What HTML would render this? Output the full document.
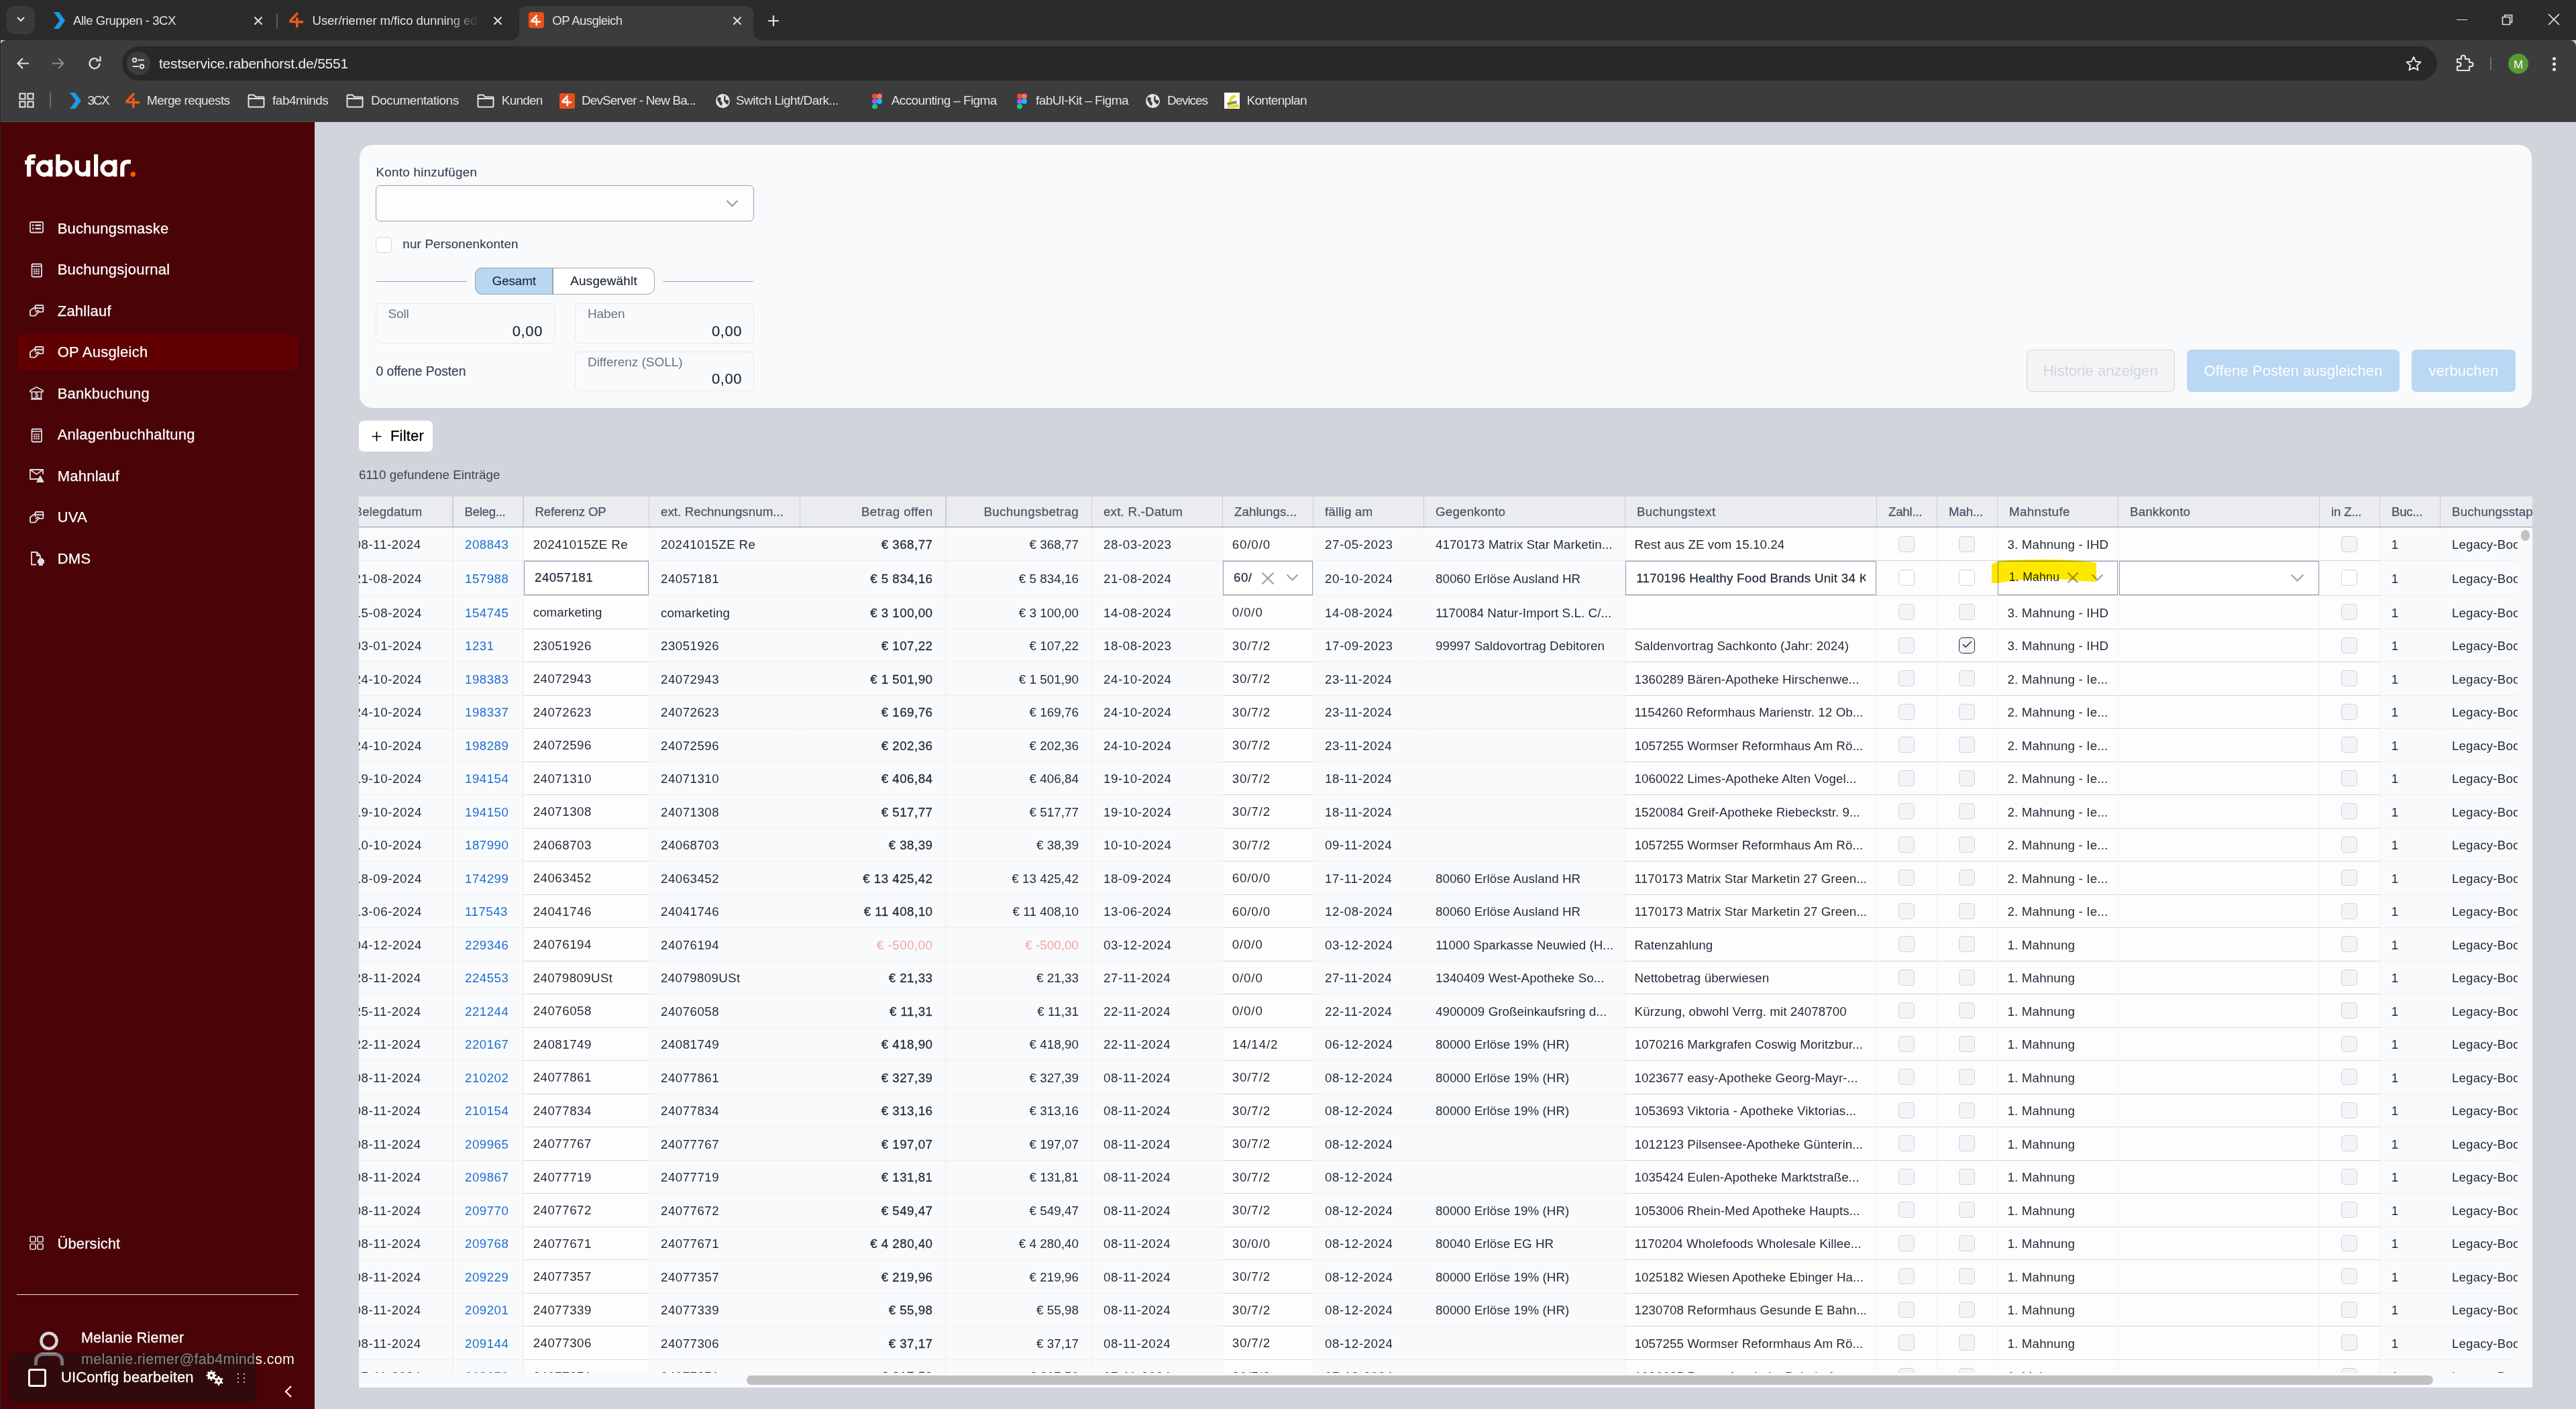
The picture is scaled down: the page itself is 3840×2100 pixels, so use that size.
<!DOCTYPE html><html><head><meta charset="utf-8"><style>
html,body{margin:0;padding:0;}
body{width:3840px;height:2100px;overflow:hidden;position:relative;font-family:"Liberation Sans", sans-serif;background:#d1d5db;}
.t{position:absolute;line-height:1;white-space:nowrap;}
.r{position:absolute;box-sizing:border-box;}
</style></head><body>
<div class="r" style="left:0.00px;top:0.00px;width:3840.00px;height:60.00px;background:#2b2b2b"></div><div class="r" style="left:0.00px;top:60.00px;width:3840.00px;height:121.00px;background:#3c3c3c;border-radius:9px 9px 0 0"></div><div class="r" style="left:0.00px;top:181.00px;width:3840.00px;height:1.00px;background:#4a4e50"></div><div class="r" style="left:10.00px;top:9.00px;width:42.00px;height:42.00px;background:#3a3a3a;border-radius:12px"></div><svg class="r" style="left:24.00px;top:24.00px;" width="14" height="10" viewBox="0 0 14 10"><path d="M2 2 L7 7 L12 2" stroke="#e3e3e3" stroke-width="2.2" fill="none"/></svg><svg class="r" style="left:78.00px;top:18.00px;" width="20" height="25" viewBox="0 0 20 25"><path d="M2 0 H10 L19 12.5 L10 25 H2 L11 12.5 Z" fill="#1a9be6"/></svg><div class="t" style="top:22.49px;font-size:18.6px;color:#e3e3e3;letter-spacing:-0.46px;left:109.00px;">Alle Gruppen - 3CX</div><svg class="r" style="left:378.00px;top:24.00px;" width="14" height="14" viewBox="0 0 14 14"><path d="M1.5 1.5 L12.5 12.5 M12.5 1.5 L1.5 12.5" stroke="#e3e3e3" stroke-width="2"/></svg><div class="r" style="left:412.00px;top:19.50px;width:2.00px;height:23.00px;background:#5b5b5b"></div><svg class="r" style="left:430.00px;top:18.00px;" width="24" height="24" viewBox="0 0 24 24"><path d="M12.8 2.5 L3.2 12.6 Q2.2 14.2 4.4 14.2 L20.5 14.6 M12.8 9.5 V21.8" stroke="#f0561e" stroke-width="3.6" fill="none" stroke-linecap="round" stroke-linejoin="round"/></svg><div class="t" style="top:22.49px;font-size:18.6px;color:#e3e3e3;letter-spacing:-0.109px;left:465.60px;width:250px;overflow:hidden;-webkit-mask-image:linear-gradient(90deg,#000 80%,transparent 100%);height:24px;">User/riemer m/fico dunning edi</div><svg class="r" style="left:735.00px;top:24.00px;" width="14" height="14" viewBox="0 0 14 14"><path d="M1.5 1.5 L12.5 12.5 M12.5 1.5 L1.5 12.5" stroke="#e3e3e3" stroke-width="2"/></svg><svg class="r" style="left:760.00px;top:8.00px;" width="380" height="52" viewBox="0 0 380 52"><path d="M0 52 Q14 52 14 38 V13 Q14 1 26 1 H351 Q363 1 363 13 V38 Q363 52 377 52 Z" fill="#3c3c3c"/></svg><div class="r" style="left:787.50px;top:18.00px;width:23.50px;height:23.50px;background:#e8501c;border-radius:4px"></div><svg class="r" style="left:790.00px;top:21.00px;" width="18" height="18" viewBox="0 0 18 18"><path d="M9.8 2.5 L2.8 10 Q2 11.2 3.6 11.2 L15 11.5 M9.8 7.2 V16" stroke="#fff" stroke-width="2.7" fill="none" stroke-linecap="round" stroke-linejoin="round"/></svg><div class="t" style="top:22.49px;font-size:18.6px;color:#e3e3e3;letter-spacing:-0.594px;left:823.30px;">OP Ausgleich</div><svg class="r" style="left:1092.00px;top:24.00px;" width="14" height="14" viewBox="0 0 14 14"><path d="M1.5 1.5 L12.5 12.5 M12.5 1.5 L1.5 12.5" stroke="#e3e3e3" stroke-width="2"/></svg><svg class="r" style="left:1144.00px;top:22.00px;" width="18" height="18" viewBox="0 0 18 18"><path d="M9 1 V17 M1 9 H17" stroke="#e3e3e3" stroke-width="2.2"/></svg><div class="r" style="left:3662.00px;top:28.50px;width:16.00px;height:1.50px;background:#e3e3e3"></div><svg class="r" style="left:3728.00px;top:20.00px;" width="20" height="18" viewBox="0 0 20 18"><path d="M2.5 5.5 H13.5 V16.5 H2.5 Z M5.5 5.5 V2.5 H16.5 V13.5 H13.5" stroke="#e3e3e3" stroke-width="1.6" fill="none"/></svg><svg class="r" style="left:3798.00px;top:20.00px;" width="18" height="18" viewBox="0 0 18 18"><path d="M1 1 L17 17 M17 1 L1 17" stroke="#e3e3e3" stroke-width="1.7"/></svg><svg class="r" style="left:24.00px;top:85.00px;" width="20" height="19" viewBox="0 0 20 19"><path d="M19 9.5 H3 M10 2 L2.5 9.5 L10 17" stroke="#e3e3e3" stroke-width="2.2" fill="none"/></svg><svg class="r" style="left:77.00px;top:85.00px;" width="20" height="19" viewBox="0 0 20 19"><path d="M1 9.5 H17 M10 2 L17.5 9.5 L10 17" stroke="#8a8a8a" stroke-width="2.2" fill="none"/></svg><svg class="r" style="left:131.00px;top:84.00px;" width="22" height="21" viewBox="0 0 22 21"><path d="M17.5 10.5 A7.5 7.5 0 1 1 15.3 5.2" stroke="#e3e3e3" stroke-width="2.2" fill="none"/><path d="M12 4.5 H18.5 V-2" transform="translate(0,2)" stroke="#e3e3e3" stroke-width="2.2" fill="none"/></svg><div class="r" style="left:182.00px;top:69.00px;width:3451.00px;height:51.00px;background:#282828;border-radius:26px"></div><div class="r" style="left:189.00px;top:77.00px;width:35.00px;height:35.00px;background:#3c3c3c;border-radius:50%"></div><svg class="r" style="left:196.00px;top:85.00px;" width="21" height="19" viewBox="0 0 21 19"><circle cx="4.5" cy="4.5" r="2.8" stroke="#e3e3e3" stroke-width="1.9" fill="none"/><path d="M9.5 4.5 H19" stroke="#e3e3e3" stroke-width="1.9"/><circle cx="15.5" cy="14" r="2.8" stroke="#e3e3e3" stroke-width="1.9" fill="none"/><path d="M1.5 14 H11" stroke="#e3e3e3" stroke-width="1.9"/></svg><div class="t" style="top:83.95px;font-size:21px;color:#f0f0f0;letter-spacing:-0.211px;left:237.00px;">testservice.rabenhorst.de/5551</div><svg class="r" style="left:3584.00px;top:83.00px;" width="28" height="23" viewBox="0 0 28 23"><path d="M14 2 L17.2 8.8 L24.5 9.6 L19 14.5 L20.6 21.5 L14 17.8 L7.4 21.5 L9 14.5 L3.5 9.6 L10.8 8.8 Z" stroke="#e3e3e3" stroke-width="2" fill="none" stroke-linejoin="round"/></svg><svg class="r" style="left:3660.00px;top:80.00px;" width="30" height="27" viewBox="0 0 30 27"><path d="M3 8 H9 V5.5 A3 3 0 0 1 15 5.5 V8 H21 V13 H23.5 A3 3 0 0 1 23.5 19 H21 V25 H3 V19 H5.5 A3 3 0 0 0 5.5 13 H3 Z" stroke="#e3e3e3" stroke-width="2.2" fill="none" stroke-linejoin="round"/></svg><div class="r" style="left:3712.00px;top:84.50px;width:2.00px;height:20.50px;background:#6a6a6a"></div><div class="r" style="left:3739.00px;top:80.00px;width:30.00px;height:30.00px;background:#5a9a33;border-radius:50%"></div><div class="t" style="top:87.75px;font-size:17px;color:#fff;left:2554.00px;width:2400px;text-align:center;">M</div><div class="r" style="left:3804.50px;top:84.50px;width:5.00px;height:5.00px;background:#e3e3e3;border-radius:50%"></div><div class="r" style="left:3804.50px;top:92.50px;width:5.00px;height:5.00px;background:#e3e3e3;border-radius:50%"></div><div class="r" style="left:3804.50px;top:100.50px;width:5.00px;height:5.00px;background:#e3e3e3;border-radius:50%"></div><svg class="r" style="left:28.00px;top:138.00px;" width="24" height="24" viewBox="0 0 24 24"><rect x="1.5" y="1.5" width="8" height="8" stroke="#e3e3e3" stroke-width="2" fill="none"/><rect x="13.5" y="1.5" width="8" height="8" stroke="#e3e3e3" stroke-width="2" fill="none"/><rect x="1.5" y="13.5" width="8" height="8" stroke="#e3e3e3" stroke-width="2" fill="none"/><rect x="13.5" y="13.5" width="8" height="8" stroke="#e3e3e3" stroke-width="2" fill="none"/></svg><div class="r" style="left:73.50px;top:138.00px;width:2.00px;height:24.00px;background:#6a6a6a"></div><svg class="r" style="left:102.00px;top:138.00px;" width="20" height="24" viewBox="0 0 20 24"><path d="M2 0 H10 L19 12 L10 24 H2 L11 12 Z" fill="#1a9be6"/></svg><div class="t" style="top:140.15px;font-size:19px;color:#e3e3e3;letter-spacing:-1.887px;left:130.40px;">3CX</div><svg class="r" style="left:186.00px;top:138.00px;" width="24" height="24" viewBox="0 0 24 24"><path d="M12.8 2.5 L3.2 12.6 Q2.2 14.2 4.4 14.2 L20.5 14.6 M12.8 9.5 V21.8" stroke="#f0561e" stroke-width="3.6" fill="none" stroke-linecap="round" stroke-linejoin="round"/></svg><div class="t" style="top:140.15px;font-size:19px;color:#e3e3e3;letter-spacing:-0.608px;left:219.00px;">Merge requests</div><svg class="r" style="left:369.00px;top:140.00px;" width="26" height="21" viewBox="0 0 26 21"><path d="M1.5 2.5 Q1.5 1.5 2.5 1.5 H9.5 L12 4.5 H23.5 Q24.5 4.5 24.5 5.5 V18.5 Q24.5 19.5 23.5 19.5 H2.5 Q1.5 19.5 1.5 18.5 Z M1.5 7 H24.5" stroke="#e3e3e3" stroke-width="2" fill="none"/></svg><div class="t" style="top:140.15px;font-size:19px;color:#e3e3e3;letter-spacing:-0.474px;left:406.00px;">fab4minds</div><svg class="r" style="left:516.00px;top:140.00px;" width="26" height="21" viewBox="0 0 26 21"><path d="M1.5 2.5 Q1.5 1.5 2.5 1.5 H9.5 L12 4.5 H23.5 Q24.5 4.5 24.5 5.5 V18.5 Q24.5 19.5 23.5 19.5 H2.5 Q1.5 19.5 1.5 18.5 Z M1.5 7 H24.5" stroke="#e3e3e3" stroke-width="2" fill="none"/></svg><div class="t" style="top:140.15px;font-size:19px;color:#e3e3e3;letter-spacing:-0.471px;left:553.00px;">Documentations</div><svg class="r" style="left:711.00px;top:140.00px;" width="26" height="21" viewBox="0 0 26 21"><path d="M1.5 2.5 Q1.5 1.5 2.5 1.5 H9.5 L12 4.5 H23.5 Q24.5 4.5 24.5 5.5 V18.5 Q24.5 19.5 23.5 19.5 H2.5 Q1.5 19.5 1.5 18.5 Z M1.5 7 H24.5" stroke="#e3e3e3" stroke-width="2" fill="none"/></svg><div class="t" style="top:140.15px;font-size:19px;color:#e3e3e3;letter-spacing:-0.818px;left:747.80px;">Kunden</div><div class="r" style="left:833.80px;top:138.50px;width:23.20px;height:23.00px;background:#e8501c;border-radius:3px"></div><svg class="r" style="left:836.00px;top:141.00px;" width="18" height="18" viewBox="0 0 18 18"><path d="M9.8 2.5 L2.8 10 Q2 11.2 3.6 11.2 L15 11.5 M9.8 7.2 V16" stroke="#fff" stroke-width="2.7" fill="none" stroke-linecap="round" stroke-linejoin="round"/></svg><div class="t" style="top:140.15px;font-size:19px;color:#e3e3e3;letter-spacing:-0.905px;left:867.00px;">DevServer - New Ba...</div><svg class="r" style="left:1066.00px;top:139.00px;" width="23" height="23" viewBox="0 0 23 23"><circle cx="11.5" cy="11.5" r="10.5" fill="#e3e3e3"/><path d="M4 6 Q8 5 9 8 Q7 11 10 13 Q12 15 9 19 Q6 16 5 13 Q2 11 4 6 Z M14 3 Q17 6 15 9 Q18 11 20 10 Q21 14 18 17 Q16 15 14 13 Q12 10 14 3Z" fill="#3c3c3c"/></svg><div class="t" style="top:140.15px;font-size:19px;color:#e3e3e3;letter-spacing:-0.549px;left:1097.00px;">Switch Light/Dark...</div><svg class="r" style="left:1299.00px;top:139.00px;" width="18" height="24" viewBox="0 0 18 24"><rect x="1" y="0.5" width="8" height="7.7" rx="3.8" fill="#f24e1e"/><rect x="8" y="0.5" width="8" height="7.7" rx="3.8" fill="#ff7262"/><rect x="1" y="8.2" width="8" height="7.7" rx="3.8" fill="#a259ff"/><circle cx="12" cy="12" r="3.9" fill="#1abcfe"/><rect x="1" y="15.9" width="8" height="7.7" rx="3.8" fill="#0acf83"/></svg><div class="t" style="top:140.15px;font-size:19px;color:#e3e3e3;letter-spacing:-0.607px;left:1328.70px;">Accounting – Figma</div><svg class="r" style="left:1515.00px;top:139.00px;" width="18" height="24" viewBox="0 0 18 24"><rect x="1" y="0.5" width="8" height="7.7" rx="3.8" fill="#f24e1e"/><rect x="8" y="0.5" width="8" height="7.7" rx="3.8" fill="#ff7262"/><rect x="1" y="8.2" width="8" height="7.7" rx="3.8" fill="#a259ff"/><circle cx="12" cy="12" r="3.9" fill="#1abcfe"/><rect x="1" y="15.9" width="8" height="7.7" rx="3.8" fill="#0acf83"/></svg><div class="t" style="top:140.15px;font-size:19px;color:#e3e3e3;letter-spacing:-0.578px;left:1544.00px;">fabUI-Kit – Figma</div><svg class="r" style="left:1707.00px;top:139.00px;" width="23" height="23" viewBox="0 0 23 23"><circle cx="11.5" cy="11.5" r="10.5" fill="#e3e3e3"/><path d="M4 6 Q8 5 9 8 Q7 11 10 13 Q12 15 9 19 Q6 16 5 13 Q2 11 4 6 Z M14 3 Q17 6 15 9 Q18 11 20 10 Q21 14 18 17 Q16 15 14 13 Q12 10 14 3Z" fill="#3c3c3c"/></svg><div class="t" style="top:140.15px;font-size:19px;color:#e3e3e3;letter-spacing:-1.111px;left:1740.00px;">Devices</div><div class="r" style="left:1824.60px;top:137.50px;width:23.80px;height:24.00px;background:#fff"></div><svg class="r" style="left:1824.60px;top:137.50px;" width="24" height="24" viewBox="0 0 24 24"><path d="M6 12 Q10 4 15 3 L18 6 Q12 9 10 14 Z" fill="#e2e21a"/><path d="M4 15 L18 12 L19 16 L5 19 Z" fill="#8a8a7a"/><path d="M4 20 L21 17 L22 22 L5 23Z" fill="#dede20"/></svg><div class="t" style="top:140.15px;font-size:19px;color:#e3e3e3;letter-spacing:-0.674px;left:1858.40px;">Kontenplan</div><div class="r" style="left:0.00px;top:182.00px;width:469.00px;height:1918.00px;background:#4a0306"></div><svg class="r" style="left:30.00px;top:222.00px;" width="180" height="50" viewBox="0 0 180 50"><g transform="translate(-30,-222)" fill="none" stroke="#fefefe" stroke-width="6.2">
<path d="M43.1 263.2 V238 Q43.1 233 48.5 233 H53.2"/>
<path d="M37.1 242 H51.8"/>
<circle cx="66.2" cy="251" r="9.4"/><path d="M75.3 238.1 V263.2"/>
<path d="M86.4 230 V263.2"/><circle cx="95.6" cy="251" r="9.4"/>
<path d="M114.7 239.1 V251.5 A8.35 8.35 0 0 0 131.4 251.5 V239.1 M131.4 250 V263.2"/>
<path d="M143.1 230 V263.2"/>
<circle cx="161.9" cy="251" r="9.4"/><path d="M171.4 238.1 V263.2"/>
<path d="M182.3 263.2 V250 Q182.3 241.2 191 241.2 H195"/>
</g><circle cx="168.3" cy="37.7" r="3.7" fill="#ff5a00"/></svg><div class="r" style="left:25.60px;top:497.70px;width:418.80px;height:54.50px;background:#610000;border-radius:9px"></div><div class="t" style="top:329.50px;font-size:22px;color:#ffffff;letter-spacing:0.25px;left:85.70px;-webkit-text-stroke:0.25px #fff;">Buchungsmaske</div><svg class="r" style="left:44.00px;top:330.20px;" width="23" height="22" viewBox="0 0 23 22"><rect x="1" y="1" width="19" height="15.5" rx="1.5" stroke="#dcdce4" stroke-width="1.8" fill="none"/><rect x="4" y="4.5" width="2.5" height="2.5" fill="#dcdce4"/><rect x="8.5" y="4.5" width="8.5" height="2.5" fill="#dcdce4"/><rect x="4" y="9.5" width="2.5" height="2.5" fill="#dcdce4"/><rect x="8.5" y="9.5" width="8.5" height="2.5" fill="#dcdce4"/></svg><div class="t" style="top:391.00px;font-size:22px;color:#ffffff;letter-spacing:0.25px;left:85.70px;-webkit-text-stroke:0.25px #fff;">Buchungsjournal</div><svg class="r" style="left:44.00px;top:391.70px;" width="23" height="22" viewBox="0 0 23 22"><rect x="3.5" y="1.5" width="14.5" height="19" rx="1.5" stroke="#dcdce4" stroke-width="1.8" fill="none"/><path d="M3.5 5 H18" stroke="#dcdce4" stroke-width="1.6"/><rect x="6.2" y="8.3" width="2.2" height="2.2" fill="#dcdce4"/><rect x="6.2" y="11.5" width="2.2" height="2.2" fill="#dcdce4"/><rect x="6.2" y="14.7" width="2.2" height="2.2" fill="#dcdce4"/><rect x="9.4" y="8.3" width="2.2" height="2.2" fill="#dcdce4"/><rect x="9.4" y="11.5" width="2.2" height="2.2" fill="#dcdce4"/><rect x="9.4" y="14.7" width="2.2" height="2.2" fill="#dcdce4"/><rect x="12.6" y="8.3" width="2.2" height="2.2" fill="#dcdce4"/><rect x="12.6" y="11.5" width="2.2" height="2.2" fill="#dcdce4"/><rect x="12.6" y="14.7" width="2.2" height="2.2" fill="#dcdce4"/></svg><div class="t" style="top:452.50px;font-size:22px;color:#ffffff;letter-spacing:0.25px;left:85.70px;-webkit-text-stroke:0.25px #fff;">Zahllauf</div><svg class="r" style="left:44.00px;top:453.20px;" width="23" height="22" viewBox="0 0 23 22"><path d="M8.6 9.5 V3.2 Q8.6 2 9.8 2 H19.3 Q20.4 2 20.4 3.2 V10.8 Q20.4 11.9 19.3 11.9 H14.2 M8.6 6.2 H20.4" stroke="#dcdce4" stroke-width="1.9" fill="none"/><path d="M8.6 4.6 L1.6 9.3 Q1 9.7 1 10.5 V16.6 Q1 17.6 2 17.6 H8.2 L14.2 11 Q13 9.3 11.3 10.2 L9.2 12.2" stroke="#dcdce4" stroke-width="1.9" fill="none" stroke-linejoin="round"/></svg><div class="t" style="top:514.00px;font-size:22px;color:#ffffff;letter-spacing:0.25px;left:85.70px;-webkit-text-stroke:0.25px #fff;">OP Ausgleich</div><svg class="r" style="left:44.00px;top:514.70px;" width="23" height="22" viewBox="0 0 23 22"><path d="M8.6 9.5 V3.2 Q8.6 2 9.8 2 H19.3 Q20.4 2 20.4 3.2 V10.8 Q20.4 11.9 19.3 11.9 H14.2 M8.6 6.2 H20.4" stroke="#dcdce4" stroke-width="1.9" fill="none"/><path d="M8.6 4.6 L1.6 9.3 Q1 9.7 1 10.5 V16.6 Q1 17.6 2 17.6 H8.2 L14.2 11 Q13 9.3 11.3 10.2 L9.2 12.2" stroke="#dcdce4" stroke-width="1.9" fill="none" stroke-linejoin="round"/></svg><div class="t" style="top:575.50px;font-size:22px;color:#ffffff;letter-spacing:0.25px;left:85.70px;-webkit-text-stroke:0.25px #fff;">Bankbuchung</div><svg class="r" style="left:44.00px;top:576.20px;" width="23" height="22" viewBox="0 0 23 22"><path d="M10.5 1 L20 6 V8 H1 V6 Z M2 19 H19 M3 17.5 H18 M3.5 8 V17 M17.5 8 V17" stroke="#dcdce4" stroke-width="1.7" fill="none"/><text x="10.5" y="16" font-size="10" text-anchor="middle" fill="#dcdce4" font-family="Liberation Sans" font-weight="700">$</text></svg><div class="t" style="top:637.00px;font-size:22px;color:#ffffff;letter-spacing:0.25px;left:85.70px;-webkit-text-stroke:0.25px #fff;">Anlagenbuchhaltung</div><svg class="r" style="left:44.00px;top:637.70px;" width="23" height="22" viewBox="0 0 23 22"><rect x="3.5" y="1.5" width="14.5" height="19" rx="1.5" stroke="#dcdce4" stroke-width="1.8" fill="none"/><path d="M3.5 5 H18" stroke="#dcdce4" stroke-width="1.6"/><rect x="6.2" y="8.3" width="2.2" height="2.2" fill="#dcdce4"/><rect x="6.2" y="11.5" width="2.2" height="2.2" fill="#dcdce4"/><rect x="6.2" y="14.7" width="2.2" height="2.2" fill="#dcdce4"/><rect x="9.4" y="8.3" width="2.2" height="2.2" fill="#dcdce4"/><rect x="9.4" y="11.5" width="2.2" height="2.2" fill="#dcdce4"/><rect x="9.4" y="14.7" width="2.2" height="2.2" fill="#dcdce4"/><rect x="12.6" y="8.3" width="2.2" height="2.2" fill="#dcdce4"/><rect x="12.6" y="11.5" width="2.2" height="2.2" fill="#dcdce4"/><rect x="12.6" y="14.7" width="2.2" height="2.2" fill="#dcdce4"/></svg><div class="t" style="top:698.50px;font-size:22px;color:#ffffff;letter-spacing:0.25px;left:85.70px;-webkit-text-stroke:0.25px #fff;">Mahnlauf</div><svg class="r" style="left:44.00px;top:699.20px;" width="23" height="22" viewBox="0 0 23 22"><path d="M13 15 H1 V1 H20 V8 M1 1 L10.5 8 L20 1" stroke="#dcdce4" stroke-width="1.8" fill="none"/><path d="M16 9 L22 20 H10 Z" fill="#dcdce4"/><path d="M16 12.5 V16 M16 17.5 V18.5" stroke="#dcdce4" stroke-width="1.5"/></svg><div class="t" style="top:760.00px;font-size:22px;color:#ffffff;letter-spacing:0.25px;left:85.70px;-webkit-text-stroke:0.25px #fff;">UVA</div><svg class="r" style="left:44.00px;top:760.70px;" width="23" height="22" viewBox="0 0 23 22"><path d="M8.6 9.5 V3.2 Q8.6 2 9.8 2 H19.3 Q20.4 2 20.4 3.2 V10.8 Q20.4 11.9 19.3 11.9 H14.2 M8.6 6.2 H20.4" stroke="#dcdce4" stroke-width="1.9" fill="none"/><path d="M8.6 4.6 L1.6 9.3 Q1 9.7 1 10.5 V16.6 Q1 17.6 2 17.6 H8.2 L14.2 11 Q13 9.3 11.3 10.2 L9.2 12.2" stroke="#dcdce4" stroke-width="1.9" fill="none" stroke-linejoin="round"/></svg><div class="t" style="top:821.50px;font-size:22px;color:#ffffff;letter-spacing:0.25px;left:85.70px;-webkit-text-stroke:0.25px #fff;">DMS</div><svg class="r" style="left:44.00px;top:822.20px;" width="23" height="22" viewBox="0 0 23 22"><path d="M10 19.5 H3 V1 H11 L16 6 V11 M11 1 V6 H16" stroke="#dcdce4" stroke-width="1.8" fill="none"/><rect x="12" y="12" width="10" height="6" rx="1" fill="#dcdce4"/><rect x="14" y="10" width="6" height="3" fill="#dcdce4"/><rect x="14" y="16" width="6" height="5" fill="#dcdce4"/></svg><div class="t" style="top:1843.10px;font-size:22px;color:#fff;letter-spacing:0.1px;left:85.50px;-webkit-text-stroke:0.25px #fff;">Übersicht</div><svg class="r" style="left:44.00px;top:1842.00px;" width="21" height="21" viewBox="0 0 21 21"><rect x="1" y="1" width="8" height="8" rx="1.5" stroke="#dcdce4" stroke-width="1.7" fill="none"/><rect x="12" y="1" width="8" height="8" rx="1.5" stroke="#dcdce4" stroke-width="1.7" fill="none"/><rect x="1" y="12" width="8" height="8" rx="1.5" stroke="#dcdce4" stroke-width="1.7" fill="none"/><rect x="12" y="12" width="8" height="8" rx="1.5" stroke="#dcdce4" stroke-width="1.7" fill="none"/></svg><div class="r" style="left:25.00px;top:1928.50px;width:420.00px;height:1.50px;background:#e8e0e0"></div><svg class="r" style="left:48.00px;top:1984.00px;" width="50" height="52" viewBox="0 0 50 52"><circle cx="25" cy="14.5" r="11.5" stroke="#d1d5db" stroke-width="4.5" fill="none"/><path d="M5.4 51 V46 Q5.4 34.5 17 34.5 H33 Q44.6 34.5 44.6 46 V51" stroke="#d1d5db" stroke-width="5" fill="none"/></svg><div class="t" style="top:1984.22px;font-size:21.5px;color:#fff;letter-spacing:0.2px;left:121.00px;-webkit-text-stroke:0.3px #fff;">Melanie Riemer</div><div class="t" style="top:2015.82px;font-size:21.5px;color:#f3f4f6;letter-spacing:0.3px;left:121.00px;">melanie.riemer@fab4minds.com</div><div class="r" style="left:13.00px;top:2017.00px;width:369.00px;height:71.50px;background:rgba(22,18,17,0.5);border-radius:6px"></div><div class="r" style="left:42.00px;top:2040.00px;width:27.00px;height:27.00px;border:3px solid #fff;border-radius:3.5px"></div><div class="t" style="top:2041.80px;font-size:22px;color:#fff;letter-spacing:0.1px;left:91.00px;-webkit-text-stroke:0.3px #fff;">UIConfig bearbeiten</div><svg class="r" style="left:306.00px;top:2042.00px;" width="30" height="24" viewBox="0 0 30 24"><circle cx="9" cy="8" r="5.5" fill="#fff"/><circle cx="20" cy="16" r="5" fill="#fff"/><circle cx="9" cy="8" r="2" fill="#2c1414"/><circle cx="20" cy="16" r="1.8" fill="#2c1414"/><rect x="7.7" y="0.5" width="2.6" height="3.5" fill="#fff" transform="rotate(0 9 8)"/><rect x="7.7" y="0.5" width="2.6" height="3.5" fill="#fff" transform="rotate(45 9 8)"/><rect x="7.7" y="0.5" width="2.6" height="3.5" fill="#fff" transform="rotate(90 9 8)"/><rect x="7.7" y="0.5" width="2.6" height="3.5" fill="#fff" transform="rotate(135 9 8)"/><rect x="7.7" y="0.5" width="2.6" height="3.5" fill="#fff" transform="rotate(180 9 8)"/><rect x="7.7" y="0.5" width="2.6" height="3.5" fill="#fff" transform="rotate(225 9 8)"/><rect x="7.7" y="0.5" width="2.6" height="3.5" fill="#fff" transform="rotate(270 9 8)"/><rect x="7.7" y="0.5" width="2.6" height="3.5" fill="#fff" transform="rotate(315 9 8)"/><rect x="18.8" y="9" width="2.4" height="3.2" fill="#fff" transform="rotate(0 20 16)"/><rect x="18.8" y="9" width="2.4" height="3.2" fill="#fff" transform="rotate(60 20 16)"/><rect x="18.8" y="9" width="2.4" height="3.2" fill="#fff" transform="rotate(120 20 16)"/><rect x="18.8" y="9" width="2.4" height="3.2" fill="#fff" transform="rotate(180 20 16)"/><rect x="18.8" y="9" width="2.4" height="3.2" fill="#fff" transform="rotate(240 20 16)"/><rect x="18.8" y="9" width="2.4" height="3.2" fill="#fff" transform="rotate(300 20 16)"/></svg><div class="r" style="left:353.60px;top:2046.60px;width:2.80px;height:2.80px;background:#fff;border-radius:50%"></div><div class="r" style="left:353.60px;top:2052.60px;width:2.80px;height:2.80px;background:#fff;border-radius:50%"></div><div class="r" style="left:353.60px;top:2058.60px;width:2.80px;height:2.80px;background:#fff;border-radius:50%"></div><div class="r" style="left:362.60px;top:2046.60px;width:2.80px;height:2.80px;background:#fff;border-radius:50%"></div><div class="r" style="left:362.60px;top:2052.60px;width:2.80px;height:2.80px;background:#fff;border-radius:50%"></div><div class="r" style="left:362.60px;top:2058.60px;width:2.80px;height:2.80px;background:#fff;border-radius:50%"></div><svg class="r" style="left:423.00px;top:2064.00px;" width="14" height="20" viewBox="0 0 14 20"><path d="M11 2 L3 10 L11 18" stroke="#fff" stroke-width="2.2" fill="none"/></svg><div class="r" style="left:536.00px;top:216.00px;width:3238.00px;height:391.70px;background:#f9fafb;border-radius:19px"></div><div class="t" style="top:247.52px;font-size:18.8px;color:#374151;letter-spacing:0.279px;left:560.50px;-webkit-text-stroke:0.15px #374151;">Konto hinzufügen</div><div class="r" style="left:559.60px;top:276.00px;width:564.60px;height:54.00px;background:#fdfdfe;border:1.5px solid #97a1b3;border-radius:7px"></div><svg class="r" style="left:1081.00px;top:295.50px;" width="21" height="14" viewBox="0 0 21 14"><path d="M2.5 3 L10.5 11 L18.5 3" stroke="#94a0b4" stroke-width="2.4" fill="none"/></svg><div class="r" style="left:559.80px;top:352.80px;width:24.00px;height:24.00px;background:#fff;border:1.5px solid #d1d5db;border-radius:5px"></div><div class="t" style="top:355.32px;font-size:18.8px;color:#374151;letter-spacing:0.182px;left:600.30px;-webkit-text-stroke:0.15px #374151;">nur Personenkonten</div><div class="r" style="left:560.50px;top:419.00px;width:135.50px;height:1.00px;background:#9ca3af"></div><div class="r" style="left:987.50px;top:419.00px;width:135.90px;height:1.00px;background:#9ca3af"></div><div class="r" style="left:708.20px;top:398.80px;width:267.60px;height:40.60px;background:#fff;border:1.5px solid #9ca3af;border-radius:11px;overflow:hidden"></div><div class="r" style="left:708.20px;top:398.80px;width:115.80px;height:40.60px;background:#b9d7f3;border:1.5px solid #9ca3af;border-right:none;border-radius:11px 0 0 11px"></div><div class="r" style="left:823.00px;top:399.50px;width:1.60px;height:39.50px;background:#9ca3af"></div><div class="t" style="top:410.42px;font-size:18.8px;color:#1f2937;letter-spacing:-0.136px;left:733.80px;-webkit-text-stroke:0.2px #1f2937;">Gesamt</div><div class="t" style="top:410.42px;font-size:18.8px;color:#1f2937;letter-spacing:0.251px;left:850.30px;-webkit-text-stroke:0.2px #1f2937;">Ausgewählt</div><div class="r" style="left:559.80px;top:451.90px;width:267.10px;height:59.80px;border:1.5px solid #e5e7eb;border-radius:7px"></div><div class="t" style="top:457.95px;font-size:19px;color:#6b7280;letter-spacing:-0.171px;left:578.60px;">Soll</div><div class="t" style="top:482.60px;font-size:22px;color:#1f2937;letter-spacing:0.6px;left:-391.00px;width:1200px;text-align:right;-webkit-text-stroke:0.2px #1f2937;">0,00</div><div class="r" style="left:856.70px;top:451.90px;width:267.40px;height:59.80px;border:1.5px solid #e5e7eb;border-radius:7px"></div><div class="t" style="top:457.95px;font-size:19px;color:#6b7280;letter-spacing:-0.098px;left:876.00px;">Haben</div><div class="t" style="top:482.60px;font-size:22px;color:#1f2937;letter-spacing:0.6px;left:-93.80px;width:1200px;text-align:right;-webkit-text-stroke:0.2px #1f2937;">0,00</div><div class="r" style="left:856.70px;top:523.70px;width:267.40px;height:59.70px;border:1.5px solid #e5e7eb;border-radius:7px"></div><div class="t" style="top:529.75px;font-size:19px;color:#6b7280;letter-spacing:-0.044px;left:876.00px;">Differenz (SOLL)</div><div class="t" style="top:554.40px;font-size:22px;color:#1f2937;letter-spacing:0.6px;left:-93.80px;width:1200px;text-align:right;-webkit-text-stroke:0.2px #1f2937;">0,00</div><div class="t" style="top:543.71px;font-size:19.4px;color:#374151;letter-spacing:-0.103px;left:560.50px;-webkit-text-stroke:0.15px #374151;">0 offene Posten</div><div class="r" style="left:3020.50px;top:521.00px;width:221.50px;height:63.00px;background:#f3f4f6;border:1.5px solid #d1d5db;border-radius:7px"></div><div class="t" style="top:541.80px;font-size:22px;color:#d1d5db;letter-spacing:0.06px;left:1931.20px;width:2400px;text-align:center;">Historie anzeigen</div><div class="r" style="left:3260.00px;top:521.00px;width:317.00px;height:63.00px;background:#bad7f3;border-radius:7px"></div><div class="t" style="top:541.80px;font-size:22px;color:#fff;letter-spacing:0.089px;left:2218.50px;width:2400px;text-align:center;">Offene Posten ausgleichen</div><div class="r" style="left:3595.00px;top:521.00px;width:155.00px;height:63.00px;background:#bad7f3;border-radius:7px"></div><div class="t" style="top:541.80px;font-size:22px;color:#fff;letter-spacing:0.14px;left:2472.50px;width:2400px;text-align:center;">verbuchen</div><div class="r" style="left:535.20px;top:627.40px;width:109.50px;height:45.40px;background:#fff;border-radius:7px"></div><svg class="r" style="left:554.00px;top:642.50px;" width="15" height="15" viewBox="0 0 15 15"><path d="M7.5 0.5 V14.5 M0.5 7.5 H14.5" stroke="#000" stroke-width="1.7"/></svg><div class="t" style="top:638.80px;font-size:22px;color:#000;letter-spacing:0.185px;left:582.00px;-webkit-text-stroke:0.3px #000;">Filter</div><div class="t" style="top:698.62px;font-size:18.8px;color:#3f4a5a;letter-spacing:0.045px;left:535.00px;-webkit-text-stroke:0.1px #3f4a5a;">6110 gefundene Einträge</div><div class="r" style="left:535.00px;top:740.00px;width:3240.00px;height:1327.50px;overflow:hidden;background:#f9fafb"><div class="r" style="left:0.00px;top:0.00px;width:3240.00px;height:45.00px;background:#ebecf0"></div><div class="r" style="left:139.40px;top:0.00px;width:1.20px;height:45.00px;background:#c9ced8"></div><div class="r" style="left:244.40px;top:0.00px;width:1.20px;height:45.00px;background:#c9ced8"></div><div class="r" style="left:431.90px;top:0.00px;width:1.20px;height:45.00px;background:#c9ced8"></div><div class="r" style="left:656.90px;top:0.00px;width:1.20px;height:45.00px;background:#c9ced8"></div><div class="r" style="left:874.40px;top:0.00px;width:1.20px;height:45.00px;background:#c9ced8"></div><div class="r" style="left:1091.90px;top:0.00px;width:1.20px;height:45.00px;background:#c9ced8"></div><div class="r" style="left:1286.90px;top:0.00px;width:1.20px;height:45.00px;background:#c9ced8"></div><div class="r" style="left:1421.90px;top:0.00px;width:1.20px;height:45.00px;background:#c9ced8"></div><div class="r" style="left:1586.90px;top:0.00px;width:1.20px;height:45.00px;background:#c9ced8"></div><div class="r" style="left:1886.90px;top:0.00px;width:1.20px;height:45.00px;background:#c9ced8"></div><div class="r" style="left:2261.90px;top:0.00px;width:1.20px;height:45.00px;background:#c9ced8"></div><div class="r" style="left:2351.90px;top:0.00px;width:1.20px;height:45.00px;background:#c9ced8"></div><div class="r" style="left:2441.90px;top:0.00px;width:1.20px;height:45.00px;background:#c9ced8"></div><div class="r" style="left:2621.90px;top:0.00px;width:1.20px;height:45.00px;background:#c9ced8"></div><div class="r" style="left:2921.90px;top:0.00px;width:1.20px;height:45.00px;background:#c9ced8"></div><div class="r" style="left:3011.90px;top:0.00px;width:1.20px;height:45.00px;background:#c9ced8"></div><div class="r" style="left:3101.90px;top:0.00px;width:1.20px;height:45.00px;background:#c9ced8"></div><div class="t" style="top:14.11px;font-size:18.7px;color:#475569;letter-spacing:0.2px;left:-7.50px;-webkit-text-stroke:0.25px #475569;">Belegdatum</div><div class="t" style="top:14.11px;font-size:18.7px;color:#475569;letter-spacing:-0.302px;left:157.50px;-webkit-text-stroke:0.25px #475569;">Beleg...</div><div class="t" style="top:14.11px;font-size:18.7px;color:#475569;letter-spacing:-0.172px;left:262.50px;-webkit-text-stroke:0.25px #475569;">Referenz OP</div><div class="t" style="top:14.11px;font-size:18.7px;color:#475569;letter-spacing:0.065px;left:450.00px;-webkit-text-stroke:0.25px #475569;">ext. Rechnungsnum...</div><div class="t" style="top:14.11px;font-size:18.7px;color:#475569;letter-spacing:0.421px;left:-344.50px;width:1200px;text-align:right;-webkit-text-stroke:0.25px #475569;">Betrag offen</div><div class="t" style="top:14.11px;font-size:18.7px;color:#475569;letter-spacing:0.393px;left:-127.00px;width:1200px;text-align:right;-webkit-text-stroke:0.25px #475569;">Buchungsbetrag</div><div class="t" style="top:14.11px;font-size:18.7px;color:#475569;letter-spacing:0.22px;left:1110.00px;-webkit-text-stroke:0.25px #475569;">ext. R.-Datum</div><div class="t" style="top:14.11px;font-size:18.7px;color:#475569;letter-spacing:0.062px;left:1305.00px;-webkit-text-stroke:0.25px #475569;">Zahlungs...</div><div class="t" style="top:14.11px;font-size:18.7px;color:#475569;letter-spacing:0.174px;left:1440.00px;-webkit-text-stroke:0.25px #475569;">fällig am</div><div class="t" style="top:14.11px;font-size:18.7px;color:#475569;letter-spacing:0.241px;left:1605.00px;-webkit-text-stroke:0.25px #475569;">Gegenkonto</div><div class="t" style="top:14.11px;font-size:18.7px;color:#475569;letter-spacing:0.366px;left:1905.00px;-webkit-text-stroke:0.25px #475569;">Buchungstext</div><div class="t" style="top:14.11px;font-size:18.7px;color:#475569;letter-spacing:-0.238px;left:2280.00px;-webkit-text-stroke:0.25px #475569;">Zahl...</div><div class="t" style="top:14.11px;font-size:18.7px;color:#475569;letter-spacing:-0.144px;left:2370.00px;-webkit-text-stroke:0.25px #475569;">Mah...</div><div class="t" style="top:14.11px;font-size:18.7px;color:#475569;letter-spacing:0.387px;left:2460.00px;-webkit-text-stroke:0.25px #475569;">Mahnstufe</div><div class="t" style="top:14.11px;font-size:18.7px;color:#475569;letter-spacing:0.204px;left:2640.00px;-webkit-text-stroke:0.25px #475569;">Bankkonto</div><div class="t" style="top:14.11px;font-size:18.7px;color:#475569;letter-spacing:-0.194px;left:2940.00px;-webkit-text-stroke:0.25px #475569;">in Z...</div><div class="t" style="top:14.11px;font-size:18.7px;color:#475569;letter-spacing:-0.268px;left:3030.00px;-webkit-text-stroke:0.25px #475569;">Buc...</div><div class="t" style="top:14.11px;font-size:18.7px;color:#475569;letter-spacing:0.2px;left:3120.00px;-webkit-text-stroke:0.25px #475569;">Buchungsstap</div><div class="r" style="left:0.00px;top:45.00px;width:3240.00px;height:1.00px;background:#8d97a8"></div><div class="r" style="left:0.00px;top:46.50px;width:3218.00px;height:1259.00px;overflow:hidden;"><div class="r" style="left:245.00px;top:-0.50px;width:187.50px;height:49.00px;background:#fdfdfd"></div><div class="r" style="left:1287.50px;top:-0.50px;width:135.00px;height:49.00px;background:#fdfdfd"></div><div class="r" style="left:1887.50px;top:-0.50px;width:375.00px;height:49.00px;background:#fdfdfd"></div><div class="r" style="left:2262.50px;top:-0.50px;width:90.00px;height:49.00px;background:#fdfdfd"></div><div class="r" style="left:2352.50px;top:-0.50px;width:90.00px;height:49.00px;background:#fdfdfd"></div><div class="r" style="left:2442.50px;top:-0.50px;width:180.00px;height:49.00px;background:#fdfdfd"></div><div class="r" style="left:2622.50px;top:-0.50px;width:300.00px;height:49.00px;background:#fdfdfd"></div><div class="r" style="left:2922.50px;top:-0.50px;width:90.00px;height:49.00px;background:#fdfdfd"></div><div class="r" style="left:0.00px;top:48.50px;width:3218.00px;height:1.00px;background:#eceef2"></div><div class="r" style="left:245.00px;top:48.50px;width:187.50px;height:1.00px;background:#d0d4de"></div><div class="r" style="left:245.00px;top:47.50px;width:187.50px;height:1.00px;background:#fff"></div><div class="r" style="left:1287.50px;top:48.50px;width:135.00px;height:1.00px;background:#d0d4de"></div><div class="r" style="left:1287.50px;top:47.50px;width:135.00px;height:1.00px;background:#fff"></div><div class="r" style="left:1887.50px;top:48.50px;width:375.00px;height:1.00px;background:#d0d4de"></div><div class="r" style="left:1887.50px;top:47.50px;width:375.00px;height:1.00px;background:#fff"></div><div class="r" style="left:2262.50px;top:48.50px;width:90.00px;height:1.00px;background:#d0d4de"></div><div class="r" style="left:2262.50px;top:47.50px;width:90.00px;height:1.00px;background:#fff"></div><div class="r" style="left:2352.50px;top:48.50px;width:90.00px;height:1.00px;background:#d0d4de"></div><div class="r" style="left:2352.50px;top:47.50px;width:90.00px;height:1.00px;background:#fff"></div><div class="r" style="left:2442.50px;top:48.50px;width:180.00px;height:1.00px;background:#d0d4de"></div><div class="r" style="left:2442.50px;top:47.50px;width:180.00px;height:1.00px;background:#fff"></div><div class="r" style="left:2622.50px;top:48.50px;width:300.00px;height:1.00px;background:#d0d4de"></div><div class="r" style="left:2622.50px;top:47.50px;width:300.00px;height:1.00px;background:#fff"></div><div class="r" style="left:2922.50px;top:48.50px;width:90.00px;height:1.00px;background:#d0d4de"></div><div class="r" style="left:2922.50px;top:47.50px;width:90.00px;height:1.00px;background:#fff"></div><div class="r" style="left:139.25px;top:-0.50px;width:1.50px;height:50.00px;background:#f1f2f5"></div><div class="r" style="left:244.25px;top:-0.50px;width:1.50px;height:50.00px;background:#f1f2f5"></div><div class="r" style="left:431.75px;top:-0.50px;width:1.50px;height:50.00px;background:#f1f2f5"></div><div class="r" style="left:656.75px;top:-0.50px;width:1.50px;height:50.00px;background:#f1f2f5"></div><div class="r" style="left:874.25px;top:-0.50px;width:1.50px;height:50.00px;background:#f1f2f5"></div><div class="r" style="left:1091.75px;top:-0.50px;width:1.50px;height:50.00px;background:#f1f2f5"></div><div class="r" style="left:1286.75px;top:-0.50px;width:1.50px;height:50.00px;background:#f1f2f5"></div><div class="r" style="left:1421.75px;top:-0.50px;width:1.50px;height:50.00px;background:#f1f2f5"></div><div class="r" style="left:1586.75px;top:-0.50px;width:1.50px;height:50.00px;background:#f1f2f5"></div><div class="r" style="left:1886.75px;top:-0.50px;width:1.50px;height:50.00px;background:#f1f2f5"></div><div class="r" style="left:2261.75px;top:-0.50px;width:1.50px;height:50.00px;background:#f1f2f5"></div><div class="r" style="left:2351.75px;top:-0.50px;width:1.50px;height:50.00px;background:#f1f2f5"></div><div class="r" style="left:2441.75px;top:-0.50px;width:1.50px;height:50.00px;background:#f1f2f5"></div><div class="r" style="left:2621.75px;top:-0.50px;width:1.50px;height:50.00px;background:#f1f2f5"></div><div class="r" style="left:2921.75px;top:-0.50px;width:1.50px;height:50.00px;background:#f1f2f5"></div><div class="r" style="left:3011.75px;top:-0.50px;width:1.50px;height:50.00px;background:#f1f2f5"></div><div class="r" style="left:3101.75px;top:-0.50px;width:1.50px;height:50.00px;background:#f1f2f5"></div><div class="t" style="top:16.90px;font-size:18.7px;color:#1f2937;letter-spacing:0.6px;left:-7.50px;">08-11-2024</div><div class="t" style="top:16.90px;font-size:18.7px;color:#1b6dd4;letter-spacing:0.5px;left:158.00px;">208843</div><div class="t" style="top:16.20px;font-size:18.7px;color:#1f2937;letter-spacing:0.4px;left:259.70px;">20241015ZE Re</div><div class="t" style="top:16.90px;font-size:18.7px;color:#1f2937;letter-spacing:0.4px;left:450.00px;">20241015ZE Re</div><div class="t" style="top:16.90px;font-size:18.7px;color:#1f2937;letter-spacing:0.5px;left:-344.50px;width:1200px;text-align:right;-webkit-text-stroke:0.3px #1f2937;">€ 368,77</div><div class="t" style="top:16.90px;font-size:18.7px;color:#1f2937;letter-spacing:0.1px;left:-127.00px;width:1200px;text-align:right;">€ 368,77</div><div class="t" style="top:16.90px;font-size:18.7px;color:#1f2937;letter-spacing:0.6px;left:1110.00px;">28-03-2023</div><div class="t" style="top:16.20px;font-size:18.7px;color:#1f2937;letter-spacing:0.9px;left:1301.70px;">60/0/0</div><div class="t" style="top:16.90px;font-size:18.7px;color:#1f2937;letter-spacing:0.6px;left:1440.00px;">27-05-2023</div><div class="t" style="top:16.90px;font-size:18.7px;color:#1f2937;letter-spacing:0.1px;left:1604.90px;">4170173 Matrix Star Marketin...</div><div class="t" style="top:16.90px;font-size:18.7px;color:#1f2937;letter-spacing:0.1px;left:1901.60px;">Rest aus ZE vom 15.10.24</div><div class="r" style="left:2294.70px;top:12.40px;width:24.00px;height:24.00px;background:#f3f4f7;border:1.5px solid #cdd3de;border-radius:5px"></div><div class="r" style="left:2384.70px;top:12.40px;width:24.00px;height:24.00px;background:#f3f4f7;border:1.5px solid #cdd3de;border-radius:5px"></div><div class="t" style="top:16.90px;font-size:18.7px;color:#1f2937;letter-spacing:0.2px;left:2457.40px;">3. Mahnung - IHD</div><div class="r" style="left:2954.70px;top:12.40px;width:24.00px;height:24.00px;background:#f3f4f7;border:1.5px solid #cdd3de;border-radius:5px"></div><div class="t" style="top:16.90px;font-size:18.7px;color:#1f2937;left:3029.70px;">1</div><div class="t" style="top:16.90px;font-size:18.7px;color:#1f2937;letter-spacing:0.2px;left:3119.90px;">Legacy-Booking</div><div class="r" style="left:245.00px;top:49.50px;width:187.50px;height:51.00px;background:#fdfdfd"></div><div class="r" style="left:1287.50px;top:49.50px;width:135.00px;height:51.00px;background:#fdfdfd"></div><div class="r" style="left:1887.50px;top:49.50px;width:375.00px;height:51.00px;background:#fdfdfd"></div><div class="r" style="left:2262.50px;top:49.50px;width:90.00px;height:51.00px;background:#fdfdfd"></div><div class="r" style="left:2352.50px;top:49.50px;width:90.00px;height:51.00px;background:#fdfdfd"></div><div class="r" style="left:2442.50px;top:49.50px;width:180.00px;height:51.00px;background:#fdfdfd"></div><div class="r" style="left:2622.50px;top:49.50px;width:300.00px;height:51.00px;background:#fdfdfd"></div><div class="r" style="left:2922.50px;top:49.50px;width:90.00px;height:51.00px;background:#fdfdfd"></div><div class="r" style="left:0.00px;top:100.50px;width:3218.00px;height:1.00px;background:#eceef2"></div><div class="r" style="left:245.00px;top:100.50px;width:187.50px;height:1.00px;background:#d0d4de"></div><div class="r" style="left:245.00px;top:99.50px;width:187.50px;height:1.00px;background:#fff"></div><div class="r" style="left:1287.50px;top:100.50px;width:135.00px;height:1.00px;background:#d0d4de"></div><div class="r" style="left:1287.50px;top:99.50px;width:135.00px;height:1.00px;background:#fff"></div><div class="r" style="left:1887.50px;top:100.50px;width:375.00px;height:1.00px;background:#d0d4de"></div><div class="r" style="left:1887.50px;top:99.50px;width:375.00px;height:1.00px;background:#fff"></div><div class="r" style="left:2262.50px;top:100.50px;width:90.00px;height:1.00px;background:#d0d4de"></div><div class="r" style="left:2262.50px;top:99.50px;width:90.00px;height:1.00px;background:#fff"></div><div class="r" style="left:2352.50px;top:100.50px;width:90.00px;height:1.00px;background:#d0d4de"></div><div class="r" style="left:2352.50px;top:99.50px;width:90.00px;height:1.00px;background:#fff"></div><div class="r" style="left:2442.50px;top:100.50px;width:180.00px;height:1.00px;background:#d0d4de"></div><div class="r" style="left:2442.50px;top:99.50px;width:180.00px;height:1.00px;background:#fff"></div><div class="r" style="left:2622.50px;top:100.50px;width:300.00px;height:1.00px;background:#d0d4de"></div><div class="r" style="left:2622.50px;top:99.50px;width:300.00px;height:1.00px;background:#fff"></div><div class="r" style="left:2922.50px;top:100.50px;width:90.00px;height:1.00px;background:#d0d4de"></div><div class="r" style="left:2922.50px;top:99.50px;width:90.00px;height:1.00px;background:#fff"></div><div class="r" style="left:139.25px;top:49.50px;width:1.50px;height:52.00px;background:#f1f2f5"></div><div class="r" style="left:244.25px;top:49.50px;width:1.50px;height:52.00px;background:#f1f2f5"></div><div class="r" style="left:431.75px;top:49.50px;width:1.50px;height:52.00px;background:#f1f2f5"></div><div class="r" style="left:656.75px;top:49.50px;width:1.50px;height:52.00px;background:#f1f2f5"></div><div class="r" style="left:874.25px;top:49.50px;width:1.50px;height:52.00px;background:#f1f2f5"></div><div class="r" style="left:1091.75px;top:49.50px;width:1.50px;height:52.00px;background:#f1f2f5"></div><div class="r" style="left:1286.75px;top:49.50px;width:1.50px;height:52.00px;background:#f1f2f5"></div><div class="r" style="left:1421.75px;top:49.50px;width:1.50px;height:52.00px;background:#f1f2f5"></div><div class="r" style="left:1586.75px;top:49.50px;width:1.50px;height:52.00px;background:#f1f2f5"></div><div class="r" style="left:1886.75px;top:49.50px;width:1.50px;height:52.00px;background:#f1f2f5"></div><div class="r" style="left:2261.75px;top:49.50px;width:1.50px;height:52.00px;background:#f1f2f5"></div><div class="r" style="left:2351.75px;top:49.50px;width:1.50px;height:52.00px;background:#f1f2f5"></div><div class="r" style="left:2441.75px;top:49.50px;width:1.50px;height:52.00px;background:#f1f2f5"></div><div class="r" style="left:2621.75px;top:49.50px;width:1.50px;height:52.00px;background:#f1f2f5"></div><div class="r" style="left:2921.75px;top:49.50px;width:1.50px;height:52.00px;background:#f1f2f5"></div><div class="r" style="left:3011.75px;top:49.50px;width:1.50px;height:52.00px;background:#f1f2f5"></div><div class="r" style="left:3101.75px;top:49.50px;width:1.50px;height:52.00px;background:#f1f2f5"></div><div class="t" style="top:67.45px;font-size:18.7px;color:#1f2937;letter-spacing:0.6px;left:-7.50px;">21-08-2024</div><div class="t" style="top:67.45px;font-size:18.7px;color:#1b6dd4;letter-spacing:0.5px;left:158.00px;">157988</div><div class="t" style="top:67.45px;font-size:18.7px;color:#1f2937;letter-spacing:0.5px;left:450.00px;">24057181</div><div class="t" style="top:67.45px;font-size:18.7px;color:#1f2937;letter-spacing:0.5px;left:-344.50px;width:1200px;text-align:right;-webkit-text-stroke:0.3px #1f2937;">€ 5 834,16</div><div class="t" style="top:67.45px;font-size:18.7px;color:#1f2937;letter-spacing:0.1px;left:-127.00px;width:1200px;text-align:right;">€ 5 834,16</div><div class="t" style="top:67.45px;font-size:18.7px;color:#1f2937;letter-spacing:0.6px;left:1110.00px;">21-08-2024</div><div class="t" style="top:67.45px;font-size:18.7px;color:#1f2937;letter-spacing:0.6px;left:1440.00px;">20-10-2024</div><div class="t" style="top:67.45px;font-size:18.7px;color:#1f2937;letter-spacing:0.1px;left:1604.90px;">80060 Erlöse Ausland HR</div><div class="r" style="left:2294.70px;top:62.95px;width:24.00px;height:24.00px;background:#fff;border:1.5px solid #cdd3de;border-radius:5px"></div><div class="r" style="left:2384.70px;top:62.95px;width:24.00px;height:24.00px;background:#fff;border:1.5px solid #cdd3de;border-radius:5px"></div><div class="r" style="left:2954.70px;top:62.95px;width:24.00px;height:24.00px;background:#fff;border:1.5px solid #cdd3de;border-radius:5px"></div><div class="t" style="top:67.45px;font-size:18.7px;color:#1f2937;left:3029.70px;">1</div><div class="t" style="top:67.45px;font-size:18.7px;color:#1f2937;letter-spacing:0.2px;left:3119.90px;">Legacy-Booking</div><div class="r" style="left:245.00px;top:101.50px;width:187.50px;height:49.00px;background:#fdfdfd"></div><div class="r" style="left:1287.50px;top:101.50px;width:135.00px;height:49.00px;background:#fdfdfd"></div><div class="r" style="left:1887.50px;top:101.50px;width:375.00px;height:49.00px;background:#fdfdfd"></div><div class="r" style="left:2262.50px;top:101.50px;width:90.00px;height:49.00px;background:#fdfdfd"></div><div class="r" style="left:2352.50px;top:101.50px;width:90.00px;height:49.00px;background:#fdfdfd"></div><div class="r" style="left:2442.50px;top:101.50px;width:180.00px;height:49.00px;background:#fdfdfd"></div><div class="r" style="left:2622.50px;top:101.50px;width:300.00px;height:49.00px;background:#fdfdfd"></div><div class="r" style="left:2922.50px;top:101.50px;width:90.00px;height:49.00px;background:#fdfdfd"></div><div class="r" style="left:0.00px;top:150.50px;width:3218.00px;height:1.00px;background:#eceef2"></div><div class="r" style="left:245.00px;top:150.50px;width:187.50px;height:1.00px;background:#d0d4de"></div><div class="r" style="left:245.00px;top:149.50px;width:187.50px;height:1.00px;background:#fff"></div><div class="r" style="left:1287.50px;top:150.50px;width:135.00px;height:1.00px;background:#d0d4de"></div><div class="r" style="left:1287.50px;top:149.50px;width:135.00px;height:1.00px;background:#fff"></div><div class="r" style="left:1887.50px;top:150.50px;width:375.00px;height:1.00px;background:#d0d4de"></div><div class="r" style="left:1887.50px;top:149.50px;width:375.00px;height:1.00px;background:#fff"></div><div class="r" style="left:2262.50px;top:150.50px;width:90.00px;height:1.00px;background:#d0d4de"></div><div class="r" style="left:2262.50px;top:149.50px;width:90.00px;height:1.00px;background:#fff"></div><div class="r" style="left:2352.50px;top:150.50px;width:90.00px;height:1.00px;background:#d0d4de"></div><div class="r" style="left:2352.50px;top:149.50px;width:90.00px;height:1.00px;background:#fff"></div><div class="r" style="left:2442.50px;top:150.50px;width:180.00px;height:1.00px;background:#d0d4de"></div><div class="r" style="left:2442.50px;top:149.50px;width:180.00px;height:1.00px;background:#fff"></div><div class="r" style="left:2622.50px;top:150.50px;width:300.00px;height:1.00px;background:#d0d4de"></div><div class="r" style="left:2622.50px;top:149.50px;width:300.00px;height:1.00px;background:#fff"></div><div class="r" style="left:2922.50px;top:150.50px;width:90.00px;height:1.00px;background:#d0d4de"></div><div class="r" style="left:2922.50px;top:149.50px;width:90.00px;height:1.00px;background:#fff"></div><div class="r" style="left:139.25px;top:101.50px;width:1.50px;height:50.00px;background:#f1f2f5"></div><div class="r" style="left:244.25px;top:101.50px;width:1.50px;height:50.00px;background:#f1f2f5"></div><div class="r" style="left:431.75px;top:101.50px;width:1.50px;height:50.00px;background:#f1f2f5"></div><div class="r" style="left:656.75px;top:101.50px;width:1.50px;height:50.00px;background:#f1f2f5"></div><div class="r" style="left:874.25px;top:101.50px;width:1.50px;height:50.00px;background:#f1f2f5"></div><div class="r" style="left:1091.75px;top:101.50px;width:1.50px;height:50.00px;background:#f1f2f5"></div><div class="r" style="left:1286.75px;top:101.50px;width:1.50px;height:50.00px;background:#f1f2f5"></div><div class="r" style="left:1421.75px;top:101.50px;width:1.50px;height:50.00px;background:#f1f2f5"></div><div class="r" style="left:1586.75px;top:101.50px;width:1.50px;height:50.00px;background:#f1f2f5"></div><div class="r" style="left:1886.75px;top:101.50px;width:1.50px;height:50.00px;background:#f1f2f5"></div><div class="r" style="left:2261.75px;top:101.50px;width:1.50px;height:50.00px;background:#f1f2f5"></div><div class="r" style="left:2351.75px;top:101.50px;width:1.50px;height:50.00px;background:#f1f2f5"></div><div class="r" style="left:2441.75px;top:101.50px;width:1.50px;height:50.00px;background:#f1f2f5"></div><div class="r" style="left:2621.75px;top:101.50px;width:1.50px;height:50.00px;background:#f1f2f5"></div><div class="r" style="left:2921.75px;top:101.50px;width:1.50px;height:50.00px;background:#f1f2f5"></div><div class="r" style="left:3011.75px;top:101.50px;width:1.50px;height:50.00px;background:#f1f2f5"></div><div class="r" style="left:3101.75px;top:101.50px;width:1.50px;height:50.00px;background:#f1f2f5"></div><div class="t" style="top:118.25px;font-size:18.7px;color:#1f2937;letter-spacing:0.6px;left:-7.50px;">15-08-2024</div><div class="t" style="top:118.25px;font-size:18.7px;color:#1b6dd4;letter-spacing:0.5px;left:158.00px;">154745</div><div class="t" style="top:117.55px;font-size:18.7px;color:#1f2937;letter-spacing:0.1px;left:259.70px;">comarketing</div><div class="t" style="top:118.25px;font-size:18.7px;color:#1f2937;letter-spacing:0.1px;left:450.00px;">comarketing</div><div class="t" style="top:118.25px;font-size:18.7px;color:#1f2937;letter-spacing:0.5px;left:-344.50px;width:1200px;text-align:right;-webkit-text-stroke:0.3px #1f2937;">€ 3 100,00</div><div class="t" style="top:118.25px;font-size:18.7px;color:#1f2937;letter-spacing:0.1px;left:-127.00px;width:1200px;text-align:right;">€ 3 100,00</div><div class="t" style="top:118.25px;font-size:18.7px;color:#1f2937;letter-spacing:0.6px;left:1110.00px;">14-08-2024</div><div class="t" style="top:117.55px;font-size:18.7px;color:#1f2937;letter-spacing:0.9px;left:1301.70px;">0/0/0</div><div class="t" style="top:118.25px;font-size:18.7px;color:#1f2937;letter-spacing:0.6px;left:1440.00px;">14-08-2024</div><div class="t" style="top:118.25px;font-size:18.7px;color:#1f2937;letter-spacing:0.1px;left:1604.90px;">1170084 Natur-Import S.L. C/...</div><div class="r" style="left:2294.70px;top:113.75px;width:24.00px;height:24.00px;background:#f3f4f7;border:1.5px solid #cdd3de;border-radius:5px"></div><div class="r" style="left:2384.70px;top:113.75px;width:24.00px;height:24.00px;background:#f3f4f7;border:1.5px solid #cdd3de;border-radius:5px"></div><div class="t" style="top:118.25px;font-size:18.7px;color:#1f2937;letter-spacing:0.2px;left:2457.40px;">3. Mahnung - IHD</div><div class="r" style="left:2954.70px;top:113.75px;width:24.00px;height:24.00px;background:#f3f4f7;border:1.5px solid #cdd3de;border-radius:5px"></div><div class="t" style="top:118.25px;font-size:18.7px;color:#1f2937;left:3029.70px;">1</div><div class="t" style="top:118.25px;font-size:18.7px;color:#1f2937;letter-spacing:0.2px;left:3119.90px;">Legacy-Booking</div><div class="r" style="left:245.00px;top:151.50px;width:187.50px;height:48.00px;background:#fdfdfd"></div><div class="r" style="left:1287.50px;top:151.50px;width:135.00px;height:48.00px;background:#fdfdfd"></div><div class="r" style="left:1887.50px;top:151.50px;width:375.00px;height:48.00px;background:#fdfdfd"></div><div class="r" style="left:2262.50px;top:151.50px;width:90.00px;height:48.00px;background:#fdfdfd"></div><div class="r" style="left:2352.50px;top:151.50px;width:90.00px;height:48.00px;background:#fdfdfd"></div><div class="r" style="left:2442.50px;top:151.50px;width:180.00px;height:48.00px;background:#fdfdfd"></div><div class="r" style="left:2622.50px;top:151.50px;width:300.00px;height:48.00px;background:#fdfdfd"></div><div class="r" style="left:2922.50px;top:151.50px;width:90.00px;height:48.00px;background:#fdfdfd"></div><div class="r" style="left:0.00px;top:199.50px;width:3218.00px;height:1.00px;background:#eceef2"></div><div class="r" style="left:245.00px;top:199.50px;width:187.50px;height:1.00px;background:#d0d4de"></div><div class="r" style="left:245.00px;top:198.50px;width:187.50px;height:1.00px;background:#fff"></div><div class="r" style="left:1287.50px;top:199.50px;width:135.00px;height:1.00px;background:#d0d4de"></div><div class="r" style="left:1287.50px;top:198.50px;width:135.00px;height:1.00px;background:#fff"></div><div class="r" style="left:1887.50px;top:199.50px;width:375.00px;height:1.00px;background:#d0d4de"></div><div class="r" style="left:1887.50px;top:198.50px;width:375.00px;height:1.00px;background:#fff"></div><div class="r" style="left:2262.50px;top:199.50px;width:90.00px;height:1.00px;background:#d0d4de"></div><div class="r" style="left:2262.50px;top:198.50px;width:90.00px;height:1.00px;background:#fff"></div><div class="r" style="left:2352.50px;top:199.50px;width:90.00px;height:1.00px;background:#d0d4de"></div><div class="r" style="left:2352.50px;top:198.50px;width:90.00px;height:1.00px;background:#fff"></div><div class="r" style="left:2442.50px;top:199.50px;width:180.00px;height:1.00px;background:#d0d4de"></div><div class="r" style="left:2442.50px;top:198.50px;width:180.00px;height:1.00px;background:#fff"></div><div class="r" style="left:2622.50px;top:199.50px;width:300.00px;height:1.00px;background:#d0d4de"></div><div class="r" style="left:2622.50px;top:198.50px;width:300.00px;height:1.00px;background:#fff"></div><div class="r" style="left:2922.50px;top:199.50px;width:90.00px;height:1.00px;background:#d0d4de"></div><div class="r" style="left:2922.50px;top:198.50px;width:90.00px;height:1.00px;background:#fff"></div><div class="r" style="left:139.25px;top:151.50px;width:1.50px;height:49.00px;background:#f1f2f5"></div><div class="r" style="left:244.25px;top:151.50px;width:1.50px;height:49.00px;background:#f1f2f5"></div><div class="r" style="left:431.75px;top:151.50px;width:1.50px;height:49.00px;background:#f1f2f5"></div><div class="r" style="left:656.75px;top:151.50px;width:1.50px;height:49.00px;background:#f1f2f5"></div><div class="r" style="left:874.25px;top:151.50px;width:1.50px;height:49.00px;background:#f1f2f5"></div><div class="r" style="left:1091.75px;top:151.50px;width:1.50px;height:49.00px;background:#f1f2f5"></div><div class="r" style="left:1286.75px;top:151.50px;width:1.50px;height:49.00px;background:#f1f2f5"></div><div class="r" style="left:1421.75px;top:151.50px;width:1.50px;height:49.00px;background:#f1f2f5"></div><div class="r" style="left:1586.75px;top:151.50px;width:1.50px;height:49.00px;background:#f1f2f5"></div><div class="r" style="left:1886.75px;top:151.50px;width:1.50px;height:49.00px;background:#f1f2f5"></div><div class="r" style="left:2261.75px;top:151.50px;width:1.50px;height:49.00px;background:#f1f2f5"></div><div class="r" style="left:2351.75px;top:151.50px;width:1.50px;height:49.00px;background:#f1f2f5"></div><div class="r" style="left:2441.75px;top:151.50px;width:1.50px;height:49.00px;background:#f1f2f5"></div><div class="r" style="left:2621.75px;top:151.50px;width:1.50px;height:49.00px;background:#f1f2f5"></div><div class="r" style="left:2921.75px;top:151.50px;width:1.50px;height:49.00px;background:#f1f2f5"></div><div class="r" style="left:3011.75px;top:151.50px;width:1.50px;height:49.00px;background:#f1f2f5"></div><div class="r" style="left:3101.75px;top:151.50px;width:1.50px;height:49.00px;background:#f1f2f5"></div><div class="t" style="top:167.75px;font-size:18.7px;color:#1f2937;letter-spacing:0.6px;left:-7.50px;">03-01-2024</div><div class="t" style="top:167.75px;font-size:18.7px;color:#1b6dd4;letter-spacing:0.5px;left:158.00px;">1231</div><div class="t" style="top:167.05px;font-size:18.7px;color:#1f2937;letter-spacing:0.5px;left:259.70px;">23051926</div><div class="t" style="top:167.75px;font-size:18.7px;color:#1f2937;letter-spacing:0.5px;left:450.00px;">23051926</div><div class="t" style="top:167.75px;font-size:18.7px;color:#1f2937;letter-spacing:0.5px;left:-344.50px;width:1200px;text-align:right;-webkit-text-stroke:0.3px #1f2937;">€ 107,22</div><div class="t" style="top:167.75px;font-size:18.7px;color:#1f2937;letter-spacing:0.1px;left:-127.00px;width:1200px;text-align:right;">€ 107,22</div><div class="t" style="top:167.75px;font-size:18.7px;color:#1f2937;letter-spacing:0.6px;left:1110.00px;">18-08-2023</div><div class="t" style="top:167.05px;font-size:18.7px;color:#1f2937;letter-spacing:0.9px;left:1301.70px;">30/7/2</div><div class="t" style="top:167.75px;font-size:18.7px;color:#1f2937;letter-spacing:0.6px;left:1440.00px;">17-09-2023</div><div class="t" style="top:167.75px;font-size:18.7px;color:#1f2937;letter-spacing:0.1px;left:1604.90px;">99997 Saldovortrag Debitoren</div><div class="t" style="top:167.75px;font-size:18.7px;color:#1f2937;letter-spacing:0.1px;left:1901.60px;">Saldenvortrag Sachkonto (Jahr: 2024)</div><div class="r" style="left:2294.70px;top:163.25px;width:24.00px;height:24.00px;background:#f3f4f7;border:1.5px solid #cdd3de;border-radius:5px"></div><div class="r" style="left:2384.90px;top:163.05px;width:24.00px;height:24.00px;background:#f3f4f7;border:1.6px solid #1e293b;border-radius:5.5px"></div><svg class="r" style="left:2389.50px;top:168.35px;" width="16" height="14" viewBox="0 0 16 14"><path d="M0.8 4.8 L5.1 9 L14 0.2" transform="translate(0,0.5)" stroke="#1e293b" stroke-width="1.6" fill="none"/></svg><div class="t" style="top:167.75px;font-size:18.7px;color:#1f2937;letter-spacing:0.2px;left:2457.40px;">3. Mahnung - IHD</div><div class="r" style="left:2954.70px;top:163.25px;width:24.00px;height:24.00px;background:#f3f4f7;border:1.5px solid #cdd3de;border-radius:5px"></div><div class="t" style="top:167.75px;font-size:18.7px;color:#1f2937;left:3029.70px;">1</div><div class="t" style="top:167.75px;font-size:18.7px;color:#1f2937;letter-spacing:0.2px;left:3119.90px;">Legacy-Booking</div><div class="r" style="left:245.00px;top:200.50px;width:187.50px;height:49.00px;background:#fdfdfd"></div><div class="r" style="left:1287.50px;top:200.50px;width:135.00px;height:49.00px;background:#fdfdfd"></div><div class="r" style="left:1887.50px;top:200.50px;width:375.00px;height:49.00px;background:#fdfdfd"></div><div class="r" style="left:2262.50px;top:200.50px;width:90.00px;height:49.00px;background:#fdfdfd"></div><div class="r" style="left:2352.50px;top:200.50px;width:90.00px;height:49.00px;background:#fdfdfd"></div><div class="r" style="left:2442.50px;top:200.50px;width:180.00px;height:49.00px;background:#fdfdfd"></div><div class="r" style="left:2622.50px;top:200.50px;width:300.00px;height:49.00px;background:#fdfdfd"></div><div class="r" style="left:2922.50px;top:200.50px;width:90.00px;height:49.00px;background:#fdfdfd"></div><div class="r" style="left:0.00px;top:249.50px;width:3218.00px;height:1.00px;background:#eceef2"></div><div class="r" style="left:245.00px;top:249.50px;width:187.50px;height:1.00px;background:#d0d4de"></div><div class="r" style="left:245.00px;top:248.50px;width:187.50px;height:1.00px;background:#fff"></div><div class="r" style="left:1287.50px;top:249.50px;width:135.00px;height:1.00px;background:#d0d4de"></div><div class="r" style="left:1287.50px;top:248.50px;width:135.00px;height:1.00px;background:#fff"></div><div class="r" style="left:1887.50px;top:249.50px;width:375.00px;height:1.00px;background:#d0d4de"></div><div class="r" style="left:1887.50px;top:248.50px;width:375.00px;height:1.00px;background:#fff"></div><div class="r" style="left:2262.50px;top:249.50px;width:90.00px;height:1.00px;background:#d0d4de"></div><div class="r" style="left:2262.50px;top:248.50px;width:90.00px;height:1.00px;background:#fff"></div><div class="r" style="left:2352.50px;top:249.50px;width:90.00px;height:1.00px;background:#d0d4de"></div><div class="r" style="left:2352.50px;top:248.50px;width:90.00px;height:1.00px;background:#fff"></div><div class="r" style="left:2442.50px;top:249.50px;width:180.00px;height:1.00px;background:#d0d4de"></div><div class="r" style="left:2442.50px;top:248.50px;width:180.00px;height:1.00px;background:#fff"></div><div class="r" style="left:2622.50px;top:249.50px;width:300.00px;height:1.00px;background:#d0d4de"></div><div class="r" style="left:2622.50px;top:248.50px;width:300.00px;height:1.00px;background:#fff"></div><div class="r" style="left:2922.50px;top:249.50px;width:90.00px;height:1.00px;background:#d0d4de"></div><div class="r" style="left:2922.50px;top:248.50px;width:90.00px;height:1.00px;background:#fff"></div><div class="r" style="left:139.25px;top:200.50px;width:1.50px;height:50.00px;background:#f1f2f5"></div><div class="r" style="left:244.25px;top:200.50px;width:1.50px;height:50.00px;background:#f1f2f5"></div><div class="r" style="left:431.75px;top:200.50px;width:1.50px;height:50.00px;background:#f1f2f5"></div><div class="r" style="left:656.75px;top:200.50px;width:1.50px;height:50.00px;background:#f1f2f5"></div><div class="r" style="left:874.25px;top:200.50px;width:1.50px;height:50.00px;background:#f1f2f5"></div><div class="r" style="left:1091.75px;top:200.50px;width:1.50px;height:50.00px;background:#f1f2f5"></div><div class="r" style="left:1286.75px;top:200.50px;width:1.50px;height:50.00px;background:#f1f2f5"></div><div class="r" style="left:1421.75px;top:200.50px;width:1.50px;height:50.00px;background:#f1f2f5"></div><div class="r" style="left:1586.75px;top:200.50px;width:1.50px;height:50.00px;background:#f1f2f5"></div><div class="r" style="left:1886.75px;top:200.50px;width:1.50px;height:50.00px;background:#f1f2f5"></div><div class="r" style="left:2261.75px;top:200.50px;width:1.50px;height:50.00px;background:#f1f2f5"></div><div class="r" style="left:2351.75px;top:200.50px;width:1.50px;height:50.00px;background:#f1f2f5"></div><div class="r" style="left:2441.75px;top:200.50px;width:1.50px;height:50.00px;background:#f1f2f5"></div><div class="r" style="left:2621.75px;top:200.50px;width:1.50px;height:50.00px;background:#f1f2f5"></div><div class="r" style="left:2921.75px;top:200.50px;width:1.50px;height:50.00px;background:#f1f2f5"></div><div class="r" style="left:3011.75px;top:200.50px;width:1.50px;height:50.00px;background:#f1f2f5"></div><div class="r" style="left:3101.75px;top:200.50px;width:1.50px;height:50.00px;background:#f1f2f5"></div><div class="t" style="top:217.25px;font-size:18.7px;color:#1f2937;letter-spacing:0.6px;left:-7.50px;">24-10-2024</div><div class="t" style="top:217.25px;font-size:18.7px;color:#1b6dd4;letter-spacing:0.5px;left:158.00px;">198383</div><div class="t" style="top:216.55px;font-size:18.7px;color:#1f2937;letter-spacing:0.5px;left:259.70px;">24072943</div><div class="t" style="top:217.25px;font-size:18.7px;color:#1f2937;letter-spacing:0.5px;left:450.00px;">24072943</div><div class="t" style="top:217.25px;font-size:18.7px;color:#1f2937;letter-spacing:0.5px;left:-344.50px;width:1200px;text-align:right;-webkit-text-stroke:0.3px #1f2937;">€ 1 501,90</div><div class="t" style="top:217.25px;font-size:18.7px;color:#1f2937;letter-spacing:0.1px;left:-127.00px;width:1200px;text-align:right;">€ 1 501,90</div><div class="t" style="top:217.25px;font-size:18.7px;color:#1f2937;letter-spacing:0.6px;left:1110.00px;">24-10-2024</div><div class="t" style="top:216.55px;font-size:18.7px;color:#1f2937;letter-spacing:0.9px;left:1301.70px;">30/7/2</div><div class="t" style="top:217.25px;font-size:18.7px;color:#1f2937;letter-spacing:0.6px;left:1440.00px;">23-11-2024</div><div class="t" style="top:217.25px;font-size:18.7px;color:#1f2937;letter-spacing:0.1px;left:1901.60px;">1360289 Bären-Apotheke Hirschenwe...</div><div class="r" style="left:2294.70px;top:212.75px;width:24.00px;height:24.00px;background:#f3f4f7;border:1.5px solid #cdd3de;border-radius:5px"></div><div class="r" style="left:2384.70px;top:212.75px;width:24.00px;height:24.00px;background:#f3f4f7;border:1.5px solid #cdd3de;border-radius:5px"></div><div class="t" style="top:217.25px;font-size:18.7px;color:#1f2937;letter-spacing:0.2px;left:2457.40px;">2. Mahnung - Ie...</div><div class="r" style="left:2954.70px;top:212.75px;width:24.00px;height:24.00px;background:#f3f4f7;border:1.5px solid #cdd3de;border-radius:5px"></div><div class="t" style="top:217.25px;font-size:18.7px;color:#1f2937;left:3029.70px;">1</div><div class="t" style="top:217.25px;font-size:18.7px;color:#1f2937;letter-spacing:0.2px;left:3119.90px;">Legacy-Booking</div><div class="r" style="left:245.00px;top:250.50px;width:187.50px;height:48.00px;background:#fdfdfd"></div><div class="r" style="left:1287.50px;top:250.50px;width:135.00px;height:48.00px;background:#fdfdfd"></div><div class="r" style="left:1887.50px;top:250.50px;width:375.00px;height:48.00px;background:#fdfdfd"></div><div class="r" style="left:2262.50px;top:250.50px;width:90.00px;height:48.00px;background:#fdfdfd"></div><div class="r" style="left:2352.50px;top:250.50px;width:90.00px;height:48.00px;background:#fdfdfd"></div><div class="r" style="left:2442.50px;top:250.50px;width:180.00px;height:48.00px;background:#fdfdfd"></div><div class="r" style="left:2622.50px;top:250.50px;width:300.00px;height:48.00px;background:#fdfdfd"></div><div class="r" style="left:2922.50px;top:250.50px;width:90.00px;height:48.00px;background:#fdfdfd"></div><div class="r" style="left:0.00px;top:298.50px;width:3218.00px;height:1.00px;background:#eceef2"></div><div class="r" style="left:245.00px;top:298.50px;width:187.50px;height:1.00px;background:#d0d4de"></div><div class="r" style="left:245.00px;top:297.50px;width:187.50px;height:1.00px;background:#fff"></div><div class="r" style="left:1287.50px;top:298.50px;width:135.00px;height:1.00px;background:#d0d4de"></div><div class="r" style="left:1287.50px;top:297.50px;width:135.00px;height:1.00px;background:#fff"></div><div class="r" style="left:1887.50px;top:298.50px;width:375.00px;height:1.00px;background:#d0d4de"></div><div class="r" style="left:1887.50px;top:297.50px;width:375.00px;height:1.00px;background:#fff"></div><div class="r" style="left:2262.50px;top:298.50px;width:90.00px;height:1.00px;background:#d0d4de"></div><div class="r" style="left:2262.50px;top:297.50px;width:90.00px;height:1.00px;background:#fff"></div><div class="r" style="left:2352.50px;top:298.50px;width:90.00px;height:1.00px;background:#d0d4de"></div><div class="r" style="left:2352.50px;top:297.50px;width:90.00px;height:1.00px;background:#fff"></div><div class="r" style="left:2442.50px;top:298.50px;width:180.00px;height:1.00px;background:#d0d4de"></div><div class="r" style="left:2442.50px;top:297.50px;width:180.00px;height:1.00px;background:#fff"></div><div class="r" style="left:2622.50px;top:298.50px;width:300.00px;height:1.00px;background:#d0d4de"></div><div class="r" style="left:2622.50px;top:297.50px;width:300.00px;height:1.00px;background:#fff"></div><div class="r" style="left:2922.50px;top:298.50px;width:90.00px;height:1.00px;background:#d0d4de"></div><div class="r" style="left:2922.50px;top:297.50px;width:90.00px;height:1.00px;background:#fff"></div><div class="r" style="left:139.25px;top:250.50px;width:1.50px;height:49.00px;background:#f1f2f5"></div><div class="r" style="left:244.25px;top:250.50px;width:1.50px;height:49.00px;background:#f1f2f5"></div><div class="r" style="left:431.75px;top:250.50px;width:1.50px;height:49.00px;background:#f1f2f5"></div><div class="r" style="left:656.75px;top:250.50px;width:1.50px;height:49.00px;background:#f1f2f5"></div><div class="r" style="left:874.25px;top:250.50px;width:1.50px;height:49.00px;background:#f1f2f5"></div><div class="r" style="left:1091.75px;top:250.50px;width:1.50px;height:49.00px;background:#f1f2f5"></div><div class="r" style="left:1286.75px;top:250.50px;width:1.50px;height:49.00px;background:#f1f2f5"></div><div class="r" style="left:1421.75px;top:250.50px;width:1.50px;height:49.00px;background:#f1f2f5"></div><div class="r" style="left:1586.75px;top:250.50px;width:1.50px;height:49.00px;background:#f1f2f5"></div><div class="r" style="left:1886.75px;top:250.50px;width:1.50px;height:49.00px;background:#f1f2f5"></div><div class="r" style="left:2261.75px;top:250.50px;width:1.50px;height:49.00px;background:#f1f2f5"></div><div class="r" style="left:2351.75px;top:250.50px;width:1.50px;height:49.00px;background:#f1f2f5"></div><div class="r" style="left:2441.75px;top:250.50px;width:1.50px;height:49.00px;background:#f1f2f5"></div><div class="r" style="left:2621.75px;top:250.50px;width:1.50px;height:49.00px;background:#f1f2f5"></div><div class="r" style="left:2921.75px;top:250.50px;width:1.50px;height:49.00px;background:#f1f2f5"></div><div class="r" style="left:3011.75px;top:250.50px;width:1.50px;height:49.00px;background:#f1f2f5"></div><div class="r" style="left:3101.75px;top:250.50px;width:1.50px;height:49.00px;background:#f1f2f5"></div><div class="t" style="top:266.75px;font-size:18.7px;color:#1f2937;letter-spacing:0.6px;left:-7.50px;">24-10-2024</div><div class="t" style="top:266.75px;font-size:18.7px;color:#1b6dd4;letter-spacing:0.5px;left:158.00px;">198337</div><div class="t" style="top:266.05px;font-size:18.7px;color:#1f2937;letter-spacing:0.5px;left:259.70px;">24072623</div><div class="t" style="top:266.75px;font-size:18.7px;color:#1f2937;letter-spacing:0.5px;left:450.00px;">24072623</div><div class="t" style="top:266.75px;font-size:18.7px;color:#1f2937;letter-spacing:0.5px;left:-344.50px;width:1200px;text-align:right;-webkit-text-stroke:0.3px #1f2937;">€ 169,76</div><div class="t" style="top:266.75px;font-size:18.7px;color:#1f2937;letter-spacing:0.1px;left:-127.00px;width:1200px;text-align:right;">€ 169,76</div><div class="t" style="top:266.75px;font-size:18.7px;color:#1f2937;letter-spacing:0.6px;left:1110.00px;">24-10-2024</div><div class="t" style="top:266.05px;font-size:18.7px;color:#1f2937;letter-spacing:0.9px;left:1301.70px;">30/7/2</div><div class="t" style="top:266.75px;font-size:18.7px;color:#1f2937;letter-spacing:0.6px;left:1440.00px;">23-11-2024</div><div class="t" style="top:266.75px;font-size:18.7px;color:#1f2937;letter-spacing:0.1px;left:1901.60px;">1154260 Reformhaus Marienstr. 12 Ob...</div><div class="r" style="left:2294.70px;top:262.25px;width:24.00px;height:24.00px;background:#f3f4f7;border:1.5px solid #cdd3de;border-radius:5px"></div><div class="r" style="left:2384.70px;top:262.25px;width:24.00px;height:24.00px;background:#f3f4f7;border:1.5px solid #cdd3de;border-radius:5px"></div><div class="t" style="top:266.75px;font-size:18.7px;color:#1f2937;letter-spacing:0.2px;left:2457.40px;">2. Mahnung - Ie...</div><div class="r" style="left:2954.70px;top:262.25px;width:24.00px;height:24.00px;background:#f3f4f7;border:1.5px solid #cdd3de;border-radius:5px"></div><div class="t" style="top:266.75px;font-size:18.7px;color:#1f2937;left:3029.70px;">1</div><div class="t" style="top:266.75px;font-size:18.7px;color:#1f2937;letter-spacing:0.2px;left:3119.90px;">Legacy-Booking</div><div class="r" style="left:245.00px;top:299.50px;width:187.50px;height:49.00px;background:#fdfdfd"></div><div class="r" style="left:1287.50px;top:299.50px;width:135.00px;height:49.00px;background:#fdfdfd"></div><div class="r" style="left:1887.50px;top:299.50px;width:375.00px;height:49.00px;background:#fdfdfd"></div><div class="r" style="left:2262.50px;top:299.50px;width:90.00px;height:49.00px;background:#fdfdfd"></div><div class="r" style="left:2352.50px;top:299.50px;width:90.00px;height:49.00px;background:#fdfdfd"></div><div class="r" style="left:2442.50px;top:299.50px;width:180.00px;height:49.00px;background:#fdfdfd"></div><div class="r" style="left:2622.50px;top:299.50px;width:300.00px;height:49.00px;background:#fdfdfd"></div><div class="r" style="left:2922.50px;top:299.50px;width:90.00px;height:49.00px;background:#fdfdfd"></div><div class="r" style="left:0.00px;top:348.50px;width:3218.00px;height:1.00px;background:#eceef2"></div><div class="r" style="left:245.00px;top:348.50px;width:187.50px;height:1.00px;background:#d0d4de"></div><div class="r" style="left:245.00px;top:347.50px;width:187.50px;height:1.00px;background:#fff"></div><div class="r" style="left:1287.50px;top:348.50px;width:135.00px;height:1.00px;background:#d0d4de"></div><div class="r" style="left:1287.50px;top:347.50px;width:135.00px;height:1.00px;background:#fff"></div><div class="r" style="left:1887.50px;top:348.50px;width:375.00px;height:1.00px;background:#d0d4de"></div><div class="r" style="left:1887.50px;top:347.50px;width:375.00px;height:1.00px;background:#fff"></div><div class="r" style="left:2262.50px;top:348.50px;width:90.00px;height:1.00px;background:#d0d4de"></div><div class="r" style="left:2262.50px;top:347.50px;width:90.00px;height:1.00px;background:#fff"></div><div class="r" style="left:2352.50px;top:348.50px;width:90.00px;height:1.00px;background:#d0d4de"></div><div class="r" style="left:2352.50px;top:347.50px;width:90.00px;height:1.00px;background:#fff"></div><div class="r" style="left:2442.50px;top:348.50px;width:180.00px;height:1.00px;background:#d0d4de"></div><div class="r" style="left:2442.50px;top:347.50px;width:180.00px;height:1.00px;background:#fff"></div><div class="r" style="left:2622.50px;top:348.50px;width:300.00px;height:1.00px;background:#d0d4de"></div><div class="r" style="left:2622.50px;top:347.50px;width:300.00px;height:1.00px;background:#fff"></div><div class="r" style="left:2922.50px;top:348.50px;width:90.00px;height:1.00px;background:#d0d4de"></div><div class="r" style="left:2922.50px;top:347.50px;width:90.00px;height:1.00px;background:#fff"></div><div class="r" style="left:139.25px;top:299.50px;width:1.50px;height:50.00px;background:#f1f2f5"></div><div class="r" style="left:244.25px;top:299.50px;width:1.50px;height:50.00px;background:#f1f2f5"></div><div class="r" style="left:431.75px;top:299.50px;width:1.50px;height:50.00px;background:#f1f2f5"></div><div class="r" style="left:656.75px;top:299.50px;width:1.50px;height:50.00px;background:#f1f2f5"></div><div class="r" style="left:874.25px;top:299.50px;width:1.50px;height:50.00px;background:#f1f2f5"></div><div class="r" style="left:1091.75px;top:299.50px;width:1.50px;height:50.00px;background:#f1f2f5"></div><div class="r" style="left:1286.75px;top:299.50px;width:1.50px;height:50.00px;background:#f1f2f5"></div><div class="r" style="left:1421.75px;top:299.50px;width:1.50px;height:50.00px;background:#f1f2f5"></div><div class="r" style="left:1586.75px;top:299.50px;width:1.50px;height:50.00px;background:#f1f2f5"></div><div class="r" style="left:1886.75px;top:299.50px;width:1.50px;height:50.00px;background:#f1f2f5"></div><div class="r" style="left:2261.75px;top:299.50px;width:1.50px;height:50.00px;background:#f1f2f5"></div><div class="r" style="left:2351.75px;top:299.50px;width:1.50px;height:50.00px;background:#f1f2f5"></div><div class="r" style="left:2441.75px;top:299.50px;width:1.50px;height:50.00px;background:#f1f2f5"></div><div class="r" style="left:2621.75px;top:299.50px;width:1.50px;height:50.00px;background:#f1f2f5"></div><div class="r" style="left:2921.75px;top:299.50px;width:1.50px;height:50.00px;background:#f1f2f5"></div><div class="r" style="left:3011.75px;top:299.50px;width:1.50px;height:50.00px;background:#f1f2f5"></div><div class="r" style="left:3101.75px;top:299.50px;width:1.50px;height:50.00px;background:#f1f2f5"></div><div class="t" style="top:316.25px;font-size:18.7px;color:#1f2937;letter-spacing:0.6px;left:-7.50px;">24-10-2024</div><div class="t" style="top:316.25px;font-size:18.7px;color:#1b6dd4;letter-spacing:0.5px;left:158.00px;">198289</div><div class="t" style="top:315.55px;font-size:18.7px;color:#1f2937;letter-spacing:0.5px;left:259.70px;">24072596</div><div class="t" style="top:316.25px;font-size:18.7px;color:#1f2937;letter-spacing:0.5px;left:450.00px;">24072596</div><div class="t" style="top:316.25px;font-size:18.7px;color:#1f2937;letter-spacing:0.5px;left:-344.50px;width:1200px;text-align:right;-webkit-text-stroke:0.3px #1f2937;">€ 202,36</div><div class="t" style="top:316.25px;font-size:18.7px;color:#1f2937;letter-spacing:0.1px;left:-127.00px;width:1200px;text-align:right;">€ 202,36</div><div class="t" style="top:316.25px;font-size:18.7px;color:#1f2937;letter-spacing:0.6px;left:1110.00px;">24-10-2024</div><div class="t" style="top:315.55px;font-size:18.7px;color:#1f2937;letter-spacing:0.9px;left:1301.70px;">30/7/2</div><div class="t" style="top:316.25px;font-size:18.7px;color:#1f2937;letter-spacing:0.6px;left:1440.00px;">23-11-2024</div><div class="t" style="top:316.25px;font-size:18.7px;color:#1f2937;letter-spacing:0.1px;left:1901.60px;">1057255 Wormser Reformhaus Am Rö...</div><div class="r" style="left:2294.70px;top:311.75px;width:24.00px;height:24.00px;background:#f3f4f7;border:1.5px solid #cdd3de;border-radius:5px"></div><div class="r" style="left:2384.70px;top:311.75px;width:24.00px;height:24.00px;background:#f3f4f7;border:1.5px solid #cdd3de;border-radius:5px"></div><div class="t" style="top:316.25px;font-size:18.7px;color:#1f2937;letter-spacing:0.2px;left:2457.40px;">2. Mahnung - Ie...</div><div class="r" style="left:2954.70px;top:311.75px;width:24.00px;height:24.00px;background:#f3f4f7;border:1.5px solid #cdd3de;border-radius:5px"></div><div class="t" style="top:316.25px;font-size:18.7px;color:#1f2937;left:3029.70px;">1</div><div class="t" style="top:316.25px;font-size:18.7px;color:#1f2937;letter-spacing:0.2px;left:3119.90px;">Legacy-Booking</div><div class="r" style="left:245.00px;top:349.50px;width:187.50px;height:48.00px;background:#fdfdfd"></div><div class="r" style="left:1287.50px;top:349.50px;width:135.00px;height:48.00px;background:#fdfdfd"></div><div class="r" style="left:1887.50px;top:349.50px;width:375.00px;height:48.00px;background:#fdfdfd"></div><div class="r" style="left:2262.50px;top:349.50px;width:90.00px;height:48.00px;background:#fdfdfd"></div><div class="r" style="left:2352.50px;top:349.50px;width:90.00px;height:48.00px;background:#fdfdfd"></div><div class="r" style="left:2442.50px;top:349.50px;width:180.00px;height:48.00px;background:#fdfdfd"></div><div class="r" style="left:2622.50px;top:349.50px;width:300.00px;height:48.00px;background:#fdfdfd"></div><div class="r" style="left:2922.50px;top:349.50px;width:90.00px;height:48.00px;background:#fdfdfd"></div><div class="r" style="left:0.00px;top:397.50px;width:3218.00px;height:1.00px;background:#eceef2"></div><div class="r" style="left:245.00px;top:397.50px;width:187.50px;height:1.00px;background:#d0d4de"></div><div class="r" style="left:245.00px;top:396.50px;width:187.50px;height:1.00px;background:#fff"></div><div class="r" style="left:1287.50px;top:397.50px;width:135.00px;height:1.00px;background:#d0d4de"></div><div class="r" style="left:1287.50px;top:396.50px;width:135.00px;height:1.00px;background:#fff"></div><div class="r" style="left:1887.50px;top:397.50px;width:375.00px;height:1.00px;background:#d0d4de"></div><div class="r" style="left:1887.50px;top:396.50px;width:375.00px;height:1.00px;background:#fff"></div><div class="r" style="left:2262.50px;top:397.50px;width:90.00px;height:1.00px;background:#d0d4de"></div><div class="r" style="left:2262.50px;top:396.50px;width:90.00px;height:1.00px;background:#fff"></div><div class="r" style="left:2352.50px;top:397.50px;width:90.00px;height:1.00px;background:#d0d4de"></div><div class="r" style="left:2352.50px;top:396.50px;width:90.00px;height:1.00px;background:#fff"></div><div class="r" style="left:2442.50px;top:397.50px;width:180.00px;height:1.00px;background:#d0d4de"></div><div class="r" style="left:2442.50px;top:396.50px;width:180.00px;height:1.00px;background:#fff"></div><div class="r" style="left:2622.50px;top:397.50px;width:300.00px;height:1.00px;background:#d0d4de"></div><div class="r" style="left:2622.50px;top:396.50px;width:300.00px;height:1.00px;background:#fff"></div><div class="r" style="left:2922.50px;top:397.50px;width:90.00px;height:1.00px;background:#d0d4de"></div><div class="r" style="left:2922.50px;top:396.50px;width:90.00px;height:1.00px;background:#fff"></div><div class="r" style="left:139.25px;top:349.50px;width:1.50px;height:49.00px;background:#f1f2f5"></div><div class="r" style="left:244.25px;top:349.50px;width:1.50px;height:49.00px;background:#f1f2f5"></div><div class="r" style="left:431.75px;top:349.50px;width:1.50px;height:49.00px;background:#f1f2f5"></div><div class="r" style="left:656.75px;top:349.50px;width:1.50px;height:49.00px;background:#f1f2f5"></div><div class="r" style="left:874.25px;top:349.50px;width:1.50px;height:49.00px;background:#f1f2f5"></div><div class="r" style="left:1091.75px;top:349.50px;width:1.50px;height:49.00px;background:#f1f2f5"></div><div class="r" style="left:1286.75px;top:349.50px;width:1.50px;height:49.00px;background:#f1f2f5"></div><div class="r" style="left:1421.75px;top:349.50px;width:1.50px;height:49.00px;background:#f1f2f5"></div><div class="r" style="left:1586.75px;top:349.50px;width:1.50px;height:49.00px;background:#f1f2f5"></div><div class="r" style="left:1886.75px;top:349.50px;width:1.50px;height:49.00px;background:#f1f2f5"></div><div class="r" style="left:2261.75px;top:349.50px;width:1.50px;height:49.00px;background:#f1f2f5"></div><div class="r" style="left:2351.75px;top:349.50px;width:1.50px;height:49.00px;background:#f1f2f5"></div><div class="r" style="left:2441.75px;top:349.50px;width:1.50px;height:49.00px;background:#f1f2f5"></div><div class="r" style="left:2621.75px;top:349.50px;width:1.50px;height:49.00px;background:#f1f2f5"></div><div class="r" style="left:2921.75px;top:349.50px;width:1.50px;height:49.00px;background:#f1f2f5"></div><div class="r" style="left:3011.75px;top:349.50px;width:1.50px;height:49.00px;background:#f1f2f5"></div><div class="r" style="left:3101.75px;top:349.50px;width:1.50px;height:49.00px;background:#f1f2f5"></div><div class="t" style="top:365.75px;font-size:18.7px;color:#1f2937;letter-spacing:0.6px;left:-7.50px;">19-10-2024</div><div class="t" style="top:365.75px;font-size:18.7px;color:#1b6dd4;letter-spacing:0.5px;left:158.00px;">194154</div><div class="t" style="top:365.05px;font-size:18.7px;color:#1f2937;letter-spacing:0.5px;left:259.70px;">24071310</div><div class="t" style="top:365.75px;font-size:18.7px;color:#1f2937;letter-spacing:0.5px;left:450.00px;">24071310</div><div class="t" style="top:365.75px;font-size:18.7px;color:#1f2937;letter-spacing:0.5px;left:-344.50px;width:1200px;text-align:right;-webkit-text-stroke:0.3px #1f2937;">€ 406,84</div><div class="t" style="top:365.75px;font-size:18.7px;color:#1f2937;letter-spacing:0.1px;left:-127.00px;width:1200px;text-align:right;">€ 406,84</div><div class="t" style="top:365.75px;font-size:18.7px;color:#1f2937;letter-spacing:0.6px;left:1110.00px;">19-10-2024</div><div class="t" style="top:365.05px;font-size:18.7px;color:#1f2937;letter-spacing:0.9px;left:1301.70px;">30/7/2</div><div class="t" style="top:365.75px;font-size:18.7px;color:#1f2937;letter-spacing:0.6px;left:1440.00px;">18-11-2024</div><div class="t" style="top:365.75px;font-size:18.7px;color:#1f2937;letter-spacing:0.1px;left:1901.60px;">1060022 Limes-Apotheke Alten Vogel...</div><div class="r" style="left:2294.70px;top:361.25px;width:24.00px;height:24.00px;background:#f3f4f7;border:1.5px solid #cdd3de;border-radius:5px"></div><div class="r" style="left:2384.70px;top:361.25px;width:24.00px;height:24.00px;background:#f3f4f7;border:1.5px solid #cdd3de;border-radius:5px"></div><div class="t" style="top:365.75px;font-size:18.7px;color:#1f2937;letter-spacing:0.2px;left:2457.40px;">2. Mahnung - Ie...</div><div class="r" style="left:2954.70px;top:361.25px;width:24.00px;height:24.00px;background:#f3f4f7;border:1.5px solid #cdd3de;border-radius:5px"></div><div class="t" style="top:365.75px;font-size:18.7px;color:#1f2937;left:3029.70px;">1</div><div class="t" style="top:365.75px;font-size:18.7px;color:#1f2937;letter-spacing:0.2px;left:3119.90px;">Legacy-Booking</div><div class="r" style="left:245.00px;top:398.50px;width:187.50px;height:49.00px;background:#fdfdfd"></div><div class="r" style="left:1287.50px;top:398.50px;width:135.00px;height:49.00px;background:#fdfdfd"></div><div class="r" style="left:1887.50px;top:398.50px;width:375.00px;height:49.00px;background:#fdfdfd"></div><div class="r" style="left:2262.50px;top:398.50px;width:90.00px;height:49.00px;background:#fdfdfd"></div><div class="r" style="left:2352.50px;top:398.50px;width:90.00px;height:49.00px;background:#fdfdfd"></div><div class="r" style="left:2442.50px;top:398.50px;width:180.00px;height:49.00px;background:#fdfdfd"></div><div class="r" style="left:2622.50px;top:398.50px;width:300.00px;height:49.00px;background:#fdfdfd"></div><div class="r" style="left:2922.50px;top:398.50px;width:90.00px;height:49.00px;background:#fdfdfd"></div><div class="r" style="left:0.00px;top:447.50px;width:3218.00px;height:1.00px;background:#eceef2"></div><div class="r" style="left:245.00px;top:447.50px;width:187.50px;height:1.00px;background:#d0d4de"></div><div class="r" style="left:245.00px;top:446.50px;width:187.50px;height:1.00px;background:#fff"></div><div class="r" style="left:1287.50px;top:447.50px;width:135.00px;height:1.00px;background:#d0d4de"></div><div class="r" style="left:1287.50px;top:446.50px;width:135.00px;height:1.00px;background:#fff"></div><div class="r" style="left:1887.50px;top:447.50px;width:375.00px;height:1.00px;background:#d0d4de"></div><div class="r" style="left:1887.50px;top:446.50px;width:375.00px;height:1.00px;background:#fff"></div><div class="r" style="left:2262.50px;top:447.50px;width:90.00px;height:1.00px;background:#d0d4de"></div><div class="r" style="left:2262.50px;top:446.50px;width:90.00px;height:1.00px;background:#fff"></div><div class="r" style="left:2352.50px;top:447.50px;width:90.00px;height:1.00px;background:#d0d4de"></div><div class="r" style="left:2352.50px;top:446.50px;width:90.00px;height:1.00px;background:#fff"></div><div class="r" style="left:2442.50px;top:447.50px;width:180.00px;height:1.00px;background:#d0d4de"></div><div class="r" style="left:2442.50px;top:446.50px;width:180.00px;height:1.00px;background:#fff"></div><div class="r" style="left:2622.50px;top:447.50px;width:300.00px;height:1.00px;background:#d0d4de"></div><div class="r" style="left:2622.50px;top:446.50px;width:300.00px;height:1.00px;background:#fff"></div><div class="r" style="left:2922.50px;top:447.50px;width:90.00px;height:1.00px;background:#d0d4de"></div><div class="r" style="left:2922.50px;top:446.50px;width:90.00px;height:1.00px;background:#fff"></div><div class="r" style="left:139.25px;top:398.50px;width:1.50px;height:50.00px;background:#f1f2f5"></div><div class="r" style="left:244.25px;top:398.50px;width:1.50px;height:50.00px;background:#f1f2f5"></div><div class="r" style="left:431.75px;top:398.50px;width:1.50px;height:50.00px;background:#f1f2f5"></div><div class="r" style="left:656.75px;top:398.50px;width:1.50px;height:50.00px;background:#f1f2f5"></div><div class="r" style="left:874.25px;top:398.50px;width:1.50px;height:50.00px;background:#f1f2f5"></div><div class="r" style="left:1091.75px;top:398.50px;width:1.50px;height:50.00px;background:#f1f2f5"></div><div class="r" style="left:1286.75px;top:398.50px;width:1.50px;height:50.00px;background:#f1f2f5"></div><div class="r" style="left:1421.75px;top:398.50px;width:1.50px;height:50.00px;background:#f1f2f5"></div><div class="r" style="left:1586.75px;top:398.50px;width:1.50px;height:50.00px;background:#f1f2f5"></div><div class="r" style="left:1886.75px;top:398.50px;width:1.50px;height:50.00px;background:#f1f2f5"></div><div class="r" style="left:2261.75px;top:398.50px;width:1.50px;height:50.00px;background:#f1f2f5"></div><div class="r" style="left:2351.75px;top:398.50px;width:1.50px;height:50.00px;background:#f1f2f5"></div><div class="r" style="left:2441.75px;top:398.50px;width:1.50px;height:50.00px;background:#f1f2f5"></div><div class="r" style="left:2621.75px;top:398.50px;width:1.50px;height:50.00px;background:#f1f2f5"></div><div class="r" style="left:2921.75px;top:398.50px;width:1.50px;height:50.00px;background:#f1f2f5"></div><div class="r" style="left:3011.75px;top:398.50px;width:1.50px;height:50.00px;background:#f1f2f5"></div><div class="r" style="left:3101.75px;top:398.50px;width:1.50px;height:50.00px;background:#f1f2f5"></div><div class="t" style="top:415.25px;font-size:18.7px;color:#1f2937;letter-spacing:0.6px;left:-7.50px;">19-10-2024</div><div class="t" style="top:415.25px;font-size:18.7px;color:#1b6dd4;letter-spacing:0.5px;left:158.00px;">194150</div><div class="t" style="top:414.55px;font-size:18.7px;color:#1f2937;letter-spacing:0.5px;left:259.70px;">24071308</div><div class="t" style="top:415.25px;font-size:18.7px;color:#1f2937;letter-spacing:0.5px;left:450.00px;">24071308</div><div class="t" style="top:415.25px;font-size:18.7px;color:#1f2937;letter-spacing:0.5px;left:-344.50px;width:1200px;text-align:right;-webkit-text-stroke:0.3px #1f2937;">€ 517,77</div><div class="t" style="top:415.25px;font-size:18.7px;color:#1f2937;letter-spacing:0.1px;left:-127.00px;width:1200px;text-align:right;">€ 517,77</div><div class="t" style="top:415.25px;font-size:18.7px;color:#1f2937;letter-spacing:0.6px;left:1110.00px;">19-10-2024</div><div class="t" style="top:414.55px;font-size:18.7px;color:#1f2937;letter-spacing:0.9px;left:1301.70px;">30/7/2</div><div class="t" style="top:415.25px;font-size:18.7px;color:#1f2937;letter-spacing:0.6px;left:1440.00px;">18-11-2024</div><div class="t" style="top:415.25px;font-size:18.7px;color:#1f2937;letter-spacing:0.1px;left:1901.60px;">1520084 Greif-Apotheke Riebeckstr. 9...</div><div class="r" style="left:2294.70px;top:410.75px;width:24.00px;height:24.00px;background:#f3f4f7;border:1.5px solid #cdd3de;border-radius:5px"></div><div class="r" style="left:2384.70px;top:410.75px;width:24.00px;height:24.00px;background:#f3f4f7;border:1.5px solid #cdd3de;border-radius:5px"></div><div class="t" style="top:415.25px;font-size:18.7px;color:#1f2937;letter-spacing:0.2px;left:2457.40px;">2. Mahnung - Ie...</div><div class="r" style="left:2954.70px;top:410.75px;width:24.00px;height:24.00px;background:#f3f4f7;border:1.5px solid #cdd3de;border-radius:5px"></div><div class="t" style="top:415.25px;font-size:18.7px;color:#1f2937;left:3029.70px;">1</div><div class="t" style="top:415.25px;font-size:18.7px;color:#1f2937;letter-spacing:0.2px;left:3119.90px;">Legacy-Booking</div><div class="r" style="left:245.00px;top:448.50px;width:187.50px;height:48.00px;background:#fdfdfd"></div><div class="r" style="left:1287.50px;top:448.50px;width:135.00px;height:48.00px;background:#fdfdfd"></div><div class="r" style="left:1887.50px;top:448.50px;width:375.00px;height:48.00px;background:#fdfdfd"></div><div class="r" style="left:2262.50px;top:448.50px;width:90.00px;height:48.00px;background:#fdfdfd"></div><div class="r" style="left:2352.50px;top:448.50px;width:90.00px;height:48.00px;background:#fdfdfd"></div><div class="r" style="left:2442.50px;top:448.50px;width:180.00px;height:48.00px;background:#fdfdfd"></div><div class="r" style="left:2622.50px;top:448.50px;width:300.00px;height:48.00px;background:#fdfdfd"></div><div class="r" style="left:2922.50px;top:448.50px;width:90.00px;height:48.00px;background:#fdfdfd"></div><div class="r" style="left:0.00px;top:496.50px;width:3218.00px;height:1.00px;background:#eceef2"></div><div class="r" style="left:245.00px;top:496.50px;width:187.50px;height:1.00px;background:#d0d4de"></div><div class="r" style="left:245.00px;top:495.50px;width:187.50px;height:1.00px;background:#fff"></div><div class="r" style="left:1287.50px;top:496.50px;width:135.00px;height:1.00px;background:#d0d4de"></div><div class="r" style="left:1287.50px;top:495.50px;width:135.00px;height:1.00px;background:#fff"></div><div class="r" style="left:1887.50px;top:496.50px;width:375.00px;height:1.00px;background:#d0d4de"></div><div class="r" style="left:1887.50px;top:495.50px;width:375.00px;height:1.00px;background:#fff"></div><div class="r" style="left:2262.50px;top:496.50px;width:90.00px;height:1.00px;background:#d0d4de"></div><div class="r" style="left:2262.50px;top:495.50px;width:90.00px;height:1.00px;background:#fff"></div><div class="r" style="left:2352.50px;top:496.50px;width:90.00px;height:1.00px;background:#d0d4de"></div><div class="r" style="left:2352.50px;top:495.50px;width:90.00px;height:1.00px;background:#fff"></div><div class="r" style="left:2442.50px;top:496.50px;width:180.00px;height:1.00px;background:#d0d4de"></div><div class="r" style="left:2442.50px;top:495.50px;width:180.00px;height:1.00px;background:#fff"></div><div class="r" style="left:2622.50px;top:496.50px;width:300.00px;height:1.00px;background:#d0d4de"></div><div class="r" style="left:2622.50px;top:495.50px;width:300.00px;height:1.00px;background:#fff"></div><div class="r" style="left:2922.50px;top:496.50px;width:90.00px;height:1.00px;background:#d0d4de"></div><div class="r" style="left:2922.50px;top:495.50px;width:90.00px;height:1.00px;background:#fff"></div><div class="r" style="left:139.25px;top:448.50px;width:1.50px;height:49.00px;background:#f1f2f5"></div><div class="r" style="left:244.25px;top:448.50px;width:1.50px;height:49.00px;background:#f1f2f5"></div><div class="r" style="left:431.75px;top:448.50px;width:1.50px;height:49.00px;background:#f1f2f5"></div><div class="r" style="left:656.75px;top:448.50px;width:1.50px;height:49.00px;background:#f1f2f5"></div><div class="r" style="left:874.25px;top:448.50px;width:1.50px;height:49.00px;background:#f1f2f5"></div><div class="r" style="left:1091.75px;top:448.50px;width:1.50px;height:49.00px;background:#f1f2f5"></div><div class="r" style="left:1286.75px;top:448.50px;width:1.50px;height:49.00px;background:#f1f2f5"></div><div class="r" style="left:1421.75px;top:448.50px;width:1.50px;height:49.00px;background:#f1f2f5"></div><div class="r" style="left:1586.75px;top:448.50px;width:1.50px;height:49.00px;background:#f1f2f5"></div><div class="r" style="left:1886.75px;top:448.50px;width:1.50px;height:49.00px;background:#f1f2f5"></div><div class="r" style="left:2261.75px;top:448.50px;width:1.50px;height:49.00px;background:#f1f2f5"></div><div class="r" style="left:2351.75px;top:448.50px;width:1.50px;height:49.00px;background:#f1f2f5"></div><div class="r" style="left:2441.75px;top:448.50px;width:1.50px;height:49.00px;background:#f1f2f5"></div><div class="r" style="left:2621.75px;top:448.50px;width:1.50px;height:49.00px;background:#f1f2f5"></div><div class="r" style="left:2921.75px;top:448.50px;width:1.50px;height:49.00px;background:#f1f2f5"></div><div class="r" style="left:3011.75px;top:448.50px;width:1.50px;height:49.00px;background:#f1f2f5"></div><div class="r" style="left:3101.75px;top:448.50px;width:1.50px;height:49.00px;background:#f1f2f5"></div><div class="t" style="top:464.75px;font-size:18.7px;color:#1f2937;letter-spacing:0.6px;left:-7.50px;">10-10-2024</div><div class="t" style="top:464.75px;font-size:18.7px;color:#1b6dd4;letter-spacing:0.5px;left:158.00px;">187990</div><div class="t" style="top:464.05px;font-size:18.7px;color:#1f2937;letter-spacing:0.5px;left:259.70px;">24068703</div><div class="t" style="top:464.75px;font-size:18.7px;color:#1f2937;letter-spacing:0.5px;left:450.00px;">24068703</div><div class="t" style="top:464.75px;font-size:18.7px;color:#1f2937;letter-spacing:0.5px;left:-344.50px;width:1200px;text-align:right;-webkit-text-stroke:0.3px #1f2937;">€ 38,39</div><div class="t" style="top:464.75px;font-size:18.7px;color:#1f2937;letter-spacing:0.1px;left:-127.00px;width:1200px;text-align:right;">€ 38,39</div><div class="t" style="top:464.75px;font-size:18.7px;color:#1f2937;letter-spacing:0.6px;left:1110.00px;">10-10-2024</div><div class="t" style="top:464.05px;font-size:18.7px;color:#1f2937;letter-spacing:0.9px;left:1301.70px;">30/7/2</div><div class="t" style="top:464.75px;font-size:18.7px;color:#1f2937;letter-spacing:0.6px;left:1440.00px;">09-11-2024</div><div class="t" style="top:464.75px;font-size:18.7px;color:#1f2937;letter-spacing:0.1px;left:1901.60px;">1057255 Wormser Reformhaus Am Rö...</div><div class="r" style="left:2294.70px;top:460.25px;width:24.00px;height:24.00px;background:#f3f4f7;border:1.5px solid #cdd3de;border-radius:5px"></div><div class="r" style="left:2384.70px;top:460.25px;width:24.00px;height:24.00px;background:#f3f4f7;border:1.5px solid #cdd3de;border-radius:5px"></div><div class="t" style="top:464.75px;font-size:18.7px;color:#1f2937;letter-spacing:0.2px;left:2457.40px;">2. Mahnung - Ie...</div><div class="r" style="left:2954.70px;top:460.25px;width:24.00px;height:24.00px;background:#f3f4f7;border:1.5px solid #cdd3de;border-radius:5px"></div><div class="t" style="top:464.75px;font-size:18.7px;color:#1f2937;left:3029.70px;">1</div><div class="t" style="top:464.75px;font-size:18.7px;color:#1f2937;letter-spacing:0.2px;left:3119.90px;">Legacy-Booking</div><div class="r" style="left:245.00px;top:497.50px;width:187.50px;height:49.00px;background:#fdfdfd"></div><div class="r" style="left:1287.50px;top:497.50px;width:135.00px;height:49.00px;background:#fdfdfd"></div><div class="r" style="left:1887.50px;top:497.50px;width:375.00px;height:49.00px;background:#fdfdfd"></div><div class="r" style="left:2262.50px;top:497.50px;width:90.00px;height:49.00px;background:#fdfdfd"></div><div class="r" style="left:2352.50px;top:497.50px;width:90.00px;height:49.00px;background:#fdfdfd"></div><div class="r" style="left:2442.50px;top:497.50px;width:180.00px;height:49.00px;background:#fdfdfd"></div><div class="r" style="left:2622.50px;top:497.50px;width:300.00px;height:49.00px;background:#fdfdfd"></div><div class="r" style="left:2922.50px;top:497.50px;width:90.00px;height:49.00px;background:#fdfdfd"></div><div class="r" style="left:0.00px;top:546.50px;width:3218.00px;height:1.00px;background:#eceef2"></div><div class="r" style="left:245.00px;top:546.50px;width:187.50px;height:1.00px;background:#d0d4de"></div><div class="r" style="left:245.00px;top:545.50px;width:187.50px;height:1.00px;background:#fff"></div><div class="r" style="left:1287.50px;top:546.50px;width:135.00px;height:1.00px;background:#d0d4de"></div><div class="r" style="left:1287.50px;top:545.50px;width:135.00px;height:1.00px;background:#fff"></div><div class="r" style="left:1887.50px;top:546.50px;width:375.00px;height:1.00px;background:#d0d4de"></div><div class="r" style="left:1887.50px;top:545.50px;width:375.00px;height:1.00px;background:#fff"></div><div class="r" style="left:2262.50px;top:546.50px;width:90.00px;height:1.00px;background:#d0d4de"></div><div class="r" style="left:2262.50px;top:545.50px;width:90.00px;height:1.00px;background:#fff"></div><div class="r" style="left:2352.50px;top:546.50px;width:90.00px;height:1.00px;background:#d0d4de"></div><div class="r" style="left:2352.50px;top:545.50px;width:90.00px;height:1.00px;background:#fff"></div><div class="r" style="left:2442.50px;top:546.50px;width:180.00px;height:1.00px;background:#d0d4de"></div><div class="r" style="left:2442.50px;top:545.50px;width:180.00px;height:1.00px;background:#fff"></div><div class="r" style="left:2622.50px;top:546.50px;width:300.00px;height:1.00px;background:#d0d4de"></div><div class="r" style="left:2622.50px;top:545.50px;width:300.00px;height:1.00px;background:#fff"></div><div class="r" style="left:2922.50px;top:546.50px;width:90.00px;height:1.00px;background:#d0d4de"></div><div class="r" style="left:2922.50px;top:545.50px;width:90.00px;height:1.00px;background:#fff"></div><div class="r" style="left:139.25px;top:497.50px;width:1.50px;height:50.00px;background:#f1f2f5"></div><div class="r" style="left:244.25px;top:497.50px;width:1.50px;height:50.00px;background:#f1f2f5"></div><div class="r" style="left:431.75px;top:497.50px;width:1.50px;height:50.00px;background:#f1f2f5"></div><div class="r" style="left:656.75px;top:497.50px;width:1.50px;height:50.00px;background:#f1f2f5"></div><div class="r" style="left:874.25px;top:497.50px;width:1.50px;height:50.00px;background:#f1f2f5"></div><div class="r" style="left:1091.75px;top:497.50px;width:1.50px;height:50.00px;background:#f1f2f5"></div><div class="r" style="left:1286.75px;top:497.50px;width:1.50px;height:50.00px;background:#f1f2f5"></div><div class="r" style="left:1421.75px;top:497.50px;width:1.50px;height:50.00px;background:#f1f2f5"></div><div class="r" style="left:1586.75px;top:497.50px;width:1.50px;height:50.00px;background:#f1f2f5"></div><div class="r" style="left:1886.75px;top:497.50px;width:1.50px;height:50.00px;background:#f1f2f5"></div><div class="r" style="left:2261.75px;top:497.50px;width:1.50px;height:50.00px;background:#f1f2f5"></div><div class="r" style="left:2351.75px;top:497.50px;width:1.50px;height:50.00px;background:#f1f2f5"></div><div class="r" style="left:2441.75px;top:497.50px;width:1.50px;height:50.00px;background:#f1f2f5"></div><div class="r" style="left:2621.75px;top:497.50px;width:1.50px;height:50.00px;background:#f1f2f5"></div><div class="r" style="left:2921.75px;top:497.50px;width:1.50px;height:50.00px;background:#f1f2f5"></div><div class="r" style="left:3011.75px;top:497.50px;width:1.50px;height:50.00px;background:#f1f2f5"></div><div class="r" style="left:3101.75px;top:497.50px;width:1.50px;height:50.00px;background:#f1f2f5"></div><div class="t" style="top:514.25px;font-size:18.7px;color:#1f2937;letter-spacing:0.6px;left:-7.50px;">18-09-2024</div><div class="t" style="top:514.25px;font-size:18.7px;color:#1b6dd4;letter-spacing:0.5px;left:158.00px;">174299</div><div class="t" style="top:513.55px;font-size:18.7px;color:#1f2937;letter-spacing:0.5px;left:259.70px;">24063452</div><div class="t" style="top:514.25px;font-size:18.7px;color:#1f2937;letter-spacing:0.5px;left:450.00px;">24063452</div><div class="t" style="top:514.25px;font-size:18.7px;color:#1f2937;letter-spacing:0.5px;left:-344.50px;width:1200px;text-align:right;-webkit-text-stroke:0.3px #1f2937;">€ 13 425,42</div><div class="t" style="top:514.25px;font-size:18.7px;color:#1f2937;letter-spacing:0.1px;left:-127.00px;width:1200px;text-align:right;">€ 13 425,42</div><div class="t" style="top:514.25px;font-size:18.7px;color:#1f2937;letter-spacing:0.6px;left:1110.00px;">18-09-2024</div><div class="t" style="top:513.55px;font-size:18.7px;color:#1f2937;letter-spacing:0.9px;left:1301.70px;">60/0/0</div><div class="t" style="top:514.25px;font-size:18.7px;color:#1f2937;letter-spacing:0.6px;left:1440.00px;">17-11-2024</div><div class="t" style="top:514.25px;font-size:18.7px;color:#1f2937;letter-spacing:0.1px;left:1604.90px;">80060 Erlöse Ausland HR</div><div class="t" style="top:514.25px;font-size:18.7px;color:#1f2937;letter-spacing:0.1px;left:1901.60px;">1170173 Matrix Star Marketin 27 Green...</div><div class="r" style="left:2294.70px;top:509.75px;width:24.00px;height:24.00px;background:#f3f4f7;border:1.5px solid #cdd3de;border-radius:5px"></div><div class="r" style="left:2384.70px;top:509.75px;width:24.00px;height:24.00px;background:#f3f4f7;border:1.5px solid #cdd3de;border-radius:5px"></div><div class="t" style="top:514.25px;font-size:18.7px;color:#1f2937;letter-spacing:0.2px;left:2457.40px;">2. Mahnung - Ie...</div><div class="r" style="left:2954.70px;top:509.75px;width:24.00px;height:24.00px;background:#f3f4f7;border:1.5px solid #cdd3de;border-radius:5px"></div><div class="t" style="top:514.25px;font-size:18.7px;color:#1f2937;left:3029.70px;">1</div><div class="t" style="top:514.25px;font-size:18.7px;color:#1f2937;letter-spacing:0.2px;left:3119.90px;">Legacy-Booking</div><div class="r" style="left:245.00px;top:547.50px;width:187.50px;height:48.00px;background:#fdfdfd"></div><div class="r" style="left:1287.50px;top:547.50px;width:135.00px;height:48.00px;background:#fdfdfd"></div><div class="r" style="left:1887.50px;top:547.50px;width:375.00px;height:48.00px;background:#fdfdfd"></div><div class="r" style="left:2262.50px;top:547.50px;width:90.00px;height:48.00px;background:#fdfdfd"></div><div class="r" style="left:2352.50px;top:547.50px;width:90.00px;height:48.00px;background:#fdfdfd"></div><div class="r" style="left:2442.50px;top:547.50px;width:180.00px;height:48.00px;background:#fdfdfd"></div><div class="r" style="left:2622.50px;top:547.50px;width:300.00px;height:48.00px;background:#fdfdfd"></div><div class="r" style="left:2922.50px;top:547.50px;width:90.00px;height:48.00px;background:#fdfdfd"></div><div class="r" style="left:0.00px;top:595.50px;width:3218.00px;height:1.00px;background:#eceef2"></div><div class="r" style="left:245.00px;top:595.50px;width:187.50px;height:1.00px;background:#d0d4de"></div><div class="r" style="left:245.00px;top:594.50px;width:187.50px;height:1.00px;background:#fff"></div><div class="r" style="left:1287.50px;top:595.50px;width:135.00px;height:1.00px;background:#d0d4de"></div><div class="r" style="left:1287.50px;top:594.50px;width:135.00px;height:1.00px;background:#fff"></div><div class="r" style="left:1887.50px;top:595.50px;width:375.00px;height:1.00px;background:#d0d4de"></div><div class="r" style="left:1887.50px;top:594.50px;width:375.00px;height:1.00px;background:#fff"></div><div class="r" style="left:2262.50px;top:595.50px;width:90.00px;height:1.00px;background:#d0d4de"></div><div class="r" style="left:2262.50px;top:594.50px;width:90.00px;height:1.00px;background:#fff"></div><div class="r" style="left:2352.50px;top:595.50px;width:90.00px;height:1.00px;background:#d0d4de"></div><div class="r" style="left:2352.50px;top:594.50px;width:90.00px;height:1.00px;background:#fff"></div><div class="r" style="left:2442.50px;top:595.50px;width:180.00px;height:1.00px;background:#d0d4de"></div><div class="r" style="left:2442.50px;top:594.50px;width:180.00px;height:1.00px;background:#fff"></div><div class="r" style="left:2622.50px;top:595.50px;width:300.00px;height:1.00px;background:#d0d4de"></div><div class="r" style="left:2622.50px;top:594.50px;width:300.00px;height:1.00px;background:#fff"></div><div class="r" style="left:2922.50px;top:595.50px;width:90.00px;height:1.00px;background:#d0d4de"></div><div class="r" style="left:2922.50px;top:594.50px;width:90.00px;height:1.00px;background:#fff"></div><div class="r" style="left:139.25px;top:547.50px;width:1.50px;height:49.00px;background:#f1f2f5"></div><div class="r" style="left:244.25px;top:547.50px;width:1.50px;height:49.00px;background:#f1f2f5"></div><div class="r" style="left:431.75px;top:547.50px;width:1.50px;height:49.00px;background:#f1f2f5"></div><div class="r" style="left:656.75px;top:547.50px;width:1.50px;height:49.00px;background:#f1f2f5"></div><div class="r" style="left:874.25px;top:547.50px;width:1.50px;height:49.00px;background:#f1f2f5"></div><div class="r" style="left:1091.75px;top:547.50px;width:1.50px;height:49.00px;background:#f1f2f5"></div><div class="r" style="left:1286.75px;top:547.50px;width:1.50px;height:49.00px;background:#f1f2f5"></div><div class="r" style="left:1421.75px;top:547.50px;width:1.50px;height:49.00px;background:#f1f2f5"></div><div class="r" style="left:1586.75px;top:547.50px;width:1.50px;height:49.00px;background:#f1f2f5"></div><div class="r" style="left:1886.75px;top:547.50px;width:1.50px;height:49.00px;background:#f1f2f5"></div><div class="r" style="left:2261.75px;top:547.50px;width:1.50px;height:49.00px;background:#f1f2f5"></div><div class="r" style="left:2351.75px;top:547.50px;width:1.50px;height:49.00px;background:#f1f2f5"></div><div class="r" style="left:2441.75px;top:547.50px;width:1.50px;height:49.00px;background:#f1f2f5"></div><div class="r" style="left:2621.75px;top:547.50px;width:1.50px;height:49.00px;background:#f1f2f5"></div><div class="r" style="left:2921.75px;top:547.50px;width:1.50px;height:49.00px;background:#f1f2f5"></div><div class="r" style="left:3011.75px;top:547.50px;width:1.50px;height:49.00px;background:#f1f2f5"></div><div class="r" style="left:3101.75px;top:547.50px;width:1.50px;height:49.00px;background:#f1f2f5"></div><div class="t" style="top:563.75px;font-size:18.7px;color:#1f2937;letter-spacing:0.6px;left:-7.50px;">13-06-2024</div><div class="t" style="top:563.75px;font-size:18.7px;color:#1b6dd4;letter-spacing:0.5px;left:158.00px;">117543</div><div class="t" style="top:563.05px;font-size:18.7px;color:#1f2937;letter-spacing:0.5px;left:259.70px;">24041746</div><div class="t" style="top:563.75px;font-size:18.7px;color:#1f2937;letter-spacing:0.5px;left:450.00px;">24041746</div><div class="t" style="top:563.75px;font-size:18.7px;color:#1f2937;letter-spacing:0.5px;left:-344.50px;width:1200px;text-align:right;-webkit-text-stroke:0.3px #1f2937;">€ 11 408,10</div><div class="t" style="top:563.75px;font-size:18.7px;color:#1f2937;letter-spacing:0.1px;left:-127.00px;width:1200px;text-align:right;">€ 11 408,10</div><div class="t" style="top:563.75px;font-size:18.7px;color:#1f2937;letter-spacing:0.6px;left:1110.00px;">13-06-2024</div><div class="t" style="top:563.05px;font-size:18.7px;color:#1f2937;letter-spacing:0.9px;left:1301.70px;">60/0/0</div><div class="t" style="top:563.75px;font-size:18.7px;color:#1f2937;letter-spacing:0.6px;left:1440.00px;">12-08-2024</div><div class="t" style="top:563.75px;font-size:18.7px;color:#1f2937;letter-spacing:0.1px;left:1604.90px;">80060 Erlöse Ausland HR</div><div class="t" style="top:563.75px;font-size:18.7px;color:#1f2937;letter-spacing:0.1px;left:1901.60px;">1170173 Matrix Star Marketin 27 Green...</div><div class="r" style="left:2294.70px;top:559.25px;width:24.00px;height:24.00px;background:#f3f4f7;border:1.5px solid #cdd3de;border-radius:5px"></div><div class="r" style="left:2384.70px;top:559.25px;width:24.00px;height:24.00px;background:#f3f4f7;border:1.5px solid #cdd3de;border-radius:5px"></div><div class="t" style="top:563.75px;font-size:18.7px;color:#1f2937;letter-spacing:0.2px;left:2457.40px;">2. Mahnung - Ie...</div><div class="r" style="left:2954.70px;top:559.25px;width:24.00px;height:24.00px;background:#f3f4f7;border:1.5px solid #cdd3de;border-radius:5px"></div><div class="t" style="top:563.75px;font-size:18.7px;color:#1f2937;left:3029.70px;">1</div><div class="t" style="top:563.75px;font-size:18.7px;color:#1f2937;letter-spacing:0.2px;left:3119.90px;">Legacy-Booking</div><div class="r" style="left:245.00px;top:596.50px;width:187.50px;height:49.00px;background:#fdfdfd"></div><div class="r" style="left:1287.50px;top:596.50px;width:135.00px;height:49.00px;background:#fdfdfd"></div><div class="r" style="left:1887.50px;top:596.50px;width:375.00px;height:49.00px;background:#fdfdfd"></div><div class="r" style="left:2262.50px;top:596.50px;width:90.00px;height:49.00px;background:#fdfdfd"></div><div class="r" style="left:2352.50px;top:596.50px;width:90.00px;height:49.00px;background:#fdfdfd"></div><div class="r" style="left:2442.50px;top:596.50px;width:180.00px;height:49.00px;background:#fdfdfd"></div><div class="r" style="left:2622.50px;top:596.50px;width:300.00px;height:49.00px;background:#fdfdfd"></div><div class="r" style="left:2922.50px;top:596.50px;width:90.00px;height:49.00px;background:#fdfdfd"></div><div class="r" style="left:0.00px;top:645.50px;width:3218.00px;height:1.00px;background:#eceef2"></div><div class="r" style="left:245.00px;top:645.50px;width:187.50px;height:1.00px;background:#d0d4de"></div><div class="r" style="left:245.00px;top:644.50px;width:187.50px;height:1.00px;background:#fff"></div><div class="r" style="left:1287.50px;top:645.50px;width:135.00px;height:1.00px;background:#d0d4de"></div><div class="r" style="left:1287.50px;top:644.50px;width:135.00px;height:1.00px;background:#fff"></div><div class="r" style="left:1887.50px;top:645.50px;width:375.00px;height:1.00px;background:#d0d4de"></div><div class="r" style="left:1887.50px;top:644.50px;width:375.00px;height:1.00px;background:#fff"></div><div class="r" style="left:2262.50px;top:645.50px;width:90.00px;height:1.00px;background:#d0d4de"></div><div class="r" style="left:2262.50px;top:644.50px;width:90.00px;height:1.00px;background:#fff"></div><div class="r" style="left:2352.50px;top:645.50px;width:90.00px;height:1.00px;background:#d0d4de"></div><div class="r" style="left:2352.50px;top:644.50px;width:90.00px;height:1.00px;background:#fff"></div><div class="r" style="left:2442.50px;top:645.50px;width:180.00px;height:1.00px;background:#d0d4de"></div><div class="r" style="left:2442.50px;top:644.50px;width:180.00px;height:1.00px;background:#fff"></div><div class="r" style="left:2622.50px;top:645.50px;width:300.00px;height:1.00px;background:#d0d4de"></div><div class="r" style="left:2622.50px;top:644.50px;width:300.00px;height:1.00px;background:#fff"></div><div class="r" style="left:2922.50px;top:645.50px;width:90.00px;height:1.00px;background:#d0d4de"></div><div class="r" style="left:2922.50px;top:644.50px;width:90.00px;height:1.00px;background:#fff"></div><div class="r" style="left:139.25px;top:596.50px;width:1.50px;height:50.00px;background:#f1f2f5"></div><div class="r" style="left:244.25px;top:596.50px;width:1.50px;height:50.00px;background:#f1f2f5"></div><div class="r" style="left:431.75px;top:596.50px;width:1.50px;height:50.00px;background:#f1f2f5"></div><div class="r" style="left:656.75px;top:596.50px;width:1.50px;height:50.00px;background:#f1f2f5"></div><div class="r" style="left:874.25px;top:596.50px;width:1.50px;height:50.00px;background:#f1f2f5"></div><div class="r" style="left:1091.75px;top:596.50px;width:1.50px;height:50.00px;background:#f1f2f5"></div><div class="r" style="left:1286.75px;top:596.50px;width:1.50px;height:50.00px;background:#f1f2f5"></div><div class="r" style="left:1421.75px;top:596.50px;width:1.50px;height:50.00px;background:#f1f2f5"></div><div class="r" style="left:1586.75px;top:596.50px;width:1.50px;height:50.00px;background:#f1f2f5"></div><div class="r" style="left:1886.75px;top:596.50px;width:1.50px;height:50.00px;background:#f1f2f5"></div><div class="r" style="left:2261.75px;top:596.50px;width:1.50px;height:50.00px;background:#f1f2f5"></div><div class="r" style="left:2351.75px;top:596.50px;width:1.50px;height:50.00px;background:#f1f2f5"></div><div class="r" style="left:2441.75px;top:596.50px;width:1.50px;height:50.00px;background:#f1f2f5"></div><div class="r" style="left:2621.75px;top:596.50px;width:1.50px;height:50.00px;background:#f1f2f5"></div><div class="r" style="left:2921.75px;top:596.50px;width:1.50px;height:50.00px;background:#f1f2f5"></div><div class="r" style="left:3011.75px;top:596.50px;width:1.50px;height:50.00px;background:#f1f2f5"></div><div class="r" style="left:3101.75px;top:596.50px;width:1.50px;height:50.00px;background:#f1f2f5"></div><div class="t" style="top:613.25px;font-size:18.7px;color:#1f2937;letter-spacing:0.6px;left:-7.50px;">04-12-2024</div><div class="t" style="top:613.25px;font-size:18.7px;color:#1b6dd4;letter-spacing:0.5px;left:158.00px;">229346</div><div class="t" style="top:612.55px;font-size:18.7px;color:#1f2937;letter-spacing:0.5px;left:259.70px;">24076194</div><div class="t" style="top:613.25px;font-size:18.7px;color:#1f2937;letter-spacing:0.5px;left:450.00px;">24076194</div><div class="t" style="top:613.25px;font-size:18.7px;color:#f5a3a3;letter-spacing:0.5px;left:-344.50px;width:1200px;text-align:right;">€ -500,00</div><div class="t" style="top:613.25px;font-size:18.7px;color:#f5a3a3;letter-spacing:0.1px;left:-127.00px;width:1200px;text-align:right;">€ -500,00</div><div class="t" style="top:613.25px;font-size:18.7px;color:#1f2937;letter-spacing:0.6px;left:1110.00px;">03-12-2024</div><div class="t" style="top:612.55px;font-size:18.7px;color:#1f2937;letter-spacing:0.9px;left:1301.70px;">0/0/0</div><div class="t" style="top:613.25px;font-size:18.7px;color:#1f2937;letter-spacing:0.6px;left:1440.00px;">03-12-2024</div><div class="t" style="top:613.25px;font-size:18.7px;color:#1f2937;letter-spacing:0.1px;left:1604.90px;">11000 Sparkasse Neuwied (H...</div><div class="t" style="top:613.25px;font-size:18.7px;color:#1f2937;letter-spacing:0.1px;left:1901.60px;">Ratenzahlung</div><div class="r" style="left:2294.70px;top:608.75px;width:24.00px;height:24.00px;background:#f3f4f7;border:1.5px solid #cdd3de;border-radius:5px"></div><div class="r" style="left:2384.70px;top:608.75px;width:24.00px;height:24.00px;background:#f3f4f7;border:1.5px solid #cdd3de;border-radius:5px"></div><div class="t" style="top:613.25px;font-size:18.7px;color:#1f2937;letter-spacing:0.2px;left:2457.40px;">1. Mahnung</div><div class="r" style="left:2954.70px;top:608.75px;width:24.00px;height:24.00px;background:#f3f4f7;border:1.5px solid #cdd3de;border-radius:5px"></div><div class="t" style="top:613.25px;font-size:18.7px;color:#1f2937;left:3029.70px;">1</div><div class="t" style="top:613.25px;font-size:18.7px;color:#1f2937;letter-spacing:0.2px;left:3119.90px;">Legacy-Booking</div><div class="r" style="left:245.00px;top:646.50px;width:187.50px;height:48.00px;background:#fdfdfd"></div><div class="r" style="left:1287.50px;top:646.50px;width:135.00px;height:48.00px;background:#fdfdfd"></div><div class="r" style="left:1887.50px;top:646.50px;width:375.00px;height:48.00px;background:#fdfdfd"></div><div class="r" style="left:2262.50px;top:646.50px;width:90.00px;height:48.00px;background:#fdfdfd"></div><div class="r" style="left:2352.50px;top:646.50px;width:90.00px;height:48.00px;background:#fdfdfd"></div><div class="r" style="left:2442.50px;top:646.50px;width:180.00px;height:48.00px;background:#fdfdfd"></div><div class="r" style="left:2622.50px;top:646.50px;width:300.00px;height:48.00px;background:#fdfdfd"></div><div class="r" style="left:2922.50px;top:646.50px;width:90.00px;height:48.00px;background:#fdfdfd"></div><div class="r" style="left:0.00px;top:694.50px;width:3218.00px;height:1.00px;background:#eceef2"></div><div class="r" style="left:245.00px;top:694.50px;width:187.50px;height:1.00px;background:#d0d4de"></div><div class="r" style="left:245.00px;top:693.50px;width:187.50px;height:1.00px;background:#fff"></div><div class="r" style="left:1287.50px;top:694.50px;width:135.00px;height:1.00px;background:#d0d4de"></div><div class="r" style="left:1287.50px;top:693.50px;width:135.00px;height:1.00px;background:#fff"></div><div class="r" style="left:1887.50px;top:694.50px;width:375.00px;height:1.00px;background:#d0d4de"></div><div class="r" style="left:1887.50px;top:693.50px;width:375.00px;height:1.00px;background:#fff"></div><div class="r" style="left:2262.50px;top:694.50px;width:90.00px;height:1.00px;background:#d0d4de"></div><div class="r" style="left:2262.50px;top:693.50px;width:90.00px;height:1.00px;background:#fff"></div><div class="r" style="left:2352.50px;top:694.50px;width:90.00px;height:1.00px;background:#d0d4de"></div><div class="r" style="left:2352.50px;top:693.50px;width:90.00px;height:1.00px;background:#fff"></div><div class="r" style="left:2442.50px;top:694.50px;width:180.00px;height:1.00px;background:#d0d4de"></div><div class="r" style="left:2442.50px;top:693.50px;width:180.00px;height:1.00px;background:#fff"></div><div class="r" style="left:2622.50px;top:694.50px;width:300.00px;height:1.00px;background:#d0d4de"></div><div class="r" style="left:2622.50px;top:693.50px;width:300.00px;height:1.00px;background:#fff"></div><div class="r" style="left:2922.50px;top:694.50px;width:90.00px;height:1.00px;background:#d0d4de"></div><div class="r" style="left:2922.50px;top:693.50px;width:90.00px;height:1.00px;background:#fff"></div><div class="r" style="left:139.25px;top:646.50px;width:1.50px;height:49.00px;background:#f1f2f5"></div><div class="r" style="left:244.25px;top:646.50px;width:1.50px;height:49.00px;background:#f1f2f5"></div><div class="r" style="left:431.75px;top:646.50px;width:1.50px;height:49.00px;background:#f1f2f5"></div><div class="r" style="left:656.75px;top:646.50px;width:1.50px;height:49.00px;background:#f1f2f5"></div><div class="r" style="left:874.25px;top:646.50px;width:1.50px;height:49.00px;background:#f1f2f5"></div><div class="r" style="left:1091.75px;top:646.50px;width:1.50px;height:49.00px;background:#f1f2f5"></div><div class="r" style="left:1286.75px;top:646.50px;width:1.50px;height:49.00px;background:#f1f2f5"></div><div class="r" style="left:1421.75px;top:646.50px;width:1.50px;height:49.00px;background:#f1f2f5"></div><div class="r" style="left:1586.75px;top:646.50px;width:1.50px;height:49.00px;background:#f1f2f5"></div><div class="r" style="left:1886.75px;top:646.50px;width:1.50px;height:49.00px;background:#f1f2f5"></div><div class="r" style="left:2261.75px;top:646.50px;width:1.50px;height:49.00px;background:#f1f2f5"></div><div class="r" style="left:2351.75px;top:646.50px;width:1.50px;height:49.00px;background:#f1f2f5"></div><div class="r" style="left:2441.75px;top:646.50px;width:1.50px;height:49.00px;background:#f1f2f5"></div><div class="r" style="left:2621.75px;top:646.50px;width:1.50px;height:49.00px;background:#f1f2f5"></div><div class="r" style="left:2921.75px;top:646.50px;width:1.50px;height:49.00px;background:#f1f2f5"></div><div class="r" style="left:3011.75px;top:646.50px;width:1.50px;height:49.00px;background:#f1f2f5"></div><div class="r" style="left:3101.75px;top:646.50px;width:1.50px;height:49.00px;background:#f1f2f5"></div><div class="t" style="top:662.75px;font-size:18.7px;color:#1f2937;letter-spacing:0.6px;left:-7.50px;">28-11-2024</div><div class="t" style="top:662.75px;font-size:18.7px;color:#1b6dd4;letter-spacing:0.5px;left:158.00px;">224553</div><div class="t" style="top:662.05px;font-size:18.7px;color:#1f2937;letter-spacing:0.4px;left:259.70px;">24079809USt</div><div class="t" style="top:662.75px;font-size:18.7px;color:#1f2937;letter-spacing:0.4px;left:450.00px;">24079809USt</div><div class="t" style="top:662.75px;font-size:18.7px;color:#1f2937;letter-spacing:0.5px;left:-344.50px;width:1200px;text-align:right;-webkit-text-stroke:0.3px #1f2937;">€ 21,33</div><div class="t" style="top:662.75px;font-size:18.7px;color:#1f2937;letter-spacing:0.1px;left:-127.00px;width:1200px;text-align:right;">€ 21,33</div><div class="t" style="top:662.75px;font-size:18.7px;color:#1f2937;letter-spacing:0.6px;left:1110.00px;">27-11-2024</div><div class="t" style="top:662.05px;font-size:18.7px;color:#1f2937;letter-spacing:0.9px;left:1301.70px;">0/0/0</div><div class="t" style="top:662.75px;font-size:18.7px;color:#1f2937;letter-spacing:0.6px;left:1440.00px;">27-11-2024</div><div class="t" style="top:662.75px;font-size:18.7px;color:#1f2937;letter-spacing:0.1px;left:1604.90px;">1340409 West-Apotheke So...</div><div class="t" style="top:662.75px;font-size:18.7px;color:#1f2937;letter-spacing:0.1px;left:1901.60px;">Nettobetrag überwiesen</div><div class="r" style="left:2294.70px;top:658.25px;width:24.00px;height:24.00px;background:#f3f4f7;border:1.5px solid #cdd3de;border-radius:5px"></div><div class="r" style="left:2384.70px;top:658.25px;width:24.00px;height:24.00px;background:#f3f4f7;border:1.5px solid #cdd3de;border-radius:5px"></div><div class="t" style="top:662.75px;font-size:18.7px;color:#1f2937;letter-spacing:0.2px;left:2457.40px;">1. Mahnung</div><div class="r" style="left:2954.70px;top:658.25px;width:24.00px;height:24.00px;background:#f3f4f7;border:1.5px solid #cdd3de;border-radius:5px"></div><div class="t" style="top:662.75px;font-size:18.7px;color:#1f2937;left:3029.70px;">1</div><div class="t" style="top:662.75px;font-size:18.7px;color:#1f2937;letter-spacing:0.2px;left:3119.90px;">Legacy-Booking</div><div class="r" style="left:245.00px;top:695.50px;width:187.50px;height:49.00px;background:#fdfdfd"></div><div class="r" style="left:1287.50px;top:695.50px;width:135.00px;height:49.00px;background:#fdfdfd"></div><div class="r" style="left:1887.50px;top:695.50px;width:375.00px;height:49.00px;background:#fdfdfd"></div><div class="r" style="left:2262.50px;top:695.50px;width:90.00px;height:49.00px;background:#fdfdfd"></div><div class="r" style="left:2352.50px;top:695.50px;width:90.00px;height:49.00px;background:#fdfdfd"></div><div class="r" style="left:2442.50px;top:695.50px;width:180.00px;height:49.00px;background:#fdfdfd"></div><div class="r" style="left:2622.50px;top:695.50px;width:300.00px;height:49.00px;background:#fdfdfd"></div><div class="r" style="left:2922.50px;top:695.50px;width:90.00px;height:49.00px;background:#fdfdfd"></div><div class="r" style="left:0.00px;top:744.50px;width:3218.00px;height:1.00px;background:#eceef2"></div><div class="r" style="left:245.00px;top:744.50px;width:187.50px;height:1.00px;background:#d0d4de"></div><div class="r" style="left:245.00px;top:743.50px;width:187.50px;height:1.00px;background:#fff"></div><div class="r" style="left:1287.50px;top:744.50px;width:135.00px;height:1.00px;background:#d0d4de"></div><div class="r" style="left:1287.50px;top:743.50px;width:135.00px;height:1.00px;background:#fff"></div><div class="r" style="left:1887.50px;top:744.50px;width:375.00px;height:1.00px;background:#d0d4de"></div><div class="r" style="left:1887.50px;top:743.50px;width:375.00px;height:1.00px;background:#fff"></div><div class="r" style="left:2262.50px;top:744.50px;width:90.00px;height:1.00px;background:#d0d4de"></div><div class="r" style="left:2262.50px;top:743.50px;width:90.00px;height:1.00px;background:#fff"></div><div class="r" style="left:2352.50px;top:744.50px;width:90.00px;height:1.00px;background:#d0d4de"></div><div class="r" style="left:2352.50px;top:743.50px;width:90.00px;height:1.00px;background:#fff"></div><div class="r" style="left:2442.50px;top:744.50px;width:180.00px;height:1.00px;background:#d0d4de"></div><div class="r" style="left:2442.50px;top:743.50px;width:180.00px;height:1.00px;background:#fff"></div><div class="r" style="left:2622.50px;top:744.50px;width:300.00px;height:1.00px;background:#d0d4de"></div><div class="r" style="left:2622.50px;top:743.50px;width:300.00px;height:1.00px;background:#fff"></div><div class="r" style="left:2922.50px;top:744.50px;width:90.00px;height:1.00px;background:#d0d4de"></div><div class="r" style="left:2922.50px;top:743.50px;width:90.00px;height:1.00px;background:#fff"></div><div class="r" style="left:139.25px;top:695.50px;width:1.50px;height:50.00px;background:#f1f2f5"></div><div class="r" style="left:244.25px;top:695.50px;width:1.50px;height:50.00px;background:#f1f2f5"></div><div class="r" style="left:431.75px;top:695.50px;width:1.50px;height:50.00px;background:#f1f2f5"></div><div class="r" style="left:656.75px;top:695.50px;width:1.50px;height:50.00px;background:#f1f2f5"></div><div class="r" style="left:874.25px;top:695.50px;width:1.50px;height:50.00px;background:#f1f2f5"></div><div class="r" style="left:1091.75px;top:695.50px;width:1.50px;height:50.00px;background:#f1f2f5"></div><div class="r" style="left:1286.75px;top:695.50px;width:1.50px;height:50.00px;background:#f1f2f5"></div><div class="r" style="left:1421.75px;top:695.50px;width:1.50px;height:50.00px;background:#f1f2f5"></div><div class="r" style="left:1586.75px;top:695.50px;width:1.50px;height:50.00px;background:#f1f2f5"></div><div class="r" style="left:1886.75px;top:695.50px;width:1.50px;height:50.00px;background:#f1f2f5"></div><div class="r" style="left:2261.75px;top:695.50px;width:1.50px;height:50.00px;background:#f1f2f5"></div><div class="r" style="left:2351.75px;top:695.50px;width:1.50px;height:50.00px;background:#f1f2f5"></div><div class="r" style="left:2441.75px;top:695.50px;width:1.50px;height:50.00px;background:#f1f2f5"></div><div class="r" style="left:2621.75px;top:695.50px;width:1.50px;height:50.00px;background:#f1f2f5"></div><div class="r" style="left:2921.75px;top:695.50px;width:1.50px;height:50.00px;background:#f1f2f5"></div><div class="r" style="left:3011.75px;top:695.50px;width:1.50px;height:50.00px;background:#f1f2f5"></div><div class="r" style="left:3101.75px;top:695.50px;width:1.50px;height:50.00px;background:#f1f2f5"></div><div class="t" style="top:712.25px;font-size:18.7px;color:#1f2937;letter-spacing:0.6px;left:-7.50px;">25-11-2024</div><div class="t" style="top:712.25px;font-size:18.7px;color:#1b6dd4;letter-spacing:0.5px;left:158.00px;">221244</div><div class="t" style="top:711.55px;font-size:18.7px;color:#1f2937;letter-spacing:0.5px;left:259.70px;">24076058</div><div class="t" style="top:712.25px;font-size:18.7px;color:#1f2937;letter-spacing:0.5px;left:450.00px;">24076058</div><div class="t" style="top:712.25px;font-size:18.7px;color:#1f2937;letter-spacing:0.5px;left:-344.50px;width:1200px;text-align:right;-webkit-text-stroke:0.3px #1f2937;">€ 11,31</div><div class="t" style="top:712.25px;font-size:18.7px;color:#1f2937;letter-spacing:0.1px;left:-127.00px;width:1200px;text-align:right;">€ 11,31</div><div class="t" style="top:712.25px;font-size:18.7px;color:#1f2937;letter-spacing:0.6px;left:1110.00px;">22-11-2024</div><div class="t" style="top:711.55px;font-size:18.7px;color:#1f2937;letter-spacing:0.9px;left:1301.70px;">0/0/0</div><div class="t" style="top:712.25px;font-size:18.7px;color:#1f2937;letter-spacing:0.6px;left:1440.00px;">22-11-2024</div><div class="t" style="top:712.25px;font-size:18.7px;color:#1f2937;letter-spacing:0.1px;left:1604.90px;">4900009 Großeinkaufsring d...</div><div class="t" style="top:712.25px;font-size:18.7px;color:#1f2937;letter-spacing:0.1px;left:1901.60px;">Kürzung, obwohl Verrg. mit 24078700</div><div class="r" style="left:2294.70px;top:707.75px;width:24.00px;height:24.00px;background:#f3f4f7;border:1.5px solid #cdd3de;border-radius:5px"></div><div class="r" style="left:2384.70px;top:707.75px;width:24.00px;height:24.00px;background:#f3f4f7;border:1.5px solid #cdd3de;border-radius:5px"></div><div class="t" style="top:712.25px;font-size:18.7px;color:#1f2937;letter-spacing:0.2px;left:2457.40px;">1. Mahnung</div><div class="r" style="left:2954.70px;top:707.75px;width:24.00px;height:24.00px;background:#f3f4f7;border:1.5px solid #cdd3de;border-radius:5px"></div><div class="t" style="top:712.25px;font-size:18.7px;color:#1f2937;left:3029.70px;">1</div><div class="t" style="top:712.25px;font-size:18.7px;color:#1f2937;letter-spacing:0.2px;left:3119.90px;">Legacy-Booking</div><div class="r" style="left:245.00px;top:745.50px;width:187.50px;height:48.00px;background:#fdfdfd"></div><div class="r" style="left:1287.50px;top:745.50px;width:135.00px;height:48.00px;background:#fdfdfd"></div><div class="r" style="left:1887.50px;top:745.50px;width:375.00px;height:48.00px;background:#fdfdfd"></div><div class="r" style="left:2262.50px;top:745.50px;width:90.00px;height:48.00px;background:#fdfdfd"></div><div class="r" style="left:2352.50px;top:745.50px;width:90.00px;height:48.00px;background:#fdfdfd"></div><div class="r" style="left:2442.50px;top:745.50px;width:180.00px;height:48.00px;background:#fdfdfd"></div><div class="r" style="left:2622.50px;top:745.50px;width:300.00px;height:48.00px;background:#fdfdfd"></div><div class="r" style="left:2922.50px;top:745.50px;width:90.00px;height:48.00px;background:#fdfdfd"></div><div class="r" style="left:0.00px;top:793.50px;width:3218.00px;height:1.00px;background:#eceef2"></div><div class="r" style="left:245.00px;top:793.50px;width:187.50px;height:1.00px;background:#d0d4de"></div><div class="r" style="left:245.00px;top:792.50px;width:187.50px;height:1.00px;background:#fff"></div><div class="r" style="left:1287.50px;top:793.50px;width:135.00px;height:1.00px;background:#d0d4de"></div><div class="r" style="left:1287.50px;top:792.50px;width:135.00px;height:1.00px;background:#fff"></div><div class="r" style="left:1887.50px;top:793.50px;width:375.00px;height:1.00px;background:#d0d4de"></div><div class="r" style="left:1887.50px;top:792.50px;width:375.00px;height:1.00px;background:#fff"></div><div class="r" style="left:2262.50px;top:793.50px;width:90.00px;height:1.00px;background:#d0d4de"></div><div class="r" style="left:2262.50px;top:792.50px;width:90.00px;height:1.00px;background:#fff"></div><div class="r" style="left:2352.50px;top:793.50px;width:90.00px;height:1.00px;background:#d0d4de"></div><div class="r" style="left:2352.50px;top:792.50px;width:90.00px;height:1.00px;background:#fff"></div><div class="r" style="left:2442.50px;top:793.50px;width:180.00px;height:1.00px;background:#d0d4de"></div><div class="r" style="left:2442.50px;top:792.50px;width:180.00px;height:1.00px;background:#fff"></div><div class="r" style="left:2622.50px;top:793.50px;width:300.00px;height:1.00px;background:#d0d4de"></div><div class="r" style="left:2622.50px;top:792.50px;width:300.00px;height:1.00px;background:#fff"></div><div class="r" style="left:2922.50px;top:793.50px;width:90.00px;height:1.00px;background:#d0d4de"></div><div class="r" style="left:2922.50px;top:792.50px;width:90.00px;height:1.00px;background:#fff"></div><div class="r" style="left:139.25px;top:745.50px;width:1.50px;height:49.00px;background:#f1f2f5"></div><div class="r" style="left:244.25px;top:745.50px;width:1.50px;height:49.00px;background:#f1f2f5"></div><div class="r" style="left:431.75px;top:745.50px;width:1.50px;height:49.00px;background:#f1f2f5"></div><div class="r" style="left:656.75px;top:745.50px;width:1.50px;height:49.00px;background:#f1f2f5"></div><div class="r" style="left:874.25px;top:745.50px;width:1.50px;height:49.00px;background:#f1f2f5"></div><div class="r" style="left:1091.75px;top:745.50px;width:1.50px;height:49.00px;background:#f1f2f5"></div><div class="r" style="left:1286.75px;top:745.50px;width:1.50px;height:49.00px;background:#f1f2f5"></div><div class="r" style="left:1421.75px;top:745.50px;width:1.50px;height:49.00px;background:#f1f2f5"></div><div class="r" style="left:1586.75px;top:745.50px;width:1.50px;height:49.00px;background:#f1f2f5"></div><div class="r" style="left:1886.75px;top:745.50px;width:1.50px;height:49.00px;background:#f1f2f5"></div><div class="r" style="left:2261.75px;top:745.50px;width:1.50px;height:49.00px;background:#f1f2f5"></div><div class="r" style="left:2351.75px;top:745.50px;width:1.50px;height:49.00px;background:#f1f2f5"></div><div class="r" style="left:2441.75px;top:745.50px;width:1.50px;height:49.00px;background:#f1f2f5"></div><div class="r" style="left:2621.75px;top:745.50px;width:1.50px;height:49.00px;background:#f1f2f5"></div><div class="r" style="left:2921.75px;top:745.50px;width:1.50px;height:49.00px;background:#f1f2f5"></div><div class="r" style="left:3011.75px;top:745.50px;width:1.50px;height:49.00px;background:#f1f2f5"></div><div class="r" style="left:3101.75px;top:745.50px;width:1.50px;height:49.00px;background:#f1f2f5"></div><div class="t" style="top:761.75px;font-size:18.7px;color:#1f2937;letter-spacing:0.6px;left:-7.50px;">22-11-2024</div><div class="t" style="top:761.75px;font-size:18.7px;color:#1b6dd4;letter-spacing:0.5px;left:158.00px;">220167</div><div class="t" style="top:761.05px;font-size:18.7px;color:#1f2937;letter-spacing:0.5px;left:259.70px;">24081749</div><div class="t" style="top:761.75px;font-size:18.7px;color:#1f2937;letter-spacing:0.5px;left:450.00px;">24081749</div><div class="t" style="top:761.75px;font-size:18.7px;color:#1f2937;letter-spacing:0.5px;left:-344.50px;width:1200px;text-align:right;-webkit-text-stroke:0.3px #1f2937;">€ 418,90</div><div class="t" style="top:761.75px;font-size:18.7px;color:#1f2937;letter-spacing:0.1px;left:-127.00px;width:1200px;text-align:right;">€ 418,90</div><div class="t" style="top:761.75px;font-size:18.7px;color:#1f2937;letter-spacing:0.6px;left:1110.00px;">22-11-2024</div><div class="t" style="top:761.05px;font-size:18.7px;color:#1f2937;letter-spacing:0.9px;left:1301.70px;">14/14/2</div><div class="t" style="top:761.75px;font-size:18.7px;color:#1f2937;letter-spacing:0.6px;left:1440.00px;">06-12-2024</div><div class="t" style="top:761.75px;font-size:18.7px;color:#1f2937;letter-spacing:0.1px;left:1604.90px;">80000 Erlöse 19% (HR)</div><div class="t" style="top:761.75px;font-size:18.7px;color:#1f2937;letter-spacing:0.1px;left:1901.60px;">1070216 Markgrafen Coswig Moritzbur...</div><div class="r" style="left:2294.70px;top:757.25px;width:24.00px;height:24.00px;background:#f3f4f7;border:1.5px solid #cdd3de;border-radius:5px"></div><div class="r" style="left:2384.70px;top:757.25px;width:24.00px;height:24.00px;background:#f3f4f7;border:1.5px solid #cdd3de;border-radius:5px"></div><div class="t" style="top:761.75px;font-size:18.7px;color:#1f2937;letter-spacing:0.2px;left:2457.40px;">1. Mahnung</div><div class="r" style="left:2954.70px;top:757.25px;width:24.00px;height:24.00px;background:#f3f4f7;border:1.5px solid #cdd3de;border-radius:5px"></div><div class="t" style="top:761.75px;font-size:18.7px;color:#1f2937;left:3029.70px;">1</div><div class="t" style="top:761.75px;font-size:18.7px;color:#1f2937;letter-spacing:0.2px;left:3119.90px;">Legacy-Booking</div><div class="r" style="left:245.00px;top:794.50px;width:187.50px;height:49.00px;background:#fdfdfd"></div><div class="r" style="left:1287.50px;top:794.50px;width:135.00px;height:49.00px;background:#fdfdfd"></div><div class="r" style="left:1887.50px;top:794.50px;width:375.00px;height:49.00px;background:#fdfdfd"></div><div class="r" style="left:2262.50px;top:794.50px;width:90.00px;height:49.00px;background:#fdfdfd"></div><div class="r" style="left:2352.50px;top:794.50px;width:90.00px;height:49.00px;background:#fdfdfd"></div><div class="r" style="left:2442.50px;top:794.50px;width:180.00px;height:49.00px;background:#fdfdfd"></div><div class="r" style="left:2622.50px;top:794.50px;width:300.00px;height:49.00px;background:#fdfdfd"></div><div class="r" style="left:2922.50px;top:794.50px;width:90.00px;height:49.00px;background:#fdfdfd"></div><div class="r" style="left:0.00px;top:843.50px;width:3218.00px;height:1.00px;background:#eceef2"></div><div class="r" style="left:245.00px;top:843.50px;width:187.50px;height:1.00px;background:#d0d4de"></div><div class="r" style="left:245.00px;top:842.50px;width:187.50px;height:1.00px;background:#fff"></div><div class="r" style="left:1287.50px;top:843.50px;width:135.00px;height:1.00px;background:#d0d4de"></div><div class="r" style="left:1287.50px;top:842.50px;width:135.00px;height:1.00px;background:#fff"></div><div class="r" style="left:1887.50px;top:843.50px;width:375.00px;height:1.00px;background:#d0d4de"></div><div class="r" style="left:1887.50px;top:842.50px;width:375.00px;height:1.00px;background:#fff"></div><div class="r" style="left:2262.50px;top:843.50px;width:90.00px;height:1.00px;background:#d0d4de"></div><div class="r" style="left:2262.50px;top:842.50px;width:90.00px;height:1.00px;background:#fff"></div><div class="r" style="left:2352.50px;top:843.50px;width:90.00px;height:1.00px;background:#d0d4de"></div><div class="r" style="left:2352.50px;top:842.50px;width:90.00px;height:1.00px;background:#fff"></div><div class="r" style="left:2442.50px;top:843.50px;width:180.00px;height:1.00px;background:#d0d4de"></div><div class="r" style="left:2442.50px;top:842.50px;width:180.00px;height:1.00px;background:#fff"></div><div class="r" style="left:2622.50px;top:843.50px;width:300.00px;height:1.00px;background:#d0d4de"></div><div class="r" style="left:2622.50px;top:842.50px;width:300.00px;height:1.00px;background:#fff"></div><div class="r" style="left:2922.50px;top:843.50px;width:90.00px;height:1.00px;background:#d0d4de"></div><div class="r" style="left:2922.50px;top:842.50px;width:90.00px;height:1.00px;background:#fff"></div><div class="r" style="left:139.25px;top:794.50px;width:1.50px;height:50.00px;background:#f1f2f5"></div><div class="r" style="left:244.25px;top:794.50px;width:1.50px;height:50.00px;background:#f1f2f5"></div><div class="r" style="left:431.75px;top:794.50px;width:1.50px;height:50.00px;background:#f1f2f5"></div><div class="r" style="left:656.75px;top:794.50px;width:1.50px;height:50.00px;background:#f1f2f5"></div><div class="r" style="left:874.25px;top:794.50px;width:1.50px;height:50.00px;background:#f1f2f5"></div><div class="r" style="left:1091.75px;top:794.50px;width:1.50px;height:50.00px;background:#f1f2f5"></div><div class="r" style="left:1286.75px;top:794.50px;width:1.50px;height:50.00px;background:#f1f2f5"></div><div class="r" style="left:1421.75px;top:794.50px;width:1.50px;height:50.00px;background:#f1f2f5"></div><div class="r" style="left:1586.75px;top:794.50px;width:1.50px;height:50.00px;background:#f1f2f5"></div><div class="r" style="left:1886.75px;top:794.50px;width:1.50px;height:50.00px;background:#f1f2f5"></div><div class="r" style="left:2261.75px;top:794.50px;width:1.50px;height:50.00px;background:#f1f2f5"></div><div class="r" style="left:2351.75px;top:794.50px;width:1.50px;height:50.00px;background:#f1f2f5"></div><div class="r" style="left:2441.75px;top:794.50px;width:1.50px;height:50.00px;background:#f1f2f5"></div><div class="r" style="left:2621.75px;top:794.50px;width:1.50px;height:50.00px;background:#f1f2f5"></div><div class="r" style="left:2921.75px;top:794.50px;width:1.50px;height:50.00px;background:#f1f2f5"></div><div class="r" style="left:3011.75px;top:794.50px;width:1.50px;height:50.00px;background:#f1f2f5"></div><div class="r" style="left:3101.75px;top:794.50px;width:1.50px;height:50.00px;background:#f1f2f5"></div><div class="t" style="top:811.25px;font-size:18.7px;color:#1f2937;letter-spacing:0.6px;left:-7.50px;">08-11-2024</div><div class="t" style="top:811.25px;font-size:18.7px;color:#1b6dd4;letter-spacing:0.5px;left:158.00px;">210202</div><div class="t" style="top:810.55px;font-size:18.7px;color:#1f2937;letter-spacing:0.5px;left:259.70px;">24077861</div><div class="t" style="top:811.25px;font-size:18.7px;color:#1f2937;letter-spacing:0.5px;left:450.00px;">24077861</div><div class="t" style="top:811.25px;font-size:18.7px;color:#1f2937;letter-spacing:0.5px;left:-344.50px;width:1200px;text-align:right;-webkit-text-stroke:0.3px #1f2937;">€ 327,39</div><div class="t" style="top:811.25px;font-size:18.7px;color:#1f2937;letter-spacing:0.1px;left:-127.00px;width:1200px;text-align:right;">€ 327,39</div><div class="t" style="top:811.25px;font-size:18.7px;color:#1f2937;letter-spacing:0.6px;left:1110.00px;">08-11-2024</div><div class="t" style="top:810.55px;font-size:18.7px;color:#1f2937;letter-spacing:0.9px;left:1301.70px;">30/7/2</div><div class="t" style="top:811.25px;font-size:18.7px;color:#1f2937;letter-spacing:0.6px;left:1440.00px;">08-12-2024</div><div class="t" style="top:811.25px;font-size:18.7px;color:#1f2937;letter-spacing:0.1px;left:1604.90px;">80000 Erlöse 19% (HR)</div><div class="t" style="top:811.25px;font-size:18.7px;color:#1f2937;letter-spacing:0.1px;left:1901.60px;">1023677 easy-Apotheke Georg-Mayr-...</div><div class="r" style="left:2294.70px;top:806.75px;width:24.00px;height:24.00px;background:#f3f4f7;border:1.5px solid #cdd3de;border-radius:5px"></div><div class="r" style="left:2384.70px;top:806.75px;width:24.00px;height:24.00px;background:#f3f4f7;border:1.5px solid #cdd3de;border-radius:5px"></div><div class="t" style="top:811.25px;font-size:18.7px;color:#1f2937;letter-spacing:0.2px;left:2457.40px;">1. Mahnung</div><div class="r" style="left:2954.70px;top:806.75px;width:24.00px;height:24.00px;background:#f3f4f7;border:1.5px solid #cdd3de;border-radius:5px"></div><div class="t" style="top:811.25px;font-size:18.7px;color:#1f2937;left:3029.70px;">1</div><div class="t" style="top:811.25px;font-size:18.7px;color:#1f2937;letter-spacing:0.2px;left:3119.90px;">Legacy-Booking</div><div class="r" style="left:245.00px;top:844.50px;width:187.50px;height:48.00px;background:#fdfdfd"></div><div class="r" style="left:1287.50px;top:844.50px;width:135.00px;height:48.00px;background:#fdfdfd"></div><div class="r" style="left:1887.50px;top:844.50px;width:375.00px;height:48.00px;background:#fdfdfd"></div><div class="r" style="left:2262.50px;top:844.50px;width:90.00px;height:48.00px;background:#fdfdfd"></div><div class="r" style="left:2352.50px;top:844.50px;width:90.00px;height:48.00px;background:#fdfdfd"></div><div class="r" style="left:2442.50px;top:844.50px;width:180.00px;height:48.00px;background:#fdfdfd"></div><div class="r" style="left:2622.50px;top:844.50px;width:300.00px;height:48.00px;background:#fdfdfd"></div><div class="r" style="left:2922.50px;top:844.50px;width:90.00px;height:48.00px;background:#fdfdfd"></div><div class="r" style="left:0.00px;top:892.50px;width:3218.00px;height:1.00px;background:#eceef2"></div><div class="r" style="left:245.00px;top:892.50px;width:187.50px;height:1.00px;background:#d0d4de"></div><div class="r" style="left:245.00px;top:891.50px;width:187.50px;height:1.00px;background:#fff"></div><div class="r" style="left:1287.50px;top:892.50px;width:135.00px;height:1.00px;background:#d0d4de"></div><div class="r" style="left:1287.50px;top:891.50px;width:135.00px;height:1.00px;background:#fff"></div><div class="r" style="left:1887.50px;top:892.50px;width:375.00px;height:1.00px;background:#d0d4de"></div><div class="r" style="left:1887.50px;top:891.50px;width:375.00px;height:1.00px;background:#fff"></div><div class="r" style="left:2262.50px;top:892.50px;width:90.00px;height:1.00px;background:#d0d4de"></div><div class="r" style="left:2262.50px;top:891.50px;width:90.00px;height:1.00px;background:#fff"></div><div class="r" style="left:2352.50px;top:892.50px;width:90.00px;height:1.00px;background:#d0d4de"></div><div class="r" style="left:2352.50px;top:891.50px;width:90.00px;height:1.00px;background:#fff"></div><div class="r" style="left:2442.50px;top:892.50px;width:180.00px;height:1.00px;background:#d0d4de"></div><div class="r" style="left:2442.50px;top:891.50px;width:180.00px;height:1.00px;background:#fff"></div><div class="r" style="left:2622.50px;top:892.50px;width:300.00px;height:1.00px;background:#d0d4de"></div><div class="r" style="left:2622.50px;top:891.50px;width:300.00px;height:1.00px;background:#fff"></div><div class="r" style="left:2922.50px;top:892.50px;width:90.00px;height:1.00px;background:#d0d4de"></div><div class="r" style="left:2922.50px;top:891.50px;width:90.00px;height:1.00px;background:#fff"></div><div class="r" style="left:139.25px;top:844.50px;width:1.50px;height:49.00px;background:#f1f2f5"></div><div class="r" style="left:244.25px;top:844.50px;width:1.50px;height:49.00px;background:#f1f2f5"></div><div class="r" style="left:431.75px;top:844.50px;width:1.50px;height:49.00px;background:#f1f2f5"></div><div class="r" style="left:656.75px;top:844.50px;width:1.50px;height:49.00px;background:#f1f2f5"></div><div class="r" style="left:874.25px;top:844.50px;width:1.50px;height:49.00px;background:#f1f2f5"></div><div class="r" style="left:1091.75px;top:844.50px;width:1.50px;height:49.00px;background:#f1f2f5"></div><div class="r" style="left:1286.75px;top:844.50px;width:1.50px;height:49.00px;background:#f1f2f5"></div><div class="r" style="left:1421.75px;top:844.50px;width:1.50px;height:49.00px;background:#f1f2f5"></div><div class="r" style="left:1586.75px;top:844.50px;width:1.50px;height:49.00px;background:#f1f2f5"></div><div class="r" style="left:1886.75px;top:844.50px;width:1.50px;height:49.00px;background:#f1f2f5"></div><div class="r" style="left:2261.75px;top:844.50px;width:1.50px;height:49.00px;background:#f1f2f5"></div><div class="r" style="left:2351.75px;top:844.50px;width:1.50px;height:49.00px;background:#f1f2f5"></div><div class="r" style="left:2441.75px;top:844.50px;width:1.50px;height:49.00px;background:#f1f2f5"></div><div class="r" style="left:2621.75px;top:844.50px;width:1.50px;height:49.00px;background:#f1f2f5"></div><div class="r" style="left:2921.75px;top:844.50px;width:1.50px;height:49.00px;background:#f1f2f5"></div><div class="r" style="left:3011.75px;top:844.50px;width:1.50px;height:49.00px;background:#f1f2f5"></div><div class="r" style="left:3101.75px;top:844.50px;width:1.50px;height:49.00px;background:#f1f2f5"></div><div class="t" style="top:860.75px;font-size:18.7px;color:#1f2937;letter-spacing:0.6px;left:-7.50px;">08-11-2024</div><div class="t" style="top:860.75px;font-size:18.7px;color:#1b6dd4;letter-spacing:0.5px;left:158.00px;">210154</div><div class="t" style="top:860.05px;font-size:18.7px;color:#1f2937;letter-spacing:0.5px;left:259.70px;">24077834</div><div class="t" style="top:860.75px;font-size:18.7px;color:#1f2937;letter-spacing:0.5px;left:450.00px;">24077834</div><div class="t" style="top:860.75px;font-size:18.7px;color:#1f2937;letter-spacing:0.5px;left:-344.50px;width:1200px;text-align:right;-webkit-text-stroke:0.3px #1f2937;">€ 313,16</div><div class="t" style="top:860.75px;font-size:18.7px;color:#1f2937;letter-spacing:0.1px;left:-127.00px;width:1200px;text-align:right;">€ 313,16</div><div class="t" style="top:860.75px;font-size:18.7px;color:#1f2937;letter-spacing:0.6px;left:1110.00px;">08-11-2024</div><div class="t" style="top:860.05px;font-size:18.7px;color:#1f2937;letter-spacing:0.9px;left:1301.70px;">30/7/2</div><div class="t" style="top:860.75px;font-size:18.7px;color:#1f2937;letter-spacing:0.6px;left:1440.00px;">08-12-2024</div><div class="t" style="top:860.75px;font-size:18.7px;color:#1f2937;letter-spacing:0.1px;left:1604.90px;">80000 Erlöse 19% (HR)</div><div class="t" style="top:860.75px;font-size:18.7px;color:#1f2937;letter-spacing:0.1px;left:1901.60px;">1053693 Viktoria - Apotheke Viktorias...</div><div class="r" style="left:2294.70px;top:856.25px;width:24.00px;height:24.00px;background:#f3f4f7;border:1.5px solid #cdd3de;border-radius:5px"></div><div class="r" style="left:2384.70px;top:856.25px;width:24.00px;height:24.00px;background:#f3f4f7;border:1.5px solid #cdd3de;border-radius:5px"></div><div class="t" style="top:860.75px;font-size:18.7px;color:#1f2937;letter-spacing:0.2px;left:2457.40px;">1. Mahnung</div><div class="r" style="left:2954.70px;top:856.25px;width:24.00px;height:24.00px;background:#f3f4f7;border:1.5px solid #cdd3de;border-radius:5px"></div><div class="t" style="top:860.75px;font-size:18.7px;color:#1f2937;left:3029.70px;">1</div><div class="t" style="top:860.75px;font-size:18.7px;color:#1f2937;letter-spacing:0.2px;left:3119.90px;">Legacy-Booking</div><div class="r" style="left:245.00px;top:893.50px;width:187.50px;height:49.00px;background:#fdfdfd"></div><div class="r" style="left:1287.50px;top:893.50px;width:135.00px;height:49.00px;background:#fdfdfd"></div><div class="r" style="left:1887.50px;top:893.50px;width:375.00px;height:49.00px;background:#fdfdfd"></div><div class="r" style="left:2262.50px;top:893.50px;width:90.00px;height:49.00px;background:#fdfdfd"></div><div class="r" style="left:2352.50px;top:893.50px;width:90.00px;height:49.00px;background:#fdfdfd"></div><div class="r" style="left:2442.50px;top:893.50px;width:180.00px;height:49.00px;background:#fdfdfd"></div><div class="r" style="left:2622.50px;top:893.50px;width:300.00px;height:49.00px;background:#fdfdfd"></div><div class="r" style="left:2922.50px;top:893.50px;width:90.00px;height:49.00px;background:#fdfdfd"></div><div class="r" style="left:0.00px;top:942.50px;width:3218.00px;height:1.00px;background:#eceef2"></div><div class="r" style="left:245.00px;top:942.50px;width:187.50px;height:1.00px;background:#d0d4de"></div><div class="r" style="left:245.00px;top:941.50px;width:187.50px;height:1.00px;background:#fff"></div><div class="r" style="left:1287.50px;top:942.50px;width:135.00px;height:1.00px;background:#d0d4de"></div><div class="r" style="left:1287.50px;top:941.50px;width:135.00px;height:1.00px;background:#fff"></div><div class="r" style="left:1887.50px;top:942.50px;width:375.00px;height:1.00px;background:#d0d4de"></div><div class="r" style="left:1887.50px;top:941.50px;width:375.00px;height:1.00px;background:#fff"></div><div class="r" style="left:2262.50px;top:942.50px;width:90.00px;height:1.00px;background:#d0d4de"></div><div class="r" style="left:2262.50px;top:941.50px;width:90.00px;height:1.00px;background:#fff"></div><div class="r" style="left:2352.50px;top:942.50px;width:90.00px;height:1.00px;background:#d0d4de"></div><div class="r" style="left:2352.50px;top:941.50px;width:90.00px;height:1.00px;background:#fff"></div><div class="r" style="left:2442.50px;top:942.50px;width:180.00px;height:1.00px;background:#d0d4de"></div><div class="r" style="left:2442.50px;top:941.50px;width:180.00px;height:1.00px;background:#fff"></div><div class="r" style="left:2622.50px;top:942.50px;width:300.00px;height:1.00px;background:#d0d4de"></div><div class="r" style="left:2622.50px;top:941.50px;width:300.00px;height:1.00px;background:#fff"></div><div class="r" style="left:2922.50px;top:942.50px;width:90.00px;height:1.00px;background:#d0d4de"></div><div class="r" style="left:2922.50px;top:941.50px;width:90.00px;height:1.00px;background:#fff"></div><div class="r" style="left:139.25px;top:893.50px;width:1.50px;height:50.00px;background:#f1f2f5"></div><div class="r" style="left:244.25px;top:893.50px;width:1.50px;height:50.00px;background:#f1f2f5"></div><div class="r" style="left:431.75px;top:893.50px;width:1.50px;height:50.00px;background:#f1f2f5"></div><div class="r" style="left:656.75px;top:893.50px;width:1.50px;height:50.00px;background:#f1f2f5"></div><div class="r" style="left:874.25px;top:893.50px;width:1.50px;height:50.00px;background:#f1f2f5"></div><div class="r" style="left:1091.75px;top:893.50px;width:1.50px;height:50.00px;background:#f1f2f5"></div><div class="r" style="left:1286.75px;top:893.50px;width:1.50px;height:50.00px;background:#f1f2f5"></div><div class="r" style="left:1421.75px;top:893.50px;width:1.50px;height:50.00px;background:#f1f2f5"></div><div class="r" style="left:1586.75px;top:893.50px;width:1.50px;height:50.00px;background:#f1f2f5"></div><div class="r" style="left:1886.75px;top:893.50px;width:1.50px;height:50.00px;background:#f1f2f5"></div><div class="r" style="left:2261.75px;top:893.50px;width:1.50px;height:50.00px;background:#f1f2f5"></div><div class="r" style="left:2351.75px;top:893.50px;width:1.50px;height:50.00px;background:#f1f2f5"></div><div class="r" style="left:2441.75px;top:893.50px;width:1.50px;height:50.00px;background:#f1f2f5"></div><div class="r" style="left:2621.75px;top:893.50px;width:1.50px;height:50.00px;background:#f1f2f5"></div><div class="r" style="left:2921.75px;top:893.50px;width:1.50px;height:50.00px;background:#f1f2f5"></div><div class="r" style="left:3011.75px;top:893.50px;width:1.50px;height:50.00px;background:#f1f2f5"></div><div class="r" style="left:3101.75px;top:893.50px;width:1.50px;height:50.00px;background:#f1f2f5"></div><div class="t" style="top:910.25px;font-size:18.7px;color:#1f2937;letter-spacing:0.6px;left:-7.50px;">08-11-2024</div><div class="t" style="top:910.25px;font-size:18.7px;color:#1b6dd4;letter-spacing:0.5px;left:158.00px;">209965</div><div class="t" style="top:909.55px;font-size:18.7px;color:#1f2937;letter-spacing:0.5px;left:259.70px;">24077767</div><div class="t" style="top:910.25px;font-size:18.7px;color:#1f2937;letter-spacing:0.5px;left:450.00px;">24077767</div><div class="t" style="top:910.25px;font-size:18.7px;color:#1f2937;letter-spacing:0.5px;left:-344.50px;width:1200px;text-align:right;-webkit-text-stroke:0.3px #1f2937;">€ 197,07</div><div class="t" style="top:910.25px;font-size:18.7px;color:#1f2937;letter-spacing:0.1px;left:-127.00px;width:1200px;text-align:right;">€ 197,07</div><div class="t" style="top:910.25px;font-size:18.7px;color:#1f2937;letter-spacing:0.6px;left:1110.00px;">08-11-2024</div><div class="t" style="top:909.55px;font-size:18.7px;color:#1f2937;letter-spacing:0.9px;left:1301.70px;">30/7/2</div><div class="t" style="top:910.25px;font-size:18.7px;color:#1f2937;letter-spacing:0.6px;left:1440.00px;">08-12-2024</div><div class="t" style="top:910.25px;font-size:18.7px;color:#1f2937;letter-spacing:0.1px;left:1901.60px;">1012123 Pilsensee-Apotheke Günterin...</div><div class="r" style="left:2294.70px;top:905.75px;width:24.00px;height:24.00px;background:#f3f4f7;border:1.5px solid #cdd3de;border-radius:5px"></div><div class="r" style="left:2384.70px;top:905.75px;width:24.00px;height:24.00px;background:#f3f4f7;border:1.5px solid #cdd3de;border-radius:5px"></div><div class="t" style="top:910.25px;font-size:18.7px;color:#1f2937;letter-spacing:0.2px;left:2457.40px;">1. Mahnung</div><div class="r" style="left:2954.70px;top:905.75px;width:24.00px;height:24.00px;background:#f3f4f7;border:1.5px solid #cdd3de;border-radius:5px"></div><div class="t" style="top:910.25px;font-size:18.7px;color:#1f2937;left:3029.70px;">1</div><div class="t" style="top:910.25px;font-size:18.7px;color:#1f2937;letter-spacing:0.2px;left:3119.90px;">Legacy-Booking</div><div class="r" style="left:245.00px;top:943.50px;width:187.50px;height:48.00px;background:#fdfdfd"></div><div class="r" style="left:1287.50px;top:943.50px;width:135.00px;height:48.00px;background:#fdfdfd"></div><div class="r" style="left:1887.50px;top:943.50px;width:375.00px;height:48.00px;background:#fdfdfd"></div><div class="r" style="left:2262.50px;top:943.50px;width:90.00px;height:48.00px;background:#fdfdfd"></div><div class="r" style="left:2352.50px;top:943.50px;width:90.00px;height:48.00px;background:#fdfdfd"></div><div class="r" style="left:2442.50px;top:943.50px;width:180.00px;height:48.00px;background:#fdfdfd"></div><div class="r" style="left:2622.50px;top:943.50px;width:300.00px;height:48.00px;background:#fdfdfd"></div><div class="r" style="left:2922.50px;top:943.50px;width:90.00px;height:48.00px;background:#fdfdfd"></div><div class="r" style="left:0.00px;top:991.50px;width:3218.00px;height:1.00px;background:#eceef2"></div><div class="r" style="left:245.00px;top:991.50px;width:187.50px;height:1.00px;background:#d0d4de"></div><div class="r" style="left:245.00px;top:990.50px;width:187.50px;height:1.00px;background:#fff"></div><div class="r" style="left:1287.50px;top:991.50px;width:135.00px;height:1.00px;background:#d0d4de"></div><div class="r" style="left:1287.50px;top:990.50px;width:135.00px;height:1.00px;background:#fff"></div><div class="r" style="left:1887.50px;top:991.50px;width:375.00px;height:1.00px;background:#d0d4de"></div><div class="r" style="left:1887.50px;top:990.50px;width:375.00px;height:1.00px;background:#fff"></div><div class="r" style="left:2262.50px;top:991.50px;width:90.00px;height:1.00px;background:#d0d4de"></div><div class="r" style="left:2262.50px;top:990.50px;width:90.00px;height:1.00px;background:#fff"></div><div class="r" style="left:2352.50px;top:991.50px;width:90.00px;height:1.00px;background:#d0d4de"></div><div class="r" style="left:2352.50px;top:990.50px;width:90.00px;height:1.00px;background:#fff"></div><div class="r" style="left:2442.50px;top:991.50px;width:180.00px;height:1.00px;background:#d0d4de"></div><div class="r" style="left:2442.50px;top:990.50px;width:180.00px;height:1.00px;background:#fff"></div><div class="r" style="left:2622.50px;top:991.50px;width:300.00px;height:1.00px;background:#d0d4de"></div><div class="r" style="left:2622.50px;top:990.50px;width:300.00px;height:1.00px;background:#fff"></div><div class="r" style="left:2922.50px;top:991.50px;width:90.00px;height:1.00px;background:#d0d4de"></div><div class="r" style="left:2922.50px;top:990.50px;width:90.00px;height:1.00px;background:#fff"></div><div class="r" style="left:139.25px;top:943.50px;width:1.50px;height:49.00px;background:#f1f2f5"></div><div class="r" style="left:244.25px;top:943.50px;width:1.50px;height:49.00px;background:#f1f2f5"></div><div class="r" style="left:431.75px;top:943.50px;width:1.50px;height:49.00px;background:#f1f2f5"></div><div class="r" style="left:656.75px;top:943.50px;width:1.50px;height:49.00px;background:#f1f2f5"></div><div class="r" style="left:874.25px;top:943.50px;width:1.50px;height:49.00px;background:#f1f2f5"></div><div class="r" style="left:1091.75px;top:943.50px;width:1.50px;height:49.00px;background:#f1f2f5"></div><div class="r" style="left:1286.75px;top:943.50px;width:1.50px;height:49.00px;background:#f1f2f5"></div><div class="r" style="left:1421.75px;top:943.50px;width:1.50px;height:49.00px;background:#f1f2f5"></div><div class="r" style="left:1586.75px;top:943.50px;width:1.50px;height:49.00px;background:#f1f2f5"></div><div class="r" style="left:1886.75px;top:943.50px;width:1.50px;height:49.00px;background:#f1f2f5"></div><div class="r" style="left:2261.75px;top:943.50px;width:1.50px;height:49.00px;background:#f1f2f5"></div><div class="r" style="left:2351.75px;top:943.50px;width:1.50px;height:49.00px;background:#f1f2f5"></div><div class="r" style="left:2441.75px;top:943.50px;width:1.50px;height:49.00px;background:#f1f2f5"></div><div class="r" style="left:2621.75px;top:943.50px;width:1.50px;height:49.00px;background:#f1f2f5"></div><div class="r" style="left:2921.75px;top:943.50px;width:1.50px;height:49.00px;background:#f1f2f5"></div><div class="r" style="left:3011.75px;top:943.50px;width:1.50px;height:49.00px;background:#f1f2f5"></div><div class="r" style="left:3101.75px;top:943.50px;width:1.50px;height:49.00px;background:#f1f2f5"></div><div class="t" style="top:959.75px;font-size:18.7px;color:#1f2937;letter-spacing:0.6px;left:-7.50px;">08-11-2024</div><div class="t" style="top:959.75px;font-size:18.7px;color:#1b6dd4;letter-spacing:0.5px;left:158.00px;">209867</div><div class="t" style="top:959.05px;font-size:18.7px;color:#1f2937;letter-spacing:0.5px;left:259.70px;">24077719</div><div class="t" style="top:959.75px;font-size:18.7px;color:#1f2937;letter-spacing:0.5px;left:450.00px;">24077719</div><div class="t" style="top:959.75px;font-size:18.7px;color:#1f2937;letter-spacing:0.5px;left:-344.50px;width:1200px;text-align:right;-webkit-text-stroke:0.3px #1f2937;">€ 131,81</div><div class="t" style="top:959.75px;font-size:18.7px;color:#1f2937;letter-spacing:0.1px;left:-127.00px;width:1200px;text-align:right;">€ 131,81</div><div class="t" style="top:959.75px;font-size:18.7px;color:#1f2937;letter-spacing:0.6px;left:1110.00px;">08-11-2024</div><div class="t" style="top:959.05px;font-size:18.7px;color:#1f2937;letter-spacing:0.9px;left:1301.70px;">30/7/2</div><div class="t" style="top:959.75px;font-size:18.7px;color:#1f2937;letter-spacing:0.6px;left:1440.00px;">08-12-2024</div><div class="t" style="top:959.75px;font-size:18.7px;color:#1f2937;letter-spacing:0.1px;left:1901.60px;">1035424 Eulen-Apotheke Marktstraße...</div><div class="r" style="left:2294.70px;top:955.25px;width:24.00px;height:24.00px;background:#f3f4f7;border:1.5px solid #cdd3de;border-radius:5px"></div><div class="r" style="left:2384.70px;top:955.25px;width:24.00px;height:24.00px;background:#f3f4f7;border:1.5px solid #cdd3de;border-radius:5px"></div><div class="t" style="top:959.75px;font-size:18.7px;color:#1f2937;letter-spacing:0.2px;left:2457.40px;">1. Mahnung</div><div class="r" style="left:2954.70px;top:955.25px;width:24.00px;height:24.00px;background:#f3f4f7;border:1.5px solid #cdd3de;border-radius:5px"></div><div class="t" style="top:959.75px;font-size:18.7px;color:#1f2937;left:3029.70px;">1</div><div class="t" style="top:959.75px;font-size:18.7px;color:#1f2937;letter-spacing:0.2px;left:3119.90px;">Legacy-Booking</div><div class="r" style="left:245.00px;top:992.50px;width:187.50px;height:49.00px;background:#fdfdfd"></div><div class="r" style="left:1287.50px;top:992.50px;width:135.00px;height:49.00px;background:#fdfdfd"></div><div class="r" style="left:1887.50px;top:992.50px;width:375.00px;height:49.00px;background:#fdfdfd"></div><div class="r" style="left:2262.50px;top:992.50px;width:90.00px;height:49.00px;background:#fdfdfd"></div><div class="r" style="left:2352.50px;top:992.50px;width:90.00px;height:49.00px;background:#fdfdfd"></div><div class="r" style="left:2442.50px;top:992.50px;width:180.00px;height:49.00px;background:#fdfdfd"></div><div class="r" style="left:2622.50px;top:992.50px;width:300.00px;height:49.00px;background:#fdfdfd"></div><div class="r" style="left:2922.50px;top:992.50px;width:90.00px;height:49.00px;background:#fdfdfd"></div><div class="r" style="left:0.00px;top:1041.50px;width:3218.00px;height:1.00px;background:#eceef2"></div><div class="r" style="left:245.00px;top:1041.50px;width:187.50px;height:1.00px;background:#d0d4de"></div><div class="r" style="left:245.00px;top:1040.50px;width:187.50px;height:1.00px;background:#fff"></div><div class="r" style="left:1287.50px;top:1041.50px;width:135.00px;height:1.00px;background:#d0d4de"></div><div class="r" style="left:1287.50px;top:1040.50px;width:135.00px;height:1.00px;background:#fff"></div><div class="r" style="left:1887.50px;top:1041.50px;width:375.00px;height:1.00px;background:#d0d4de"></div><div class="r" style="left:1887.50px;top:1040.50px;width:375.00px;height:1.00px;background:#fff"></div><div class="r" style="left:2262.50px;top:1041.50px;width:90.00px;height:1.00px;background:#d0d4de"></div><div class="r" style="left:2262.50px;top:1040.50px;width:90.00px;height:1.00px;background:#fff"></div><div class="r" style="left:2352.50px;top:1041.50px;width:90.00px;height:1.00px;background:#d0d4de"></div><div class="r" style="left:2352.50px;top:1040.50px;width:90.00px;height:1.00px;background:#fff"></div><div class="r" style="left:2442.50px;top:1041.50px;width:180.00px;height:1.00px;background:#d0d4de"></div><div class="r" style="left:2442.50px;top:1040.50px;width:180.00px;height:1.00px;background:#fff"></div><div class="r" style="left:2622.50px;top:1041.50px;width:300.00px;height:1.00px;background:#d0d4de"></div><div class="r" style="left:2622.50px;top:1040.50px;width:300.00px;height:1.00px;background:#fff"></div><div class="r" style="left:2922.50px;top:1041.50px;width:90.00px;height:1.00px;background:#d0d4de"></div><div class="r" style="left:2922.50px;top:1040.50px;width:90.00px;height:1.00px;background:#fff"></div><div class="r" style="left:139.25px;top:992.50px;width:1.50px;height:50.00px;background:#f1f2f5"></div><div class="r" style="left:244.25px;top:992.50px;width:1.50px;height:50.00px;background:#f1f2f5"></div><div class="r" style="left:431.75px;top:992.50px;width:1.50px;height:50.00px;background:#f1f2f5"></div><div class="r" style="left:656.75px;top:992.50px;width:1.50px;height:50.00px;background:#f1f2f5"></div><div class="r" style="left:874.25px;top:992.50px;width:1.50px;height:50.00px;background:#f1f2f5"></div><div class="r" style="left:1091.75px;top:992.50px;width:1.50px;height:50.00px;background:#f1f2f5"></div><div class="r" style="left:1286.75px;top:992.50px;width:1.50px;height:50.00px;background:#f1f2f5"></div><div class="r" style="left:1421.75px;top:992.50px;width:1.50px;height:50.00px;background:#f1f2f5"></div><div class="r" style="left:1586.75px;top:992.50px;width:1.50px;height:50.00px;background:#f1f2f5"></div><div class="r" style="left:1886.75px;top:992.50px;width:1.50px;height:50.00px;background:#f1f2f5"></div><div class="r" style="left:2261.75px;top:992.50px;width:1.50px;height:50.00px;background:#f1f2f5"></div><div class="r" style="left:2351.75px;top:992.50px;width:1.50px;height:50.00px;background:#f1f2f5"></div><div class="r" style="left:2441.75px;top:992.50px;width:1.50px;height:50.00px;background:#f1f2f5"></div><div class="r" style="left:2621.75px;top:992.50px;width:1.50px;height:50.00px;background:#f1f2f5"></div><div class="r" style="left:2921.75px;top:992.50px;width:1.50px;height:50.00px;background:#f1f2f5"></div><div class="r" style="left:3011.75px;top:992.50px;width:1.50px;height:50.00px;background:#f1f2f5"></div><div class="r" style="left:3101.75px;top:992.50px;width:1.50px;height:50.00px;background:#f1f2f5"></div><div class="t" style="top:1009.25px;font-size:18.7px;color:#1f2937;letter-spacing:0.6px;left:-7.50px;">08-11-2024</div><div class="t" style="top:1009.25px;font-size:18.7px;color:#1b6dd4;letter-spacing:0.5px;left:158.00px;">209770</div><div class="t" style="top:1008.55px;font-size:18.7px;color:#1f2937;letter-spacing:0.5px;left:259.70px;">24077672</div><div class="t" style="top:1009.25px;font-size:18.7px;color:#1f2937;letter-spacing:0.5px;left:450.00px;">24077672</div><div class="t" style="top:1009.25px;font-size:18.7px;color:#1f2937;letter-spacing:0.5px;left:-344.50px;width:1200px;text-align:right;-webkit-text-stroke:0.3px #1f2937;">€ 549,47</div><div class="t" style="top:1009.25px;font-size:18.7px;color:#1f2937;letter-spacing:0.1px;left:-127.00px;width:1200px;text-align:right;">€ 549,47</div><div class="t" style="top:1009.25px;font-size:18.7px;color:#1f2937;letter-spacing:0.6px;left:1110.00px;">08-11-2024</div><div class="t" style="top:1008.55px;font-size:18.7px;color:#1f2937;letter-spacing:0.9px;left:1301.70px;">30/7/2</div><div class="t" style="top:1009.25px;font-size:18.7px;color:#1f2937;letter-spacing:0.6px;left:1440.00px;">08-12-2024</div><div class="t" style="top:1009.25px;font-size:18.7px;color:#1f2937;letter-spacing:0.1px;left:1604.90px;">80000 Erlöse 19% (HR)</div><div class="t" style="top:1009.25px;font-size:18.7px;color:#1f2937;letter-spacing:0.1px;left:1901.60px;">1053006 Rhein-Med Apotheke Haupts...</div><div class="r" style="left:2294.70px;top:1004.75px;width:24.00px;height:24.00px;background:#f3f4f7;border:1.5px solid #cdd3de;border-radius:5px"></div><div class="r" style="left:2384.70px;top:1004.75px;width:24.00px;height:24.00px;background:#f3f4f7;border:1.5px solid #cdd3de;border-radius:5px"></div><div class="t" style="top:1009.25px;font-size:18.7px;color:#1f2937;letter-spacing:0.2px;left:2457.40px;">1. Mahnung</div><div class="r" style="left:2954.70px;top:1004.75px;width:24.00px;height:24.00px;background:#f3f4f7;border:1.5px solid #cdd3de;border-radius:5px"></div><div class="t" style="top:1009.25px;font-size:18.7px;color:#1f2937;left:3029.70px;">1</div><div class="t" style="top:1009.25px;font-size:18.7px;color:#1f2937;letter-spacing:0.2px;left:3119.90px;">Legacy-Booking</div><div class="r" style="left:245.00px;top:1042.50px;width:187.50px;height:48.00px;background:#fdfdfd"></div><div class="r" style="left:1287.50px;top:1042.50px;width:135.00px;height:48.00px;background:#fdfdfd"></div><div class="r" style="left:1887.50px;top:1042.50px;width:375.00px;height:48.00px;background:#fdfdfd"></div><div class="r" style="left:2262.50px;top:1042.50px;width:90.00px;height:48.00px;background:#fdfdfd"></div><div class="r" style="left:2352.50px;top:1042.50px;width:90.00px;height:48.00px;background:#fdfdfd"></div><div class="r" style="left:2442.50px;top:1042.50px;width:180.00px;height:48.00px;background:#fdfdfd"></div><div class="r" style="left:2622.50px;top:1042.50px;width:300.00px;height:48.00px;background:#fdfdfd"></div><div class="r" style="left:2922.50px;top:1042.50px;width:90.00px;height:48.00px;background:#fdfdfd"></div><div class="r" style="left:0.00px;top:1090.50px;width:3218.00px;height:1.00px;background:#eceef2"></div><div class="r" style="left:245.00px;top:1090.50px;width:187.50px;height:1.00px;background:#d0d4de"></div><div class="r" style="left:245.00px;top:1089.50px;width:187.50px;height:1.00px;background:#fff"></div><div class="r" style="left:1287.50px;top:1090.50px;width:135.00px;height:1.00px;background:#d0d4de"></div><div class="r" style="left:1287.50px;top:1089.50px;width:135.00px;height:1.00px;background:#fff"></div><div class="r" style="left:1887.50px;top:1090.50px;width:375.00px;height:1.00px;background:#d0d4de"></div><div class="r" style="left:1887.50px;top:1089.50px;width:375.00px;height:1.00px;background:#fff"></div><div class="r" style="left:2262.50px;top:1090.50px;width:90.00px;height:1.00px;background:#d0d4de"></div><div class="r" style="left:2262.50px;top:1089.50px;width:90.00px;height:1.00px;background:#fff"></div><div class="r" style="left:2352.50px;top:1090.50px;width:90.00px;height:1.00px;background:#d0d4de"></div><div class="r" style="left:2352.50px;top:1089.50px;width:90.00px;height:1.00px;background:#fff"></div><div class="r" style="left:2442.50px;top:1090.50px;width:180.00px;height:1.00px;background:#d0d4de"></div><div class="r" style="left:2442.50px;top:1089.50px;width:180.00px;height:1.00px;background:#fff"></div><div class="r" style="left:2622.50px;top:1090.50px;width:300.00px;height:1.00px;background:#d0d4de"></div><div class="r" style="left:2622.50px;top:1089.50px;width:300.00px;height:1.00px;background:#fff"></div><div class="r" style="left:2922.50px;top:1090.50px;width:90.00px;height:1.00px;background:#d0d4de"></div><div class="r" style="left:2922.50px;top:1089.50px;width:90.00px;height:1.00px;background:#fff"></div><div class="r" style="left:139.25px;top:1042.50px;width:1.50px;height:49.00px;background:#f1f2f5"></div><div class="r" style="left:244.25px;top:1042.50px;width:1.50px;height:49.00px;background:#f1f2f5"></div><div class="r" style="left:431.75px;top:1042.50px;width:1.50px;height:49.00px;background:#f1f2f5"></div><div class="r" style="left:656.75px;top:1042.50px;width:1.50px;height:49.00px;background:#f1f2f5"></div><div class="r" style="left:874.25px;top:1042.50px;width:1.50px;height:49.00px;background:#f1f2f5"></div><div class="r" style="left:1091.75px;top:1042.50px;width:1.50px;height:49.00px;background:#f1f2f5"></div><div class="r" style="left:1286.75px;top:1042.50px;width:1.50px;height:49.00px;background:#f1f2f5"></div><div class="r" style="left:1421.75px;top:1042.50px;width:1.50px;height:49.00px;background:#f1f2f5"></div><div class="r" style="left:1586.75px;top:1042.50px;width:1.50px;height:49.00px;background:#f1f2f5"></div><div class="r" style="left:1886.75px;top:1042.50px;width:1.50px;height:49.00px;background:#f1f2f5"></div><div class="r" style="left:2261.75px;top:1042.50px;width:1.50px;height:49.00px;background:#f1f2f5"></div><div class="r" style="left:2351.75px;top:1042.50px;width:1.50px;height:49.00px;background:#f1f2f5"></div><div class="r" style="left:2441.75px;top:1042.50px;width:1.50px;height:49.00px;background:#f1f2f5"></div><div class="r" style="left:2621.75px;top:1042.50px;width:1.50px;height:49.00px;background:#f1f2f5"></div><div class="r" style="left:2921.75px;top:1042.50px;width:1.50px;height:49.00px;background:#f1f2f5"></div><div class="r" style="left:3011.75px;top:1042.50px;width:1.50px;height:49.00px;background:#f1f2f5"></div><div class="r" style="left:3101.75px;top:1042.50px;width:1.50px;height:49.00px;background:#f1f2f5"></div><div class="t" style="top:1058.75px;font-size:18.7px;color:#1f2937;letter-spacing:0.6px;left:-7.50px;">08-11-2024</div><div class="t" style="top:1058.75px;font-size:18.7px;color:#1b6dd4;letter-spacing:0.5px;left:158.00px;">209768</div><div class="t" style="top:1058.05px;font-size:18.7px;color:#1f2937;letter-spacing:0.5px;left:259.70px;">24077671</div><div class="t" style="top:1058.75px;font-size:18.7px;color:#1f2937;letter-spacing:0.5px;left:450.00px;">24077671</div><div class="t" style="top:1058.75px;font-size:18.7px;color:#1f2937;letter-spacing:0.5px;left:-344.50px;width:1200px;text-align:right;-webkit-text-stroke:0.3px #1f2937;">€ 4 280,40</div><div class="t" style="top:1058.75px;font-size:18.7px;color:#1f2937;letter-spacing:0.1px;left:-127.00px;width:1200px;text-align:right;">€ 4 280,40</div><div class="t" style="top:1058.75px;font-size:18.7px;color:#1f2937;letter-spacing:0.6px;left:1110.00px;">08-11-2024</div><div class="t" style="top:1058.05px;font-size:18.7px;color:#1f2937;letter-spacing:0.9px;left:1301.70px;">30/0/0</div><div class="t" style="top:1058.75px;font-size:18.7px;color:#1f2937;letter-spacing:0.6px;left:1440.00px;">08-12-2024</div><div class="t" style="top:1058.75px;font-size:18.7px;color:#1f2937;letter-spacing:0.1px;left:1604.90px;">80040 Erlöse EG HR</div><div class="t" style="top:1058.75px;font-size:18.7px;color:#1f2937;letter-spacing:0.1px;left:1901.60px;">1170204 Wholefoods Wholesale Killee...</div><div class="r" style="left:2294.70px;top:1054.25px;width:24.00px;height:24.00px;background:#f3f4f7;border:1.5px solid #cdd3de;border-radius:5px"></div><div class="r" style="left:2384.70px;top:1054.25px;width:24.00px;height:24.00px;background:#f3f4f7;border:1.5px solid #cdd3de;border-radius:5px"></div><div class="t" style="top:1058.75px;font-size:18.7px;color:#1f2937;letter-spacing:0.2px;left:2457.40px;">1. Mahnung</div><div class="r" style="left:2954.70px;top:1054.25px;width:24.00px;height:24.00px;background:#f3f4f7;border:1.5px solid #cdd3de;border-radius:5px"></div><div class="t" style="top:1058.75px;font-size:18.7px;color:#1f2937;left:3029.70px;">1</div><div class="t" style="top:1058.75px;font-size:18.7px;color:#1f2937;letter-spacing:0.2px;left:3119.90px;">Legacy-Booking</div><div class="r" style="left:245.00px;top:1091.50px;width:187.50px;height:49.00px;background:#fdfdfd"></div><div class="r" style="left:1287.50px;top:1091.50px;width:135.00px;height:49.00px;background:#fdfdfd"></div><div class="r" style="left:1887.50px;top:1091.50px;width:375.00px;height:49.00px;background:#fdfdfd"></div><div class="r" style="left:2262.50px;top:1091.50px;width:90.00px;height:49.00px;background:#fdfdfd"></div><div class="r" style="left:2352.50px;top:1091.50px;width:90.00px;height:49.00px;background:#fdfdfd"></div><div class="r" style="left:2442.50px;top:1091.50px;width:180.00px;height:49.00px;background:#fdfdfd"></div><div class="r" style="left:2622.50px;top:1091.50px;width:300.00px;height:49.00px;background:#fdfdfd"></div><div class="r" style="left:2922.50px;top:1091.50px;width:90.00px;height:49.00px;background:#fdfdfd"></div><div class="r" style="left:0.00px;top:1140.50px;width:3218.00px;height:1.00px;background:#eceef2"></div><div class="r" style="left:245.00px;top:1140.50px;width:187.50px;height:1.00px;background:#d0d4de"></div><div class="r" style="left:245.00px;top:1139.50px;width:187.50px;height:1.00px;background:#fff"></div><div class="r" style="left:1287.50px;top:1140.50px;width:135.00px;height:1.00px;background:#d0d4de"></div><div class="r" style="left:1287.50px;top:1139.50px;width:135.00px;height:1.00px;background:#fff"></div><div class="r" style="left:1887.50px;top:1140.50px;width:375.00px;height:1.00px;background:#d0d4de"></div><div class="r" style="left:1887.50px;top:1139.50px;width:375.00px;height:1.00px;background:#fff"></div><div class="r" style="left:2262.50px;top:1140.50px;width:90.00px;height:1.00px;background:#d0d4de"></div><div class="r" style="left:2262.50px;top:1139.50px;width:90.00px;height:1.00px;background:#fff"></div><div class="r" style="left:2352.50px;top:1140.50px;width:90.00px;height:1.00px;background:#d0d4de"></div><div class="r" style="left:2352.50px;top:1139.50px;width:90.00px;height:1.00px;background:#fff"></div><div class="r" style="left:2442.50px;top:1140.50px;width:180.00px;height:1.00px;background:#d0d4de"></div><div class="r" style="left:2442.50px;top:1139.50px;width:180.00px;height:1.00px;background:#fff"></div><div class="r" style="left:2622.50px;top:1140.50px;width:300.00px;height:1.00px;background:#d0d4de"></div><div class="r" style="left:2622.50px;top:1139.50px;width:300.00px;height:1.00px;background:#fff"></div><div class="r" style="left:2922.50px;top:1140.50px;width:90.00px;height:1.00px;background:#d0d4de"></div><div class="r" style="left:2922.50px;top:1139.50px;width:90.00px;height:1.00px;background:#fff"></div><div class="r" style="left:139.25px;top:1091.50px;width:1.50px;height:50.00px;background:#f1f2f5"></div><div class="r" style="left:244.25px;top:1091.50px;width:1.50px;height:50.00px;background:#f1f2f5"></div><div class="r" style="left:431.75px;top:1091.50px;width:1.50px;height:50.00px;background:#f1f2f5"></div><div class="r" style="left:656.75px;top:1091.50px;width:1.50px;height:50.00px;background:#f1f2f5"></div><div class="r" style="left:874.25px;top:1091.50px;width:1.50px;height:50.00px;background:#f1f2f5"></div><div class="r" style="left:1091.75px;top:1091.50px;width:1.50px;height:50.00px;background:#f1f2f5"></div><div class="r" style="left:1286.75px;top:1091.50px;width:1.50px;height:50.00px;background:#f1f2f5"></div><div class="r" style="left:1421.75px;top:1091.50px;width:1.50px;height:50.00px;background:#f1f2f5"></div><div class="r" style="left:1586.75px;top:1091.50px;width:1.50px;height:50.00px;background:#f1f2f5"></div><div class="r" style="left:1886.75px;top:1091.50px;width:1.50px;height:50.00px;background:#f1f2f5"></div><div class="r" style="left:2261.75px;top:1091.50px;width:1.50px;height:50.00px;background:#f1f2f5"></div><div class="r" style="left:2351.75px;top:1091.50px;width:1.50px;height:50.00px;background:#f1f2f5"></div><div class="r" style="left:2441.75px;top:1091.50px;width:1.50px;height:50.00px;background:#f1f2f5"></div><div class="r" style="left:2621.75px;top:1091.50px;width:1.50px;height:50.00px;background:#f1f2f5"></div><div class="r" style="left:2921.75px;top:1091.50px;width:1.50px;height:50.00px;background:#f1f2f5"></div><div class="r" style="left:3011.75px;top:1091.50px;width:1.50px;height:50.00px;background:#f1f2f5"></div><div class="r" style="left:3101.75px;top:1091.50px;width:1.50px;height:50.00px;background:#f1f2f5"></div><div class="t" style="top:1108.25px;font-size:18.7px;color:#1f2937;letter-spacing:0.6px;left:-7.50px;">08-11-2024</div><div class="t" style="top:1108.25px;font-size:18.7px;color:#1b6dd4;letter-spacing:0.5px;left:158.00px;">209229</div><div class="t" style="top:1107.55px;font-size:18.7px;color:#1f2937;letter-spacing:0.5px;left:259.70px;">24077357</div><div class="t" style="top:1108.25px;font-size:18.7px;color:#1f2937;letter-spacing:0.5px;left:450.00px;">24077357</div><div class="t" style="top:1108.25px;font-size:18.7px;color:#1f2937;letter-spacing:0.5px;left:-344.50px;width:1200px;text-align:right;-webkit-text-stroke:0.3px #1f2937;">€ 219,96</div><div class="t" style="top:1108.25px;font-size:18.7px;color:#1f2937;letter-spacing:0.1px;left:-127.00px;width:1200px;text-align:right;">€ 219,96</div><div class="t" style="top:1108.25px;font-size:18.7px;color:#1f2937;letter-spacing:0.6px;left:1110.00px;">08-11-2024</div><div class="t" style="top:1107.55px;font-size:18.7px;color:#1f2937;letter-spacing:0.9px;left:1301.70px;">30/7/2</div><div class="t" style="top:1108.25px;font-size:18.7px;color:#1f2937;letter-spacing:0.6px;left:1440.00px;">08-12-2024</div><div class="t" style="top:1108.25px;font-size:18.7px;color:#1f2937;letter-spacing:0.1px;left:1604.90px;">80000 Erlöse 19% (HR)</div><div class="t" style="top:1108.25px;font-size:18.7px;color:#1f2937;letter-spacing:0.1px;left:1901.60px;">1025182 Wiesen Apotheke Ebinger Ha...</div><div class="r" style="left:2294.70px;top:1103.75px;width:24.00px;height:24.00px;background:#f3f4f7;border:1.5px solid #cdd3de;border-radius:5px"></div><div class="r" style="left:2384.70px;top:1103.75px;width:24.00px;height:24.00px;background:#f3f4f7;border:1.5px solid #cdd3de;border-radius:5px"></div><div class="t" style="top:1108.25px;font-size:18.7px;color:#1f2937;letter-spacing:0.2px;left:2457.40px;">1. Mahnung</div><div class="r" style="left:2954.70px;top:1103.75px;width:24.00px;height:24.00px;background:#f3f4f7;border:1.5px solid #cdd3de;border-radius:5px"></div><div class="t" style="top:1108.25px;font-size:18.7px;color:#1f2937;left:3029.70px;">1</div><div class="t" style="top:1108.25px;font-size:18.7px;color:#1f2937;letter-spacing:0.2px;left:3119.90px;">Legacy-Booking</div><div class="r" style="left:245.00px;top:1141.50px;width:187.50px;height:48.00px;background:#fdfdfd"></div><div class="r" style="left:1287.50px;top:1141.50px;width:135.00px;height:48.00px;background:#fdfdfd"></div><div class="r" style="left:1887.50px;top:1141.50px;width:375.00px;height:48.00px;background:#fdfdfd"></div><div class="r" style="left:2262.50px;top:1141.50px;width:90.00px;height:48.00px;background:#fdfdfd"></div><div class="r" style="left:2352.50px;top:1141.50px;width:90.00px;height:48.00px;background:#fdfdfd"></div><div class="r" style="left:2442.50px;top:1141.50px;width:180.00px;height:48.00px;background:#fdfdfd"></div><div class="r" style="left:2622.50px;top:1141.50px;width:300.00px;height:48.00px;background:#fdfdfd"></div><div class="r" style="left:2922.50px;top:1141.50px;width:90.00px;height:48.00px;background:#fdfdfd"></div><div class="r" style="left:0.00px;top:1189.50px;width:3218.00px;height:1.00px;background:#eceef2"></div><div class="r" style="left:245.00px;top:1189.50px;width:187.50px;height:1.00px;background:#d0d4de"></div><div class="r" style="left:245.00px;top:1188.50px;width:187.50px;height:1.00px;background:#fff"></div><div class="r" style="left:1287.50px;top:1189.50px;width:135.00px;height:1.00px;background:#d0d4de"></div><div class="r" style="left:1287.50px;top:1188.50px;width:135.00px;height:1.00px;background:#fff"></div><div class="r" style="left:1887.50px;top:1189.50px;width:375.00px;height:1.00px;background:#d0d4de"></div><div class="r" style="left:1887.50px;top:1188.50px;width:375.00px;height:1.00px;background:#fff"></div><div class="r" style="left:2262.50px;top:1189.50px;width:90.00px;height:1.00px;background:#d0d4de"></div><div class="r" style="left:2262.50px;top:1188.50px;width:90.00px;height:1.00px;background:#fff"></div><div class="r" style="left:2352.50px;top:1189.50px;width:90.00px;height:1.00px;background:#d0d4de"></div><div class="r" style="left:2352.50px;top:1188.50px;width:90.00px;height:1.00px;background:#fff"></div><div class="r" style="left:2442.50px;top:1189.50px;width:180.00px;height:1.00px;background:#d0d4de"></div><div class="r" style="left:2442.50px;top:1188.50px;width:180.00px;height:1.00px;background:#fff"></div><div class="r" style="left:2622.50px;top:1189.50px;width:300.00px;height:1.00px;background:#d0d4de"></div><div class="r" style="left:2622.50px;top:1188.50px;width:300.00px;height:1.00px;background:#fff"></div><div class="r" style="left:2922.50px;top:1189.50px;width:90.00px;height:1.00px;background:#d0d4de"></div><div class="r" style="left:2922.50px;top:1188.50px;width:90.00px;height:1.00px;background:#fff"></div><div class="r" style="left:139.25px;top:1141.50px;width:1.50px;height:49.00px;background:#f1f2f5"></div><div class="r" style="left:244.25px;top:1141.50px;width:1.50px;height:49.00px;background:#f1f2f5"></div><div class="r" style="left:431.75px;top:1141.50px;width:1.50px;height:49.00px;background:#f1f2f5"></div><div class="r" style="left:656.75px;top:1141.50px;width:1.50px;height:49.00px;background:#f1f2f5"></div><div class="r" style="left:874.25px;top:1141.50px;width:1.50px;height:49.00px;background:#f1f2f5"></div><div class="r" style="left:1091.75px;top:1141.50px;width:1.50px;height:49.00px;background:#f1f2f5"></div><div class="r" style="left:1286.75px;top:1141.50px;width:1.50px;height:49.00px;background:#f1f2f5"></div><div class="r" style="left:1421.75px;top:1141.50px;width:1.50px;height:49.00px;background:#f1f2f5"></div><div class="r" style="left:1586.75px;top:1141.50px;width:1.50px;height:49.00px;background:#f1f2f5"></div><div class="r" style="left:1886.75px;top:1141.50px;width:1.50px;height:49.00px;background:#f1f2f5"></div><div class="r" style="left:2261.75px;top:1141.50px;width:1.50px;height:49.00px;background:#f1f2f5"></div><div class="r" style="left:2351.75px;top:1141.50px;width:1.50px;height:49.00px;background:#f1f2f5"></div><div class="r" style="left:2441.75px;top:1141.50px;width:1.50px;height:49.00px;background:#f1f2f5"></div><div class="r" style="left:2621.75px;top:1141.50px;width:1.50px;height:49.00px;background:#f1f2f5"></div><div class="r" style="left:2921.75px;top:1141.50px;width:1.50px;height:49.00px;background:#f1f2f5"></div><div class="r" style="left:3011.75px;top:1141.50px;width:1.50px;height:49.00px;background:#f1f2f5"></div><div class="r" style="left:3101.75px;top:1141.50px;width:1.50px;height:49.00px;background:#f1f2f5"></div><div class="t" style="top:1157.75px;font-size:18.7px;color:#1f2937;letter-spacing:0.6px;left:-7.50px;">08-11-2024</div><div class="t" style="top:1157.75px;font-size:18.7px;color:#1b6dd4;letter-spacing:0.5px;left:158.00px;">209201</div><div class="t" style="top:1157.05px;font-size:18.7px;color:#1f2937;letter-spacing:0.5px;left:259.70px;">24077339</div><div class="t" style="top:1157.75px;font-size:18.7px;color:#1f2937;letter-spacing:0.5px;left:450.00px;">24077339</div><div class="t" style="top:1157.75px;font-size:18.7px;color:#1f2937;letter-spacing:0.5px;left:-344.50px;width:1200px;text-align:right;-webkit-text-stroke:0.3px #1f2937;">€ 55,98</div><div class="t" style="top:1157.75px;font-size:18.7px;color:#1f2937;letter-spacing:0.1px;left:-127.00px;width:1200px;text-align:right;">€ 55,98</div><div class="t" style="top:1157.75px;font-size:18.7px;color:#1f2937;letter-spacing:0.6px;left:1110.00px;">08-11-2024</div><div class="t" style="top:1157.05px;font-size:18.7px;color:#1f2937;letter-spacing:0.9px;left:1301.70px;">30/7/2</div><div class="t" style="top:1157.75px;font-size:18.7px;color:#1f2937;letter-spacing:0.6px;left:1440.00px;">08-12-2024</div><div class="t" style="top:1157.75px;font-size:18.7px;color:#1f2937;letter-spacing:0.1px;left:1604.90px;">80000 Erlöse 19% (HR)</div><div class="t" style="top:1157.75px;font-size:18.7px;color:#1f2937;letter-spacing:0.1px;left:1901.60px;">1230708 Reformhaus Gesunde E Bahn...</div><div class="r" style="left:2294.70px;top:1153.25px;width:24.00px;height:24.00px;background:#f3f4f7;border:1.5px solid #cdd3de;border-radius:5px"></div><div class="r" style="left:2384.70px;top:1153.25px;width:24.00px;height:24.00px;background:#f3f4f7;border:1.5px solid #cdd3de;border-radius:5px"></div><div class="t" style="top:1157.75px;font-size:18.7px;color:#1f2937;letter-spacing:0.2px;left:2457.40px;">1. Mahnung</div><div class="r" style="left:2954.70px;top:1153.25px;width:24.00px;height:24.00px;background:#f3f4f7;border:1.5px solid #cdd3de;border-radius:5px"></div><div class="t" style="top:1157.75px;font-size:18.7px;color:#1f2937;left:3029.70px;">1</div><div class="t" style="top:1157.75px;font-size:18.7px;color:#1f2937;letter-spacing:0.2px;left:3119.90px;">Legacy-Booking</div><div class="r" style="left:245.00px;top:1190.50px;width:187.50px;height:49.00px;background:#fdfdfd"></div><div class="r" style="left:1287.50px;top:1190.50px;width:135.00px;height:49.00px;background:#fdfdfd"></div><div class="r" style="left:1887.50px;top:1190.50px;width:375.00px;height:49.00px;background:#fdfdfd"></div><div class="r" style="left:2262.50px;top:1190.50px;width:90.00px;height:49.00px;background:#fdfdfd"></div><div class="r" style="left:2352.50px;top:1190.50px;width:90.00px;height:49.00px;background:#fdfdfd"></div><div class="r" style="left:2442.50px;top:1190.50px;width:180.00px;height:49.00px;background:#fdfdfd"></div><div class="r" style="left:2622.50px;top:1190.50px;width:300.00px;height:49.00px;background:#fdfdfd"></div><div class="r" style="left:2922.50px;top:1190.50px;width:90.00px;height:49.00px;background:#fdfdfd"></div><div class="r" style="left:0.00px;top:1239.50px;width:3218.00px;height:1.00px;background:#eceef2"></div><div class="r" style="left:245.00px;top:1239.50px;width:187.50px;height:1.00px;background:#d0d4de"></div><div class="r" style="left:245.00px;top:1238.50px;width:187.50px;height:1.00px;background:#fff"></div><div class="r" style="left:1287.50px;top:1239.50px;width:135.00px;height:1.00px;background:#d0d4de"></div><div class="r" style="left:1287.50px;top:1238.50px;width:135.00px;height:1.00px;background:#fff"></div><div class="r" style="left:1887.50px;top:1239.50px;width:375.00px;height:1.00px;background:#d0d4de"></div><div class="r" style="left:1887.50px;top:1238.50px;width:375.00px;height:1.00px;background:#fff"></div><div class="r" style="left:2262.50px;top:1239.50px;width:90.00px;height:1.00px;background:#d0d4de"></div><div class="r" style="left:2262.50px;top:1238.50px;width:90.00px;height:1.00px;background:#fff"></div><div class="r" style="left:2352.50px;top:1239.50px;width:90.00px;height:1.00px;background:#d0d4de"></div><div class="r" style="left:2352.50px;top:1238.50px;width:90.00px;height:1.00px;background:#fff"></div><div class="r" style="left:2442.50px;top:1239.50px;width:180.00px;height:1.00px;background:#d0d4de"></div><div class="r" style="left:2442.50px;top:1238.50px;width:180.00px;height:1.00px;background:#fff"></div><div class="r" style="left:2622.50px;top:1239.50px;width:300.00px;height:1.00px;background:#d0d4de"></div><div class="r" style="left:2622.50px;top:1238.50px;width:300.00px;height:1.00px;background:#fff"></div><div class="r" style="left:2922.50px;top:1239.50px;width:90.00px;height:1.00px;background:#d0d4de"></div><div class="r" style="left:2922.50px;top:1238.50px;width:90.00px;height:1.00px;background:#fff"></div><div class="r" style="left:139.25px;top:1190.50px;width:1.50px;height:50.00px;background:#f1f2f5"></div><div class="r" style="left:244.25px;top:1190.50px;width:1.50px;height:50.00px;background:#f1f2f5"></div><div class="r" style="left:431.75px;top:1190.50px;width:1.50px;height:50.00px;background:#f1f2f5"></div><div class="r" style="left:656.75px;top:1190.50px;width:1.50px;height:50.00px;background:#f1f2f5"></div><div class="r" style="left:874.25px;top:1190.50px;width:1.50px;height:50.00px;background:#f1f2f5"></div><div class="r" style="left:1091.75px;top:1190.50px;width:1.50px;height:50.00px;background:#f1f2f5"></div><div class="r" style="left:1286.75px;top:1190.50px;width:1.50px;height:50.00px;background:#f1f2f5"></div><div class="r" style="left:1421.75px;top:1190.50px;width:1.50px;height:50.00px;background:#f1f2f5"></div><div class="r" style="left:1586.75px;top:1190.50px;width:1.50px;height:50.00px;background:#f1f2f5"></div><div class="r" style="left:1886.75px;top:1190.50px;width:1.50px;height:50.00px;background:#f1f2f5"></div><div class="r" style="left:2261.75px;top:1190.50px;width:1.50px;height:50.00px;background:#f1f2f5"></div><div class="r" style="left:2351.75px;top:1190.50px;width:1.50px;height:50.00px;background:#f1f2f5"></div><div class="r" style="left:2441.75px;top:1190.50px;width:1.50px;height:50.00px;background:#f1f2f5"></div><div class="r" style="left:2621.75px;top:1190.50px;width:1.50px;height:50.00px;background:#f1f2f5"></div><div class="r" style="left:2921.75px;top:1190.50px;width:1.50px;height:50.00px;background:#f1f2f5"></div><div class="r" style="left:3011.75px;top:1190.50px;width:1.50px;height:50.00px;background:#f1f2f5"></div><div class="r" style="left:3101.75px;top:1190.50px;width:1.50px;height:50.00px;background:#f1f2f5"></div><div class="t" style="top:1207.25px;font-size:18.7px;color:#1f2937;letter-spacing:0.6px;left:-7.50px;">08-11-2024</div><div class="t" style="top:1207.25px;font-size:18.7px;color:#1b6dd4;letter-spacing:0.5px;left:158.00px;">209144</div><div class="t" style="top:1206.55px;font-size:18.7px;color:#1f2937;letter-spacing:0.5px;left:259.70px;">24077306</div><div class="t" style="top:1207.25px;font-size:18.7px;color:#1f2937;letter-spacing:0.5px;left:450.00px;">24077306</div><div class="t" style="top:1207.25px;font-size:18.7px;color:#1f2937;letter-spacing:0.5px;left:-344.50px;width:1200px;text-align:right;-webkit-text-stroke:0.3px #1f2937;">€ 37,17</div><div class="t" style="top:1207.25px;font-size:18.7px;color:#1f2937;letter-spacing:0.1px;left:-127.00px;width:1200px;text-align:right;">€ 37,17</div><div class="t" style="top:1207.25px;font-size:18.7px;color:#1f2937;letter-spacing:0.6px;left:1110.00px;">08-11-2024</div><div class="t" style="top:1206.55px;font-size:18.7px;color:#1f2937;letter-spacing:0.9px;left:1301.70px;">30/7/2</div><div class="t" style="top:1207.25px;font-size:18.7px;color:#1f2937;letter-spacing:0.6px;left:1440.00px;">08-12-2024</div><div class="t" style="top:1207.25px;font-size:18.7px;color:#1f2937;letter-spacing:0.1px;left:1901.60px;">1057255 Wormser Reformhaus Am Rö...</div><div class="r" style="left:2294.70px;top:1202.75px;width:24.00px;height:24.00px;background:#f3f4f7;border:1.5px solid #cdd3de;border-radius:5px"></div><div class="r" style="left:2384.70px;top:1202.75px;width:24.00px;height:24.00px;background:#f3f4f7;border:1.5px solid #cdd3de;border-radius:5px"></div><div class="t" style="top:1207.25px;font-size:18.7px;color:#1f2937;letter-spacing:0.2px;left:2457.40px;">1. Mahnung</div><div class="r" style="left:2954.70px;top:1202.75px;width:24.00px;height:24.00px;background:#f3f4f7;border:1.5px solid #cdd3de;border-radius:5px"></div><div class="t" style="top:1207.25px;font-size:18.7px;color:#1f2937;left:3029.70px;">1</div><div class="t" style="top:1207.25px;font-size:18.7px;color:#1f2937;letter-spacing:0.2px;left:3119.90px;">Legacy-Booking</div><div class="r" style="left:245.00px;top:1240.50px;width:187.50px;height:48.00px;background:#fdfdfd"></div><div class="r" style="left:1287.50px;top:1240.50px;width:135.00px;height:48.00px;background:#fdfdfd"></div><div class="r" style="left:1887.50px;top:1240.50px;width:375.00px;height:48.00px;background:#fdfdfd"></div><div class="r" style="left:2262.50px;top:1240.50px;width:90.00px;height:48.00px;background:#fdfdfd"></div><div class="r" style="left:2352.50px;top:1240.50px;width:90.00px;height:48.00px;background:#fdfdfd"></div><div class="r" style="left:2442.50px;top:1240.50px;width:180.00px;height:48.00px;background:#fdfdfd"></div><div class="r" style="left:2622.50px;top:1240.50px;width:300.00px;height:48.00px;background:#fdfdfd"></div><div class="r" style="left:2922.50px;top:1240.50px;width:90.00px;height:48.00px;background:#fdfdfd"></div><div class="r" style="left:0.00px;top:1288.50px;width:3218.00px;height:1.00px;background:#eceef2"></div><div class="r" style="left:245.00px;top:1288.50px;width:187.50px;height:1.00px;background:#d0d4de"></div><div class="r" style="left:245.00px;top:1287.50px;width:187.50px;height:1.00px;background:#fff"></div><div class="r" style="left:1287.50px;top:1288.50px;width:135.00px;height:1.00px;background:#d0d4de"></div><div class="r" style="left:1287.50px;top:1287.50px;width:135.00px;height:1.00px;background:#fff"></div><div class="r" style="left:1887.50px;top:1288.50px;width:375.00px;height:1.00px;background:#d0d4de"></div><div class="r" style="left:1887.50px;top:1287.50px;width:375.00px;height:1.00px;background:#fff"></div><div class="r" style="left:2262.50px;top:1288.50px;width:90.00px;height:1.00px;background:#d0d4de"></div><div class="r" style="left:2262.50px;top:1287.50px;width:90.00px;height:1.00px;background:#fff"></div><div class="r" style="left:2352.50px;top:1288.50px;width:90.00px;height:1.00px;background:#d0d4de"></div><div class="r" style="left:2352.50px;top:1287.50px;width:90.00px;height:1.00px;background:#fff"></div><div class="r" style="left:2442.50px;top:1288.50px;width:180.00px;height:1.00px;background:#d0d4de"></div><div class="r" style="left:2442.50px;top:1287.50px;width:180.00px;height:1.00px;background:#fff"></div><div class="r" style="left:2622.50px;top:1288.50px;width:300.00px;height:1.00px;background:#d0d4de"></div><div class="r" style="left:2622.50px;top:1287.50px;width:300.00px;height:1.00px;background:#fff"></div><div class="r" style="left:2922.50px;top:1288.50px;width:90.00px;height:1.00px;background:#d0d4de"></div><div class="r" style="left:2922.50px;top:1287.50px;width:90.00px;height:1.00px;background:#fff"></div><div class="r" style="left:139.25px;top:1240.50px;width:1.50px;height:49.00px;background:#f1f2f5"></div><div class="r" style="left:244.25px;top:1240.50px;width:1.50px;height:49.00px;background:#f1f2f5"></div><div class="r" style="left:431.75px;top:1240.50px;width:1.50px;height:49.00px;background:#f1f2f5"></div><div class="r" style="left:656.75px;top:1240.50px;width:1.50px;height:49.00px;background:#f1f2f5"></div><div class="r" style="left:874.25px;top:1240.50px;width:1.50px;height:49.00px;background:#f1f2f5"></div><div class="r" style="left:1091.75px;top:1240.50px;width:1.50px;height:49.00px;background:#f1f2f5"></div><div class="r" style="left:1286.75px;top:1240.50px;width:1.50px;height:49.00px;background:#f1f2f5"></div><div class="r" style="left:1421.75px;top:1240.50px;width:1.50px;height:49.00px;background:#f1f2f5"></div><div class="r" style="left:1586.75px;top:1240.50px;width:1.50px;height:49.00px;background:#f1f2f5"></div><div class="r" style="left:1886.75px;top:1240.50px;width:1.50px;height:49.00px;background:#f1f2f5"></div><div class="r" style="left:2261.75px;top:1240.50px;width:1.50px;height:49.00px;background:#f1f2f5"></div><div class="r" style="left:2351.75px;top:1240.50px;width:1.50px;height:49.00px;background:#f1f2f5"></div><div class="r" style="left:2441.75px;top:1240.50px;width:1.50px;height:49.00px;background:#f1f2f5"></div><div class="r" style="left:2621.75px;top:1240.50px;width:1.50px;height:49.00px;background:#f1f2f5"></div><div class="r" style="left:2921.75px;top:1240.50px;width:1.50px;height:49.00px;background:#f1f2f5"></div><div class="r" style="left:3011.75px;top:1240.50px;width:1.50px;height:49.00px;background:#f1f2f5"></div><div class="r" style="left:3101.75px;top:1240.50px;width:1.50px;height:49.00px;background:#f1f2f5"></div><div class="t" style="top:1256.76px;font-size:18.7px;color:#1f2937;letter-spacing:0.6px;left:-7.50px;">07-11-2024</div><div class="t" style="top:1256.76px;font-size:18.7px;color:#1b6dd4;letter-spacing:0.5px;left:158.00px;">208673</div><div class="t" style="top:1256.06px;font-size:18.7px;color:#1f2937;letter-spacing:0.5px;left:259.70px;">24077271</div><div class="t" style="top:1256.76px;font-size:18.7px;color:#1f2937;letter-spacing:0.5px;left:450.00px;">24077271</div><div class="t" style="top:1256.76px;font-size:18.7px;color:#1f2937;letter-spacing:0.5px;left:-344.50px;width:1200px;text-align:right;-webkit-text-stroke:0.3px #1f2937;">€ 217,50</div><div class="t" style="top:1256.76px;font-size:18.7px;color:#1f2937;letter-spacing:0.1px;left:-127.00px;width:1200px;text-align:right;">€ 217,50</div><div class="t" style="top:1256.76px;font-size:18.7px;color:#1f2937;letter-spacing:0.6px;left:1110.00px;">07-11-2024</div><div class="t" style="top:1256.06px;font-size:18.7px;color:#1f2937;letter-spacing:0.9px;left:1301.70px;">30/7/2</div><div class="t" style="top:1256.76px;font-size:18.7px;color:#1f2937;letter-spacing:0.6px;left:1440.00px;">07-12-2024</div><div class="t" style="top:1256.76px;font-size:18.7px;color:#1f2937;letter-spacing:0.1px;left:1901.60px;">1036085 Rosen-Apotheke Bahnhofstr...</div><div class="r" style="left:2294.70px;top:1252.25px;width:24.00px;height:24.00px;background:#f3f4f7;border:1.5px solid #cdd3de;border-radius:5px"></div><div class="r" style="left:2384.70px;top:1252.25px;width:24.00px;height:24.00px;background:#f3f4f7;border:1.5px solid #cdd3de;border-radius:5px"></div><div class="t" style="top:1256.76px;font-size:18.7px;color:#1f2937;letter-spacing:0.2px;left:2457.40px;">1. Mahnung</div><div class="r" style="left:2954.70px;top:1252.25px;width:24.00px;height:24.00px;background:#f3f4f7;border:1.5px solid #cdd3de;border-radius:5px"></div><div class="t" style="top:1256.76px;font-size:18.7px;color:#1f2937;left:3029.70px;">1</div><div class="t" style="top:1256.76px;font-size:18.7px;color:#1f2937;letter-spacing:0.2px;left:3119.90px;">Legacy-Booking</div><div class="r" style="left:246.00px;top:49.50px;width:185.60px;height:50.60px;background:#fff;border:1.6px solid #939daf"></div><div class="t" style="top:65.90px;font-size:18.7px;color:#1f2937;letter-spacing:0.5px;left:262.00px;-webkit-text-stroke:0.25px #1f2937;">24057181</div><div class="r" style="left:1287.80px;top:49.50px;width:133.90px;height:50.60px;background:#fff;border:1.6px solid #939daf"></div><div class="t" style="top:65.61px;font-size:18.7px;color:#1f2937;letter-spacing:0.5px;left:1304.00px;-webkit-text-stroke:0.25px #1f2937;">60/</div><svg class="r" style="left:1345.00px;top:65.00px;" width="20" height="20" viewBox="0 0 20 20"><path d="M1.5 1.5 L18.5 18.5 M18.5 1.5 L1.5 18.5" stroke="#97a1b2" stroke-width="2.2"/></svg><svg class="r" style="left:1381.50px;top:68.50px;" width="19" height="12" viewBox="0 0 19 12"><path d="M1.5 1.5 L9.5 9.5 L17.5 1.5" stroke="#97a1b2" stroke-width="2.2" fill="none"/></svg><div class="r" style="left:1888.10px;top:49.50px;width:373.90px;height:50.60px;background:#fff;border:1.6px solid #939daf"></div><div class="r" style="left:1889.60px;top:51.50px;width:356.90px;height:46.60px;overflow:hidden;"><div class="t" style="top:15.11px;font-size:18.7px;color:#1f2937;letter-spacing:0.3px;left:14.60px;-webkit-text-stroke:0.25px #1f2937;">1170196 Healthy Food Brands Unit 34 Kerry</div></div><div class="r" style="left:2443.20px;top:49.50px;width:178.50px;height:50.60px;background:#fff;border:1.6px solid #939daf"></div><div class="t" style="top:65.62px;font-size:17.5px;color:#1f2937;letter-spacing:0.3px;left:2459.80px;">1. Mahnu</div><svg class="r" style="left:2546.00px;top:65.50px;" width="18" height="18" viewBox="0 0 18 18"><path d="M1.5 1.5 L16.5 16.5 M16.5 1.5 L1.5 16.5" stroke="#97a1b2" stroke-width="2.2"/></svg><svg class="r" style="left:2581.50px;top:68.50px;" width="19" height="12" viewBox="0 0 19 12"><path d="M1.5 1.5 L9.5 9.5 L17.5 1.5" stroke="#97a1b2" stroke-width="2.2" fill="none"/></svg><div class="r" style="left:2623.50px;top:49.50px;width:298.00px;height:50.60px;background:#fff;border:1.6px solid #939daf"></div><svg class="r" style="left:2879.00px;top:68.50px;" width="21" height="13" viewBox="0 0 21 13"><path d="M1.5 1.5 L10.5 10.5 L19.5 1.5" stroke="#97a1b2" stroke-width="2.2" fill="none"/></svg></div><svg class="r" style="left:2430.00px;top:90.00px;mix-blend-mode:multiply" width="165" height="45" viewBox="0 0 165 45"><path d="M4 11 Q9 8 14 6.5 Q40 3.5 90 4 Q140 5 160 9 V37 Q130 36 115 33.5 Q80 32 45 34.5 Q25 37 14 39 Q8 39 4 39 Z" fill="#ffe800"/></svg><div class="r" style="left:3218.00px;top:46.50px;width:22.00px;height:1281.00px;background:#f9fafb"></div><div class="r" style="left:3222.50px;top:50.00px;width:13.50px;height:16.00px;background:#c1c1c1;border-radius:7px"></div><div class="r" style="left:577.60px;top:1309.60px;width:2514.40px;height:14.10px;background:#c1c1c1;border-radius:7px"></div></div><div class="r" style="left:0.00px;top:0.00px;width:1.00px;height:2100.00px;background:#22282c"></div></body></html>
